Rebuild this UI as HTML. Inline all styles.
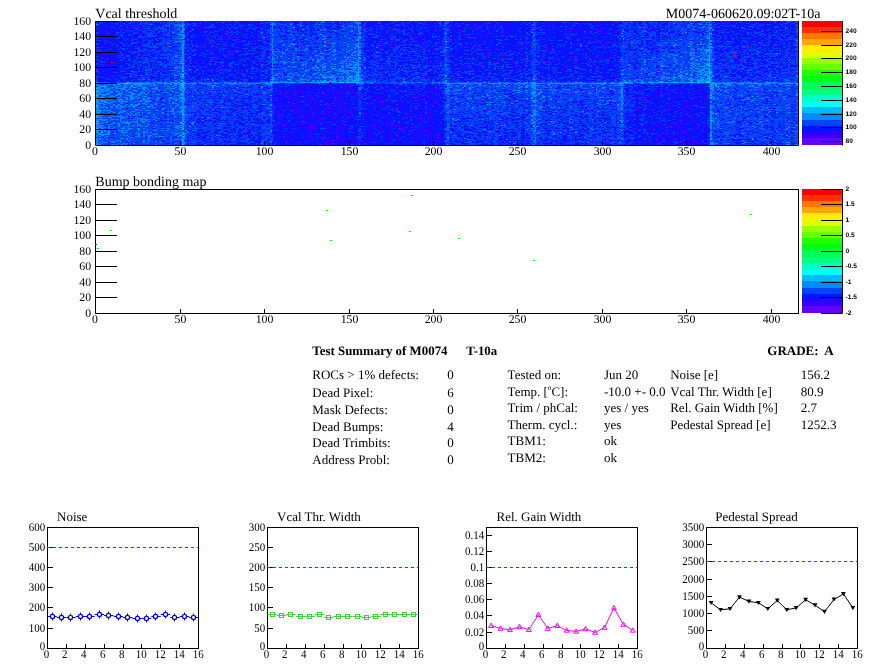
<!DOCTYPE html>
<html lang="en"><head><meta charset="utf-8"><title>Test Summary of M0074 T-10a</title>
<style>html,body{margin:0;padding:0;background:#fff;overflow:hidden}body{width:896px;height:672px}svg text{text-rendering:geometricPrecision}</style>
</head><body>
<svg width="896" height="672" viewBox="0 0 896 672" style="display:block;will-change:transform">
<rect width="896" height="672" fill="#fff"/>
<g transform="translate(96,21.0) scale(1.68750,1)" shape-rendering="crispEdges" fill="none" stroke-width="1">
<rect x="0" y="0" width="416" height="124" fill="#0014ff" stroke="none"/>
<path stroke="#6300ff" d="M290 12.5h1M224 25.5h1M300 32.5h1M266 41.5h1M126 71.5h1m4 0h1M108 73.5h1m27 0h1M128 77.5h1M169 81.5h1M137 82.5h1M349 85.5h1M333 86.5h1M138 87.5h1M198 88.5h1M136 89.5h1m10 0h1M129 91.5h1m20 0h1M349 93.5h1M126 95.5h1M196 99.5h1M114 100.5h1m27 0h1M203 104.5h1M123 106.5h1M142 114.5h1m50 0h1m139 0h1M142 115.5h1M359 120.5h1"/>
<path stroke="#3300ff" d="M4 0.5h2m4 0h2m30 0h1m17 0h1m2 0h1m5 0h1m12 0h1m80 0h1m6 0h1m13 0h2m4 0h1m6 0h2m2 0h1m11 0h1m2 0h1m2 0h1m4 0h1m1 0h2m2 0h1m14 0h1m3 0h1m1 0h1m1 0h2m2 0h1m9 0h1m1 0h1m7 0h4m2 0h2m2 0h1m1 0h1m1 0h1m1 0h2m4 0h1m4 0h1m26 0h1m33 0h1m1 0h1m24 0h1m3 0h1m3 0h1m6 0h1M10 1.5h1m8 0h1m41 0h1m24 0h1m5 0h1m5 0h1m62 0h1m1 0h1m5 0h1m5 0h1m17 0h2m20 0h2m3 0h1m4 0h1m2 0h1m15 0h1m22 0h1m5 0h1m1 0h1m8 0h1m10 0h1m9 0h1m2 0h1m39 0h1m40 0h1m1 0h1m5 0h1m2 0h1M3 2.5h1m3 0h1m1 0h1m15 0h1m13 0h1m19 0h1m11 0h1m21 0h1m1 0h1m41 0h1m26 0h1m31 0h1m12 0h1m6 0h1m2 0h1m5 0h1m23 0h1m1 0h1m1 0h1m11 0h1m1 0h1m4 0h1m4 0h2m4 0h1m4 0h1m5 0h1m1 0h1m6 0h1m2 0h2m1 0h1m41 0h1m45 0h1m14 0h1m2 0h1M6 3.5h1m8 0h1m51 0h1m7 0h1m2 0h1m17 0h1m63 0h1m38 0h1m3 0h1m6 0h1m8 0h1m4 0h3m4 0h1m1 0h1m3 0h1m4 0h1m3 0h1m17 0h1m3 0h1m4 0h1m3 0h1m9 0h1m2 0h2m6 0h2m8 0h1m22 0h1m8 0h1m33 0h1M10 4.5h1m2 0h1m3 0h1m43 0h1m8 0h1m11 0h1m13 0h1m67 0h1m32 0h1m4 0h1m15 0h1m2 0h1m13 0h1m1 0h1m11 0h1m5 0h1m1 0h1m8 0h1m5 0h1m4 0h1m9 0h1m3 0h2m3 0h1m4 0h2m3 0h1M8 5.5h1m14 0h1m1 0h1m37 0h1m1 0h1m6 0h1m10 0h1m75 0h1m1 0h1m2 0h1m5 0h1m9 0h1m4 0h1m25 0h1m4 0h1m4 0h1m3 0h1m2 0h1m10 0h1m4 0h2m7 0h1m13 0h1m17 0h1m3 0h1m11 0h1m5 0h2m71 0h1m31 0h1M7 6.5h1m3 0h1m78 0h1m71 0h1m1 0h1m20 0h1m2 0h1m2 0h1m1 0h1m16 0h1m32 0h1m1 0h1m1 0h1m3 0h1m1 0h1m10 0h1m8 0h1m2 0h3m5 0h1m1 0h2m3 0h1m2 0h2m3 0h1m1 0h2m17 0h1m65 0h1m7 0h1M3 7.5h1m6 0h1m7 0h1m41 0h1m17 0h1m99 0h1m14 0h1m17 0h1m5 0h1m7 0h1m2 0h1m15 0h1m29 0h1m1 0h1m1 0h3m1 0h1m2 0h1m14 0h2m3 0h1m2 0h1m17 0h1m40 0h1m1 0h1m17 0h1m2 0h1m6 0h1m14 0h1M4 8.5h1m3 0h2m55 0h1m7 0h1m6 0h1m1 0h1m8 0h1m5 0h1m11 0h1m33 0h1m49 0h1m5 0h1m9 0h1m2 0h2m5 0h2m4 0h1m3 0h1m10 0h1m5 0h1m6 0h1m13 0h1m6 0h1m6 0h1m3 0h3m3 0h1m9 0h1m76 0h1m1 0h1m16 0h1m5 0h1M4 9.5h1m2 0h3m1 0h1m50 0h1m109 0h1m8 0h1m6 0h1m10 0h1m4 0h2m7 0h2m1 0h1m7 0h1m5 0h1m13 0h1m3 0h1m12 0h1m9 0h1m9 0h1m1 0h2m2 0h1m2 0h1m1 0h1m1 0h2m1 0h2m5 0h1m91 0h1M3 10.5h1m1 0h2m51 0h1m29 0h1m38 0h1m30 0h1m11 0h1m5 0h1m8 0h2m8 0h1m7 0h1m9 0h1m7 0h1m4 0h3m7 0h1m15 0h1m3 0h1m8 0h1m1 0h1m4 0h2m5 0h1m6 0h1m7 0h1m7 0h2m77 0h1m20 0h1M7 11.5h1m2 0h1m15 0h1m11 0h1m16 0h1m17 0h1m38 0h1m49 0h1m7 0h2m9 0h1m30 0h1m15 0h1m8 0h1m29 0h1m5 0h1m5 0h1m3 0h1m7 0h1m8 0h2m5 0h1m1 0h1m75 0h1m15 0h1m9 0h1M34 12.5h1m134 0h2m7 0h1m9 0h2m11 0h1m12 0h1m10 0h1m4 0h1m1 0h1m1 0h2m3 0h1m1 0h1m7 0h1m4 0h1m11 0h2m1 0h1m23 0h1m4 0h1m2 0h1m4 0h1m63 0h1m10 0h1m11 0h1m14 0h1m3 0h1M3 13.5h1m22 0h1m40 0h1m4 0h1m1 0h1m2 0h2m91 0h1m18 0h1m20 0h1m6 0h1m13 0h1m3 0h1m4 0h1m1 0h1m21 0h1m4 0h1m2 0h1m4 0h1m1 0h1m1 0h1m6 0h1m9 0h1M39 14.5h1m24 0h1m2 0h1m16 0h1m78 0h1m11 0h1m25 0h2m6 0h1m6 0h2m3 0h1m13 0h1m1 0h1m1 0h1m12 0h1m10 0h2m1 0h2m7 0h1m2 0h1m1 0h1m4 0h1m4 0h1m4 0h1m3 0h1m1 0h1m2 0h1m27 0h1M3 15.5h1m3 0h1m5 0h1m56 0h1m4 0h1m1 0h1m7 0h1m8 0h1m5 0h1m70 0h1m6 0h1m6 0h2m3 0h1m1 0h1m20 0h1m7 0h1m2 0h1m1 0h1m1 0h1m1 0h1m10 0h1m1 0h1m12 0h1m10 0h1m2 0h1m9 0h1m4 0h1m1 0h1m1 0h2m19 0h1m89 0h1M5 16.5h3m60 0h1m4 0h1m2 0h1m7 0h2m4 0h1m68 0h1m2 0h1m35 0h1m13 0h1m2 0h1m14 0h1m2 0h1m5 0h1m4 0h1m8 0h1m3 0h1m14 0h1m10 0h1m4 0h1m6 0h1m7 0h1m1 0h1m1 0h1m63 0h1m8 0h1m16 0h1m2 0h1M1 17.5h1m4 0h1m49 0h1m4 0h1m6 0h1m3 0h1m3 0h1m8 0h1m9 0h1m92 0h1m21 0h1m16 0h1m7 0h1m2 0h1m2 0h1m6 0h1m4 0h1m12 0h1m11 0h1m2 0h1m16 0h1m6 0h1M1 18.5h1m4 0h1m1 0h1m2 0h1m5 0h1m68 0h1m4 0h1m3 0h1m80 0h1m3 0h1m15 0h1m32 0h1m59 0h1m3 0h1M61 19.5h1m8 0h1m12 0h1m18 0h1m64 0h1m7 0h1m5 0h1m3 0h1m6 0h1m3 0h1m13 0h1m9 0h1m7 0h1m23 0h1m30 0h1m7 0h1m3 0h1m2 0h1m3 0h1m89 0h1m9 0h1m2 0h1M5 20.5h1m2 0h2m19 0h1m6 0h1m20 0h1m1 0h1m10 0h1m5 0h1m1 0h1m18 0h1m65 0h2m5 0h1m10 0h1m29 0h1m2 0h1m4 0h1m15 0h1m7 0h1m12 0h1m8 0h2m4 0h1m3 0h1m15 0h2m13 0h1m97 0h1m8 0h1M0 21.5h2m9 0h1m5 0h1m5 0h1m39 0h1m1 0h1m7 0h1m8 0h1m1 0h1m7 0h1m3 0h1m84 0h1m5 0h1m25 0h1m3 0h1m30 0h1m17 0h1m9 0h1m2 0h1m11 0h1m7 0h2m9 0h1m101 0h1M8 22.5h1m1 0h1m13 0h1m1 0h1m51 0h1m1 0h1m6 0h1m3 0h1m76 0h1m58 0h1m7 0h1m11 0h3m2 0h2m11 0h1m9 0h2M3 23.5h1m1 0h1m6 0h1m4 0h1m7 0h1m6 0h1m23 0h1m9 0h2m9 0h1m15 0h1m6 0h1m61 0h1m10 0h1m4 0h1m1 0h1m11 0h1m10 0h3m6 0h2m2 0h1m6 0h1m6 0h1m4 0h1m20 0h1m14 0h1m11 0h1m5 0h1m3 0h1m6 0h1m4 0h1M2 24.5h1m5 0h2m15 0h1m40 0h1m6 0h1m5 0h1m4 0h1m6 0h1m68 0h1m17 0h1m33 0h1m1 0h1m6 0h1m3 0h1m2 0h1m1 0h1m11 0h1m19 0h1m1 0h1m5 0h1m2 0h1m8 0h1m13 0h1m2 0h1m1 0h1m98 0h1M3 25.5h1m2 0h1m1 0h1m17 0h1m38 0h1m4 0h2m4 0h1m9 0h1m87 0h2m42 0h1m8 0h1m11 0h1m1 0h1m5 0h1m21 0h1m15 0h1m2 0h1m113 0h1m10 0h1M2 26.5h1m6 0h2m18 0h1m43 0h1m7 0h1m2 0h1m6 0h1m4 0h1m5 0h1m78 0h1m48 0h1m5 0h1m1 0h1m7 0h1m9 0h1m7 0h1m12 0h2m1 0h1m12 0h2M4 27.5h2m16 0h1m3 0h1m39 0h1m2 0h1m14 0h1m84 0h2m3 0h1m21 0h1m2 0h1m19 0h1m1 0h1m6 0h1m1 0h1m9 0h1m3 0h1m2 0h1m17 0h2m1 0h1m3 0h1m17 0h1m103 0h1M4 28.5h1m1 0h2m1 0h1m8 0h1m17 0h1m24 0h2m4 0h1m6 0h1m1 0h1m5 0h1m3 0h1m6 0h1m70 0h1m31 0h1m17 0h2m2 0h1m10 0h1m8 0h1m1 0h2m5 0h1m8 0h1m11 0h1m10 0h1m2 0h1m12 0h1m5 0h1m2 0h2m86 0h2M4 29.5h1m17 0h1m38 0h1m20 0h1m2 0h1m1 0h1m107 0h1m3 0h1m25 0h1m6 0h1m3 0h1m5 0h1m9 0h1m14 0h1m2 0h1m4 0h1m13 0h1m88 0h1M10 30.5h1m28 0h1m2 0h1m27 0h1m128 0h1m9 0h2m4 0h3m1 0h1m16 0h1m6 0h1m2 0h1m29 0h1m6 0h1m14 0h1m1 0h1m3 0h2M2 31.5h1m77 0h1m9 0h1m1 0h1m8 0h1m63 0h1m54 0h1m13 0h1m5 0h1m11 0h1m16 0h1m8 0h1m8 0h1m2 0h1m12 0h1m11 0h1m9 0h1m87 0h1M13 32.5h1m50 0h1m3 0h1m17 0h1m4 0h1m100 0h1m3 0h1m14 0h1m18 0h1m16 0h2m2 0h1m1 0h1m12 0h1m12 0h1m7 0h1m107 0h1M5 33.5h1m5 0h1m6 0h1m4 0h1m2 0h1m32 0h1m22 0h1m117 0h1m12 0h1m7 0h1m9 0h1m10 0h1m6 0h1m17 0h1m11 0h1m1 0h1m16 0h1m3 0h1m3 0h1m72 0h2M9 34.5h1m54 0h4m14 0h1m1 0h1m38 0h1m38 0h1m18 0h1m8 0h1m21 0h1m2 0h1m9 0h1m10 0h1m9 0h1m1 0h1m4 0h2m19 0h1m20 0h1m4 0h1m7 0h1m60 0h1m18 0h1M6 35.5h2m48 0h1m14 0h1m13 0h1m2 0h1m109 0h1m23 0h1m1 0h1m17 0h1m3 0h2m5 0h1m28 0h1m98 0h1M5 36.5h2m3 0h3m4 0h1m18 0h1m24 0h1m14 0h1m7 0h2m8 0h1m129 0h1m5 0h1m2 0h1m1 0h1m38 0h1m2 0h1m2 0h1m4 0h1m5 0h1m13 0h1m3 0h1M2 37.5h1m3 0h1m4 0h1m62 0h1m4 0h1m86 0h1m25 0h1m5 0h1m32 0h1m9 0h1m14 0h1m10 0h1m5 0h1m5 0h1m2 0h1m3 0h1m4 0h1m1 0h3m4 0h1m4 0h1m62 0h1M1 38.5h1m5 0h1m3 0h1m14 0h1m31 0h1m7 0h1m16 0h1m11 0h1m82 0h1m31 0h1m5 0h1m7 0h1m32 0h1m4 0h1m2 0h1m29 0h1m9 0h1m74 0h1M9 39.5h1m1 0h1m1 0h1m43 0h1m3 0h1m8 0h1m20 0h1m3 0h1m133 0h1m9 0h1m8 0h1m17 0h1m13 0h1m2 0h1m1 0h2m6 0h1m14 0h2m70 0h1M2 40.5h1m11 0h1m46 0h1m28 0h1m7 0h1m85 0h2m26 0h1m14 0h1m2 0h1m7 0h1m1 0h1m35 0h1m41 0h1m48 0h1m34 0h1M4 41.5h1m5 0h1m6 0h1m52 0h1m19 0h1m107 0h1m23 0h1m5 0h1m7 0h1m2 0h2m5 0h1m43 0h1m4 0h1m84 0h1m23 0h1M4 42.5h2m13 0h1m21 0h1m18 0h1m8 0h1m16 0h1m4 0h2m98 0h1m2 0h1m25 0h1m1 0h1m29 0h1m3 0h2m15 0h1m6 0h1m10 0h1m103 0h1m18 0h1M5 43.5h4m27 0h1m55 0h1m1 0h1m1 0h1m118 0h1m11 0h1m2 0h1m11 0h1m4 0h1m27 0h1m2 0h2m10 0h1m6 0h1m9 0h1m92 0h1M4 44.5h1m53 0h1m11 0h1m6 0h1m162 0h1m4 0h1m7 0h1m13 0h1m7 0h1m1 0h1m9 0h1m14 0h1m1 0h1m3 0h1M6 45.5h1m1 0h1m57 0h1m5 0h2m3 0h1m19 0h1m69 0h1m46 0h1m3 0h1m16 0h1m10 0h1m5 0h1m17 0h1m11 0h1m5 0h1m3 0h1m1 0h1m94 0h1m22 0h1M6 46.5h1m2 0h1m9 0h1m70 0h1m101 0h1m4 0h1m18 0h2m6 0h1m27 0h1m11 0h1m11 0h3m22 0h1M0 47.5h1m21 0h1m39 0h1m3 0h1m2 0h1m17 0h1m12 0h1m96 0h1m52 0h1m1 0h1m24 0h1m1 0h1M10 48.5h3m45 0h1m4 0h1m2 0h1m23 0h1m6 0h1m122 0h1m1 0h1m3 0h1m5 0h1m6 0h1m5 0h1m1 0h1m14 0h1m31 0h1m3 0h1M7 49.5h1m3 0h1m1 0h1m2 0h1m1 0h1m5 0h1m31 0h1m13 0h1m121 0h1m22 0h1m61 0h1m121 0h1M5 50.5h1m1 0h1m3 0h2m1 0h1m11 0h1m2 0h1m66 0h1m77 0h1m38 0h1m23 0h1m9 0h1m5 0h1m12 0h1m24 0h1m76 0h1m20 0h1m5 0h1m9 0h1M18 51.5h1m66 0h2m100 0h1m21 0h1m44 0h1m31 0h1m21 0h1M10 52.5h1m2 0h1m77 0h1m134 0h1m20 0h1m28 0h1M4 53.5h1m1 0h1m2 0h1m49 0h1m3 0h1m3 0h1m6 0h1m3 0h1m3 0h1m8 0h1m108 0h1m56 0h1m20 0h1m17 0h1m4 0h1m74 0h1m24 0h1m11 0h1M0 54.5h1m2 0h1m3 0h1m1 0h1m8 0h1m47 0h1m7 0h2m10 0h1m85 0h1m79 0h1m17 0h1m5 0h1m7 0h1m5 0h1m111 0h1m8 0h1M2 55.5h1m4 0h1m5 0h1m8 0h1m174 0h1m28 0h1m81 0h1m92 0h1M12 56.5h1m22 0h1m29 0h1m2 0h1m20 0h1m1 0h1m10 0h1m122 0h1m12 0h1m1 0h1m2 0h1m46 0h1m13 0h1M1 57.5h1m9 0h1m65 0h1m12 0h1m69 0h1m102 0h1m3 0h1m14 0h1m18 0h1m2 0h1m2 0h1M6 58.5h1m259 0h1m2 0h1m8 0h1M1 59.5h1m84 0h1m4 0h1m96 0h1m7 0h1m5 0h1m70 0h1m11 0h1m5 0h1M24 60.5h1m200 0h1m40 0h1m5 0h1M105 63.5h1m3 0h1m3 0h1m1 0h1m2 0h1m3 0h1m1 0h4m3 0h1m4 0h4m2 0h1m4 0h1m14 0h1m2 0h1m3 0h1m4 0h1m26 0h1m119 0h1m22 0h1m1 0h1m1 0h1m9 0h1M106 64.5h1m5 0h1m5 0h1m5 0h1m6 0h1m10 0h1m1 0h1m7 0h1m1 0h1m5 0h1m7 0h1m2 0h1m29 0h1m135 0h2m5 0h1m2 0h1M77 65.5h1m43 0h2m1 0h1m1 0h4m1 0h1m3 0h2m2 0h1m2 0h1m2 0h1m1 0h2m2 0h2m16 0h1m6 0h1m1 0h1m1 0h1m15 0h1m131 0h1M105 66.5h1m2 0h1m2 0h1m9 0h6m1 0h1m6 0h1m2 0h1m3 0h1m1 0h1m1 0h2m2 0h1m2 0h1m12 0h1m8 0h1m6 0h2m7 0h1m127 0h1m12 0h1m4 0h1m8 0h1m3 0h1m3 0h1m2 0h1M109 67.5h1m6 0h3m2 0h1m9 0h1m1 0h1m9 0h3m1 0h1m2 0h3m11 0h1m6 0h1m2 0h1m24 0h1m2 0h1m115 0h1m14 0h2m7 0h1m11 0h1m2 0h1m4 0h1M110 68.5h1m1 0h1m1 0h2m1 0h1m8 0h3m4 0h1m1 0h3m2 0h2m3 0h2m4 0h1m19 0h1m2 0h1m4 0h1m6 0h1m12 0h2m117 0h1m20 0h1m4 0h1m1 0h3m3 0h1m8 0h1M108 69.5h2m3 0h1m1 0h1m3 0h1m1 0h3m2 0h1m2 0h1m6 0h5m1 0h2m2 0h3m2 0h1m1 0h1m15 0h1m22 0h1m4 0h1m5 0h1m111 0h1m10 0h1m7 0h1m11 0h1m1 0h1m9 0h1M116 70.5h3m5 0h6m4 0h1m1 0h2m1 0h1m2 0h1m8 0h1m17 0h2m9 0h1m4 0h1m2 0h1m1 0h1m2 0h1m3 0h2m1 0h1m119 0h1m2 0h1m19 0h1m3 0h1m2 0h3M111 71.5h2m1 0h2m1 0h2m3 0h1m1 0h1m2 0h1m10 0h1m3 0h4m4 0h3m8 0h1m9 0h1m24 0h1m1 0h2m3 0h1m118 0h1m10 0h1m6 0h2m4 0h1m8 0h3m1 0h1M109 72.5h2m6 0h3m3 0h1m1 0h1m5 0h1m4 0h1m1 0h1m1 0h1m3 0h1m8 0h1m6 0h1m12 0h1m1 0h2m7 0h1m7 0h1m2 0h1m3 0h2m1 0h2m119 0h1m2 0h3m10 0h1m2 0h1m5 0h1m1 0h1m4 0h2m1 0h1M98 73.5h1m8 0h1m1 0h1m1 0h2m5 0h2m7 0h1m5 0h1m1 0h1m4 0h1m5 0h2m1 0h1m3 0h2m6 0h1m1 0h1m14 0h1m10 0h1m5 0h1m4 0h2m114 0h1m15 0h1m12 0h1m1 0h1m3 0h1m5 0h1M107 74.5h1m2 0h2m1 0h1m1 0h1m6 0h6m1 0h1m2 0h1m4 0h1m4 0h1m1 0h1m2 0h1m5 0h1m7 0h1m2 0h2m4 0h1m17 0h1m7 0h1m1 0h1m1 0h1m2 0h1m124 0h1m3 0h1m9 0h1m4 0h2m1 0h2m1 0h1m4 0h1m2 0h1M107 75.5h2m4 0h3m2 0h3m4 0h2m2 0h1m3 0h1m2 0h2m2 0h1m1 0h1m2 0h2m5 0h1m1 0h1m10 0h1m1 0h1m1 0h1m15 0h1m3 0h4m3 0h2m122 0h1m1 0h1m7 0h1m1 0h1m5 0h1m3 0h2m3 0h1m7 0h1m3 0h3M109 76.5h2m6 0h1m2 0h1m1 0h3m4 0h1m1 0h2m2 0h2m1 0h1m1 0h1m1 0h6m2 0h1m12 0h1m3 0h1m1 0h2m1 0h1m1 0h1m6 0h1m16 0h2m121 0h1m10 0h1m2 0h1m1 0h1m2 0h1m1 0h3m1 0h1m2 0h1m1 0h3m24 0h1M106 77.5h1m2 0h1m3 0h2m2 0h1m4 0h2m3 0h1m1 0h3m5 0h1m1 0h1m2 0h2m1 0h2m3 0h1m11 0h2m2 0h1m3 0h2m12 0h1m3 0h1m3 0h1m2 0h1m2 0h2m1 0h1m124 0h2m5 0h1m15 0h2m3 0h1m7 0h1M108 78.5h1m5 0h4m7 0h7m3 0h2m4 0h1m2 0h3m5 0h1m16 0h1m3 0h1m5 0h1m1 0h2m9 0h1m5 0h1m128 0h1m3 0h1m2 0h1m5 0h1m3 0h1m1 0h1m2 0h1m6 0h2m3 0h1M38 79.5h1m74 0h3m1 0h1m1 0h1m2 0h3m2 0h1m1 0h1m2 0h1m2 0h1m3 0h1m1 0h3m1 0h1m1 0h1m10 0h1m4 0h1m2 0h1m20 0h1m5 0h1m2 0h2m1 0h1m2 0h1m1 0h1m114 0h1m6 0h1m8 0h1m4 0h1m2 0h2m1 0h1m4 0h1m2 0h2m5 0h1M106 80.5h2m1 0h1m3 0h2m2 0h1m6 0h1m1 0h2m2 0h3m2 0h1m2 0h3m1 0h1m1 0h2m4 0h1m2 0h2m7 0h3m23 0h1m11 0h1m1 0h3m47 0h1m78 0h1m9 0h1m2 0h1m3 0h1m2 0h1m1 0h1m1 0h1m5 0h1M105 81.5h1m13 0h1m2 0h1m2 0h3m5 0h2m4 0h3m2 0h1m2 0h1m6 0h1m5 0h1m5 0h3m1 0h1m7 0h2m2 0h1m6 0h1m2 0h1m3 0h1m2 0h1m139 0h2m8 0h1m1 0h1m1 0h1m2 0h1m3 0h2M91 82.5h1m14 0h1m1 0h2m1 0h1m14 0h1m2 0h2m4 0h2m2 0h1m1 0h4m1 0h1m2 0h1m1 0h3m17 0h1m24 0h1m5 0h1m54 0h1m62 0h1m4 0h1m1 0h2m2 0h2m4 0h1m1 0h1m1 0h1m5 0h1m4 0h1m8 0h2M105 83.5h1m2 0h1m1 0h1m1 0h1m2 0h3m2 0h1m5 0h2m2 0h3m1 0h1m1 0h3m5 0h1m2 0h1m12 0h1m1 0h1m6 0h1m5 0h1m3 0h2m2 0h1m8 0h1m5 0h2m127 0h1m2 0h1m1 0h1m11 0h1m4 0h1m1 0h1m2 0h1M64 84.5h1m45 0h1m1 0h2m1 0h2m5 0h3m3 0h1m1 0h1m7 0h1m1 0h1m1 0h2m13 0h1m6 0h2m1 0h1m21 0h2m6 0h1m1 0h2m128 0h1m9 0h1m4 0h1m2 0h1m3 0h3m4 0h1m2 0h1M90 85.5h1m17 0h2m4 0h2m1 0h3m1 0h1m2 0h2m2 0h2m2 0h1m5 0h2m3 0h3m3 0h1m3 0h1m7 0h1m7 0h1m1 0h2m8 0h1m11 0h1m2 0h1m1 0h1m1 0h2m121 0h2m14 0h1m1 0h1m3 0h1m2 0h1m1 0h1m6 0h2M108 86.5h2m2 0h1m10 0h1m2 0h2m2 0h1m2 0h1m9 0h1m2 0h1m11 0h1m10 0h1m10 0h1m1 0h1m2 0h1m5 0h1m5 0h1m126 0h1m11 0h1m2 0h1m1 0h1m7 0h4M108 87.5h1m3 0h1m1 0h1m3 0h1m1 0h1m5 0h1m2 0h4m4 0h1m1 0h2m1 0h3m1 0h2m1 0h1m2 0h2m12 0h1m6 0h1m10 0h1m2 0h1m1 0h1m6 0h1m5 0h1m126 0h1m4 0h2m1 0h1m1 0h1m2 0h1m3 0h2m3 0h2m8 0h1M109 88.5h2m1 0h1m1 0h1m1 0h2m4 0h1m3 0h2m1 0h1m1 0h1m2 0h1m2 0h1m1 0h1m3 0h1m2 0h1m2 0h1m3 0h1m14 0h1m10 0h1m4 0h1m2 0h1m5 0h1m6 0h2m54 0h1m44 0h1m16 0h1m4 0h1m7 0h1m2 0h1m10 0h1m5 0h1m2 0h2M107 89.5h2m3 0h1m4 0h3m2 0h2m2 0h1m1 0h1m3 0h1m2 0h1m2 0h1m1 0h1m7 0h1m4 0h1m10 0h1m5 0h1m7 0h2m1 0h1m2 0h2m2 0h1m1 0h1m9 0h1m118 0h2m5 0h1m11 0h2m4 0h2m1 0h1m2 0h1M90 90.5h1m20 0h1m3 0h2m3 0h1m2 0h1m1 0h3m1 0h3m5 0h3m2 0h2m3 0h1m1 0h2m2 0h1m4 0h1m5 0h2m2 0h1m4 0h2m5 0h1m6 0h2m6 0h1m1 0h3m2 0h1m118 0h1m5 0h1m4 0h1m16 0h1m8 0h1m2 0h2M108 91.5h1m1 0h1m5 0h2m3 0h2m2 0h1m2 0h1m2 0h1m1 0h2m1 0h4m2 0h2m2 0h1m4 0h1m8 0h1m2 0h1m3 0h1m1 0h1m5 0h1m9 0h1m5 0h1m4 0h3m3 0h1m22 0h1m89 0h1m7 0h1m3 0h1m6 0h1m12 0h1m2 0h1m2 0h1m1 0h1M108 92.5h2m1 0h1m2 0h1m2 0h2m1 0h1m1 0h1m1 0h1m1 0h1m2 0h5m1 0h2m2 0h1m3 0h1m3 0h1m5 0h1m9 0h1m2 0h3m1 0h1m1 0h1m2 0h2m15 0h1m3 0h1m2 0h1m126 0h2m4 0h2m1 0h1m11 0h5m2 0h1M106 93.5h1m1 0h4m4 0h1m1 0h2m1 0h3m1 0h3m1 0h2m4 0h1m3 0h1m5 0h1m1 0h1m1 0h1m10 0h1m7 0h1m2 0h1m1 0h1m8 0h1m8 0h2m4 0h1m78 0h1m44 0h1m9 0h1m8 0h1m9 0h2m7 0h1m1 0h1M110 94.5h1m1 0h1m5 0h1m1 0h1m6 0h1m1 0h1m6 0h1m3 0h1m1 0h1m2 0h1m6 0h2m16 0h4m7 0h1m5 0h1m8 0h1m6 0h1m123 0h1m10 0h1m5 0h1m5 0h1m61 0h1M107 95.5h1m9 0h1m3 0h1m1 0h2m3 0h1m2 0h2m2 0h1m2 0h1m1 0h2m1 0h1m6 0h1m1 0h1m12 0h1m3 0h1m1 0h1m3 0h1m5 0h1m3 0h1m4 0h1m2 0h1m1 0h5m4 0h1m139 0h2m2 0h1m3 0h1m27 0h1M108 96.5h1m1 0h1m1 0h1m1 0h2m1 0h1m7 0h1m1 0h3m5 0h1m1 0h2m2 0h1m1 0h1m3 0h1m2 0h1m1 0h3m4 0h1m12 0h2m1 0h1m11 0h1m1 0h1m7 0h2m2 0h2m101 0h1m25 0h1m15 0h1m2 0h1m2 0h1m1 0h1m5 0h1M105 97.5h1m2 0h1m4 0h2m4 0h2m3 0h3m2 0h1m3 0h4m1 0h1m2 0h1m1 0h1m1 0h1m1 0h2m2 0h1m1 0h1m9 0h1m1 0h1m4 0h1m1 0h1m7 0h1m4 0h2m2 0h3m121 0h1m5 0h1m25 0h1m2 0h1m2 0h1M108 98.5h3m2 0h3m3 0h1m6 0h1m4 0h1m4 0h1m1 0h1m1 0h1m1 0h1m1 0h2m1 0h2m3 0h1m15 0h2m3 0h1m2 0h1m2 0h2m11 0h1m1 0h1m1 0h1m129 0h1m3 0h1m13 0h1m1 0h1m1 0h2m6 0h1m1 0h3M107 99.5h2m12 0h1m2 0h1m2 0h1m1 0h3m1 0h1m2 0h1m1 0h2m4 0h1m8 0h1m3 0h1m3 0h1m2 0h2m6 0h1m14 0h1m3 0h3m5 0h1m2 0h1m125 0h1m5 0h1m8 0h3m1 0h2m1 0h2m2 0h1m4 0h1M63 100.5h1m48 0h1m8 0h1m1 0h1m5 0h1m5 0h1m2 0h3m2 0h2m21 0h1m1 0h1m3 0h1m1 0h1m3 0h1m4 0h3m7 0h1m5 0h1m17 0h1m11 0h1m49 0h1m6 0h1m45 0h2m10 0h1m4 0h2m4 0h1m2 0h1M105 101.5h1m5 0h1m9 0h3m1 0h4m2 0h1m6 0h1m1 0h2m2 0h1m1 0h4m1 0h1m12 0h1m5 0h1m1 0h1m5 0h1m3 0h1m6 0h1m7 0h1m1 0h1m3 0h1m91 0h1m22 0h1m1 0h1m9 0h1m1 0h1m12 0h1m3 0h2m3 0h1m1 0h2m3 0h1m38 0h1M109 102.5h2m1 0h1m2 0h1m4 0h1m1 0h1m1 0h1m2 0h1m8 0h1m1 0h1m1 0h2m3 0h2m1 0h1m3 0h1m5 0h1m1 0h1m2 0h1m7 0h1m5 0h1m2 0h2m1 0h1m1 0h1m4 0h1m1 0h2m1 0h1m1 0h1m1 0h4m1 0h1m1 0h1m112 0h1m6 0h1m11 0h1m1 0h1m5 0h1m1 0h1m1 0h2m5 0h2M87 103.5h1m20 0h1m1 0h3m2 0h1m2 0h1m1 0h1m1 0h2m1 0h1m1 0h3m2 0h2m1 0h1m1 0h2m4 0h1m1 0h2m6 0h1m7 0h1m1 0h1m5 0h1m2 0h1m2 0h2m1 0h1m2 0h2m15 0h1m1 0h1m65 0h1m55 0h1m3 0h1m4 0h1m3 0h1m1 0h1m3 0h2m1 0h1m1 0h1m8 0h1m2 0h1m1 0h2M77 104.5h1m38 0h2m1 0h2m2 0h1m5 0h1m1 0h1m3 0h2m1 0h1m1 0h1m2 0h2m2 0h1m1 0h1m1 0h1m1 0h1m6 0h1m5 0h1m5 0h1m1 0h2m6 0h3m4 0h1m5 0h1m1 0h2m5 0h1m80 0h1m38 0h1m8 0h3m2 0h1m1 0h1m3 0h2m1 0h2m1 0h1m1 0h1m2 0h1m1 0h1m2 0h2m17 0h1M71 105.5h1m33 0h1m3 0h2m2 0h2m5 0h1m4 0h6m7 0h2m3 0h1m1 0h1m1 0h2m14 0h3m1 0h2m4 0h1m2 0h1m1 0h2m2 0h1m3 0h1m5 0h1m2 0h2m1 0h1m4 0h1m1 0h1m92 0h1m27 0h1m1 0h1m3 0h2m2 0h1m2 0h3m1 0h1m2 0h1m1 0h1m4 0h1m2 0h2m4 0h1M106 106.5h1m1 0h1m1 0h3m1 0h1m1 0h1m2 0h2m1 0h1m2 0h1m3 0h3m2 0h1m1 0h2m1 0h1m1 0h3m2 0h1m5 0h1m5 0h1m3 0h1m4 0h1m3 0h1m3 0h1m9 0h1m8 0h1m9 0h1m43 0h2m70 0h1m10 0h1m9 0h2m6 0h1m4 0h2m1 0h1m1 0h1m29 0h1M118 107.5h1m1 0h1m4 0h2m1 0h4m5 0h2m3 0h2m1 0h1m3 0h1m4 0h1m12 0h1m1 0h1m10 0h3m3 0h1m3 0h1m4 0h3m74 0h1m43 0h1m2 0h1m1 0h1m5 0h1m2 0h2m6 0h1m5 0h4m1 0h1m3 0h1m1 0h1m2 0h1m2 0h2M106 108.5h3m6 0h1m1 0h1m1 0h2m3 0h1m1 0h1m1 0h1m4 0h1m3 0h1m2 0h1m2 0h1m6 0h3m9 0h1m2 0h2m25 0h1m1 0h1m4 0h1m4 0h1m123 0h2m5 0h1m6 0h2m1 0h1m1 0h1m1 0h1m3 0h3m3 0h4M89 109.5h1m21 0h1m2 0h1m9 0h1m2 0h1m9 0h1m3 0h6m2 0h1m4 0h1m5 0h3m2 0h2m1 0h2m2 0h1m7 0h2m2 0h1m1 0h1m3 0h1m2 0h4m9 0h1m59 0h1m15 0h1m31 0h1m12 0h1m8 0h1m6 0h1m4 0h4m2 0h1M85 110.5h1m23 0h1m5 0h1m2 0h1m1 0h1m2 0h1m1 0h1m1 0h2m7 0h1m1 0h1m2 0h3m2 0h1m5 0h1m10 0h1m4 0h1m5 0h1m1 0h1m1 0h1m5 0h2m13 0h2m2 0h1m1 0h1m122 0h1m2 0h1m1 0h1m11 0h1m8 0h1m1 0h2m1 0h2m1 0h1M66 111.5h1m39 0h3m4 0h1m1 0h1m2 0h1m4 0h1m1 0h3m8 0h2m5 0h1m17 0h3m6 0h1m7 0h4m6 0h1m2 0h2m3 0h2m3 0h1m113 0h1m8 0h1m2 0h1m10 0h1m6 0h1m1 0h3m1 0h1m1 0h1m1 0h1m4 0h2M106 112.5h1m11 0h1m1 0h1m1 0h1m5 0h1m2 0h1m1 0h1m3 0h3m3 0h2m3 0h1m4 0h1m9 0h1m14 0h3m4 0h1m6 0h1m2 0h2m1 0h1m1 0h1m2 0h1m1 0h1m7 0h1m71 0h1m32 0h1m1 0h1m5 0h2m3 0h1m4 0h1m4 0h1m9 0h1m5 0h1m2 0h1M89 113.5h1m22 0h1m4 0h1m6 0h1m2 0h2m4 0h1m1 0h2m2 0h1m3 0h1m2 0h1m20 0h1m5 0h2m2 0h1m4 0h1m3 0h1m1 0h1m2 0h2m3 0h2m1 0h5m75 0h1m50 0h1m5 0h1m3 0h1m3 0h1m1 0h2m1 0h2m8 0h2M116 114.5h1m3 0h1m6 0h1m1 0h1m4 0h3m2 0h1m3 0h2m1 0h1m3 0h2m1 0h1m4 0h1m1 0h1m2 0h1m7 0h4m5 0h1m1 0h1m2 0h1m1 0h1m6 0h1m2 0h1m117 0h1m10 0h1m2 0h1m13 0h1m2 0h3m1 0h1m5 0h2M61 115.5h1m44 0h1m3 0h1m1 0h1m1 0h1m3 0h1m1 0h1m1 0h1m3 0h3m1 0h1m2 0h1m1 0h1m3 0h2m2 0h1m1 0h2m4 0h1m10 0h2m9 0h1m5 0h1m6 0h1m3 0h1m1 0h2m2 0h2m7 0h1m95 0h1m30 0h2m2 0h1m2 0h1m1 0h1m6 0h1m1 0h3m6 0h1M84 116.5h1m11 0h1m10 0h2m3 0h2m2 0h1m1 0h3m3 0h3m4 0h1m4 0h3m6 0h1m1 0h1m10 0h1m3 0h1m3 0h1m3 0h1m3 0h1m3 0h1m5 0h2m3 0h1m2 0h4m1 0h1m134 0h1m1 0h1m4 0h1m7 0h2m2 0h1m1 0h1m2 0h1m3 0h1M107 117.5h1m3 0h1m3 0h1m4 0h1m2 0h1m4 0h1m7 0h2m2 0h1m1 0h3m1 0h1m6 0h1m3 0h1m4 0h3m3 0h1m1 0h1m1 0h1m1 0h1m4 0h1m1 0h1m3 0h1m2 0h1m4 0h1m3 0h2m2 0h2m1 0h1m25 0h1m18 0h1m69 0h1m4 0h1m1 0h1m3 0h1m2 0h1m1 0h3m1 0h1m1 0h3m1 0h1m4 0h2m2 0h2m4 0h1m51 0h1M106 118.5h1m1 0h1m1 0h2m5 0h1m7 0h7m7 0h1m3 0h2m1 0h1m4 0h2m1 0h1m4 0h1m2 0h2m5 0h1m3 0h1m1 0h1m2 0h1m2 0h1m4 0h1m1 0h1m3 0h2m1 0h3m1 0h1m1 0h1m3 0h1m77 0h1m40 0h1m10 0h2m10 0h1m3 0h2M110 119.5h4m2 0h1m2 0h1m5 0h1m4 0h1m5 0h1m1 0h2m1 0h1m2 0h4m1 0h1m2 0h2m7 0h1m4 0h1m10 0h1m3 0h1m7 0h1m6 0h1m3 0h2m1 0h1m36 0h1m47 0h1m17 0h1m14 0h1m5 0h1m4 0h1m7 0h1m5 0h1m1 0h4m2 0h1m1 0h1m1 0h1M108 120.5h2m3 0h1m1 0h2m3 0h1m1 0h2m2 0h1m2 0h1m1 0h2m3 0h2m1 0h1m1 0h1m2 0h1m12 0h1m2 0h1m1 0h3m2 0h1m1 0h2m4 0h1m4 0h1m1 0h2m2 0h1m1 0h1m3 0h1m5 0h1m121 0h1m12 0h1m14 0h1m2 0h1m1 0h3m1 0h1m28 0h1M105 121.5h1m3 0h2m2 0h2m3 0h3m2 0h1m5 0h1m1 0h1m1 0h1m1 0h1m1 0h4m1 0h2m2 0h1m3 0h1m2 0h1m4 0h1m1 0h1m1 0h2m2 0h1m1 0h1m1 0h1m2 0h2m4 0h1m2 0h1m1 0h2m3 0h1m2 0h2m4 0h1m2 0h1m1 0h1m125 0h1m2 0h1m2 0h1m3 0h1m6 0h1m1 0h2m1 0h1m1 0h4M105 122.5h4m1 0h1m2 0h2m5 0h1m1 0h3m3 0h1m2 0h2m6 0h1m1 0h1m2 0h2m2 0h1m3 0h1m9 0h1m1 0h1m2 0h1m1 0h4m4 0h1m1 0h1m1 0h3m3 0h3m7 0h1m2 0h1m2 0h1m113 0h1m1 0h1m12 0h1m5 0h1m1 0h1m14 0h3m4 0h1M96 123.5h1m11 0h1m9 0h1m1 0h1m1 0h1m5 0h1m1 0h1m3 0h5m1 0h1m1 0h2m1 0h1m1 0h1m10 0h1m1 0h1m3 0h1m4 0h2m1 0h1m10 0h1m3 0h1m3 0h2m4 0h1m2 0h1m2 0h1m116 0h2m5 0h1m4 0h1m2 0h1m5 0h1m2 0h4m1 0h2m3 0h2m2 0h1"/>
<path stroke="#0044ff" d="M0 0.5h1m24 0h2m1 0h1m1 0h1m2 0h1m1 0h1m1 0h1m5 0h3m1 0h1m1 0h2m1 0h2m5 0h1m4 0h2m10 0h1m2 0h1m3 0h1m8 0h1m4 0h2m4 0h5m3 0h1m1 0h2m2 0h1m2 0h2m3 0h1m2 0h1m1 0h4m1 0h1m3 0h2m3 0h1m1 0h7m1 0h1m2 0h1m2 0h1m6 0h1m8 0h3m7 0h1m2 0h1m5 0h1m6 0h1m1 0h1m1 0h2m2 0h1m25 0h1m22 0h1m10 0h1m5 0h1m18 0h1m11 0h2m2 0h2m3 0h2m6 0h2m8 0h1m5 0h1m1 0h2m2 0h1m1 0h9m1 0h4m2 0h1m5 0h1m2 0h2m7 0h1m2 0h1m1 0h1m14 0h1m3 0h1m2 0h4m2 0h1M3 1.5h1m5 0h1m4 0h1m5 0h3m1 0h1m1 0h1m2 0h1m1 0h1m2 0h1m1 0h1m2 0h7m1 0h6m9 0h1m8 0h2m1 0h2m2 0h1m3 0h2m15 0h1m1 0h5m2 0h1m1 0h1m1 0h1m2 0h1m4 0h4m1 0h1m3 0h1m1 0h1m1 0h1m1 0h1m1 0h2m1 0h2m2 0h1m1 0h1m1 0h1m2 0h3m1 0h1m3 0h1m7 0h1m8 0h1m5 0h1m8 0h1m11 0h2m2 0h2m23 0h1m4 0h1m15 0h1m3 0h1m1 0h3m15 0h2m4 0h1m25 0h1m2 0h3m1 0h2m1 0h1m3 0h2m2 0h6m1 0h1m1 0h2m2 0h8m1 0h1m1 0h2m1 0h1m3 0h4m2 0h3m5 0h1m6 0h1m1 0h2m19 0h1m6 0h2m3 0h2M0 2.5h1m1 0h1m8 0h2m3 0h1m2 0h2m5 0h1m1 0h3m1 0h2m4 0h1m3 0h5m1 0h3m1 0h1m1 0h1m2 0h2m2 0h1m6 0h1m6 0h1m8 0h1m12 0h2m2 0h1m1 0h1m2 0h4m2 0h1m1 0h2m4 0h2m4 0h1m3 0h2m1 0h1m2 0h1m2 0h2m3 0h1m1 0h1m1 0h4m1 0h1m5 0h1m7 0h2m6 0h1m5 0h1m3 0h1m5 0h2m1 0h1m5 0h1m2 0h2m1 0h1m1 0h1m5 0h1m2 0h1m13 0h1m1 0h1m4 0h1m5 0h1m9 0h1m1 0h1m2 0h2m3 0h1m15 0h1m3 0h2m4 0h1m1 0h1m19 0h3m2 0h1m2 0h1m3 0h2m2 0h2m1 0h2m2 0h1m3 0h2m3 0h4m1 0h1m3 0h2m1 0h1m1 0h2m1 0h1m1 0h2m3 0h2m1 0h1m2 0h1m4 0h1m5 0h2m4 0h1m15 0h3m1 0h1m1 0h1M1 3.5h1m10 0h1m4 0h1m7 0h2m2 0h1m1 0h1m1 0h1m7 0h3m1 0h2m1 0h1m1 0h1m3 0h2m2 0h1m9 0h2m7 0h1m1 0h1m2 0h1m2 0h1m4 0h1m1 0h1m7 0h1m5 0h1m1 0h5m3 0h1m2 0h3m1 0h1m2 0h1m1 0h4m1 0h4m1 0h1m2 0h1m4 0h2m1 0h1m1 0h2m1 0h1m1 0h1m1 0h2m12 0h1m5 0h1m2 0h1m5 0h1m6 0h1m1 0h1m7 0h1m1 0h2m12 0h1m30 0h1m3 0h1m2 0h3m22 0h1m5 0h1m2 0h2m8 0h1m3 0h1m3 0h1m1 0h3m1 0h1m1 0h1m1 0h2m1 0h4m2 0h1m2 0h1m1 0h1m4 0h1m1 0h1m2 0h2m1 0h1m1 0h5m1 0h1m1 0h1m1 0h2m1 0h1m3 0h2m5 0h1m14 0h3m2 0h1m1 0h1m1 0h3m4 0h1m1 0h1m1 0h1m2 0h1m3 0h1M0 4.5h1m5 0h1m7 0h2m2 0h1m1 0h2m1 0h1m4 0h1m10 0h4m1 0h4m1 0h1m2 0h1m1 0h1m2 0h2m10 0h1m16 0h2m2 0h2m8 0h1m2 0h1m1 0h2m1 0h2m1 0h5m1 0h1m1 0h2m1 0h1m2 0h1m3 0h2m1 0h1m1 0h1m2 0h1m2 0h3m1 0h3m2 0h1m1 0h4m1 0h1m1 0h2m5 0h1m2 0h1m8 0h3m2 0h1m1 0h1m5 0h1m12 0h1m1 0h3m1 0h2m4 0h1m3 0h1m4 0h1m3 0h1m7 0h1m1 0h1m19 0h1m6 0h1m4 0h1m11 0h1m3 0h1m10 0h1m12 0h3m3 0h1m4 0h1m3 0h1m4 0h1m2 0h2m4 0h1m1 0h2m1 0h5m1 0h1m1 0h2m1 0h1m1 0h2m1 0h1m1 0h1m1 0h1m1 0h1m3 0h2m3 0h1m1 0h2m3 0h1m1 0h1m7 0h4m10 0h1m7 0h2M9 5.5h1m4 0h1m12 0h2m2 0h1m3 0h1m1 0h1m1 0h1m1 0h3m3 0h2m3 0h2m13 0h1m1 0h1m5 0h1m4 0h1m3 0h2m8 0h1m4 0h1m6 0h2m5 0h5m2 0h2m2 0h2m2 0h1m2 0h2m1 0h1m1 0h1m3 0h1m4 0h1m1 0h4m1 0h3m1 0h2m8 0h1m1 0h2m20 0h1m10 0h1m2 0h1m1 0h2m1 0h1m4 0h1m4 0h1m7 0h1m3 0h1m8 0h1m19 0h1m7 0h1m6 0h2m1 0h1m4 0h1m9 0h2m14 0h1m1 0h3m2 0h2m2 0h3m1 0h3m1 0h1m2 0h1m2 0h1m1 0h4m2 0h2m1 0h1m1 0h1m3 0h3m1 0h2m4 0h2m1 0h3m2 0h1m3 0h2m2 0h1m10 0h2m12 0h2m3 0h2m2 0h1m2 0h2M1 6.5h1m6 0h1m1 0h1m7 0h1m3 0h1m1 0h2m4 0h1m3 0h1m2 0h3m3 0h7m2 0h1m11 0h1m1 0h3m1 0h1m6 0h1m4 0h1m3 0h1m5 0h1m2 0h1m1 0h1m2 0h1m2 0h1m5 0h3m1 0h1m1 0h1m2 0h1m6 0h1m4 0h3m1 0h2m3 0h4m3 0h6m2 0h1m2 0h1m1 0h1m3 0h1m7 0h1m1 0h1m16 0h1m1 0h1m1 0h2m7 0h1m2 0h1m1 0h1m17 0h2m4 0h1m3 0h1m2 0h1m17 0h4m1 0h2m7 0h1m21 0h1m16 0h1m2 0h1m2 0h1m2 0h1m1 0h1m1 0h4m1 0h1m1 0h3m1 0h1m2 0h2m1 0h1m2 0h1m1 0h4m1 0h1m2 0h2m3 0h1m1 0h3m2 0h1m2 0h2m8 0h1m1 0h1m2 0h1m5 0h1m1 0h1m1 0h1m8 0h3m3 0h2M0 7.5h1m12 0h1m9 0h2m3 0h4m3 0h7m1 0h2m1 0h3m1 0h1m1 0h1m3 0h1m8 0h1m8 0h1m4 0h1m2 0h2m6 0h1m2 0h2m2 0h2m4 0h1m2 0h3m1 0h1m3 0h4m3 0h1m1 0h4m3 0h7m1 0h1m3 0h1m1 0h1m1 0h6m1 0h2m3 0h1m1 0h1m1 0h1m5 0h2m4 0h1m1 0h1m8 0h1m6 0h1m12 0h3m10 0h1m2 0h1m2 0h1m6 0h1m8 0h1m9 0h2m3 0h1m3 0h1m1 0h1m19 0h1m12 0h1m4 0h1m4 0h1m6 0h2m1 0h3m1 0h1m1 0h1m3 0h2m2 0h1m6 0h1m1 0h1m1 0h1m1 0h10m1 0h3m2 0h3m1 0h2m9 0h1m10 0h2m7 0h1m6 0h1m8 0h2m3 0h3M15 8.5h1m8 0h1m1 0h1m4 0h1m1 0h3m2 0h4m1 0h1m1 0h1m1 0h1m1 0h2m28 0h1m8 0h2m3 0h1m4 0h1m1 0h1m1 0h2m1 0h4m1 0h3m3 0h2m2 0h1m2 0h1m1 0h2m1 0h1m1 0h1m2 0h2m1 0h2m2 0h1m3 0h2m1 0h3m1 0h1m1 0h7m3 0h1m2 0h1m1 0h1m2 0h1m4 0h4m2 0h1m3 0h1m3 0h1m4 0h1m10 0h2m18 0h1m11 0h1m19 0h1m4 0h1m1 0h1m2 0h1m9 0h1m17 0h1m7 0h1m5 0h1m1 0h1m5 0h1m2 0h2m1 0h2m1 0h1m3 0h1m2 0h4m1 0h2m1 0h3m1 0h1m1 0h2m2 0h2m4 0h5m1 0h1m6 0h1m1 0h1m2 0h1m5 0h1m1 0h1m1 0h2m4 0h1m1 0h1m3 0h1m3 0h1m2 0h1m2 0h1m2 0h1m3 0h1M1 9.5h1m12 0h1m3 0h2m3 0h1m1 0h1m2 0h2m2 0h1m2 0h1m3 0h5m1 0h4m1 0h1m1 0h1m20 0h2m19 0h1m5 0h4m1 0h7m1 0h1m1 0h2m1 0h1m1 0h1m1 0h2m1 0h1m4 0h1m1 0h1m1 0h3m1 0h3m1 0h3m2 0h4m1 0h3m3 0h2m1 0h2m5 0h1m4 0h1m1 0h1m1 0h2m1 0h1m1 0h1m4 0h1m3 0h1m9 0h1m1 0h1m3 0h2m6 0h1m2 0h1m4 0h1m4 0h1m3 0h1m2 0h1m1 0h1m3 0h1m8 0h1m7 0h1m4 0h1m9 0h1m35 0h1m1 0h1m4 0h2m2 0h2m1 0h3m6 0h1m4 0h1m1 0h1m1 0h1m1 0h1m1 0h15m1 0h2m1 0h3m2 0h2m10 0h1m13 0h1m1 0h2m4 0h1m1 0h2m1 0h1m1 0h1M14 10.5h1m2 0h1m2 0h2m5 0h2m1 0h1m2 0h2m2 0h3m1 0h1m1 0h5m7 0h2m7 0h2m2 0h1m1 0h2m5 0h1m2 0h1m2 0h1m5 0h1m6 0h1m1 0h1m3 0h2m1 0h2m1 0h1m2 0h1m1 0h6m1 0h1m2 0h1m1 0h2m1 0h5m2 0h2m2 0h1m1 0h5m3 0h2m1 0h2m2 0h1m2 0h2m3 0h1m1 0h1m5 0h1m6 0h1m1 0h2m4 0h1m5 0h1m2 0h1m3 0h1m5 0h2m1 0h1m7 0h1m11 0h1m7 0h1m2 0h1m10 0h1m2 0h1m2 0h2m1 0h1m14 0h1m4 0h1m12 0h1m4 0h1m12 0h1m1 0h1m2 0h2m3 0h1m1 0h2m1 0h1m2 0h2m8 0h2m2 0h1m2 0h4m2 0h2m3 0h2m2 0h1m1 0h2m3 0h1m2 0h1m4 0h2m5 0h1m1 0h1m4 0h1m3 0h2m5 0h1m1 0h1m5 0h1m1 0h1m1 0h1m1 0h1M0 11.5h2m4 0h1m5 0h2m1 0h2m5 0h1m1 0h1m3 0h3m1 0h1m1 0h1m2 0h1m2 0h1m1 0h2m2 0h4m2 0h1m1 0h1m7 0h1m1 0h1m3 0h2m8 0h2m1 0h2m2 0h1m6 0h1m8 0h11m3 0h7m1 0h3m1 0h1m1 0h9m2 0h1m2 0h11m1 0h1m1 0h1m1 0h1m6 0h1m1 0h1m3 0h1m4 0h1m1 0h1m2 0h1m2 0h1m1 0h1m4 0h1m13 0h2m2 0h1m3 0h1m25 0h1m10 0h1m3 0h1m3 0h2m1 0h2m1 0h1m5 0h1m17 0h1m3 0h1m1 0h2m11 0h1m2 0h1m1 0h2m1 0h1m1 0h1m2 0h4m1 0h2m1 0h3m2 0h3m1 0h1m4 0h1m1 0h1m2 0h1m2 0h4m4 0h2m1 0h1m1 0h1m4 0h3m1 0h2m2 0h1m8 0h3m1 0h4m5 0h1m2 0h2m3 0h1m2 0h1m2 0h1m1 0h1M0 12.5h1m6 0h1m4 0h1m7 0h1m1 0h2m1 0h1m4 0h4m1 0h1m3 0h2m1 0h2m1 0h4m1 0h3m14 0h1m8 0h2m2 0h1m2 0h1m4 0h1m7 0h3m1 0h1m3 0h4m1 0h4m2 0h1m2 0h1m3 0h1m2 0h2m2 0h1m1 0h3m3 0h2m1 0h2m2 0h6m1 0h3m4 0h1m3 0h2m4 0h1m6 0h1m4 0h1m1 0h1m1 0h1m6 0h2m15 0h1m6 0h1m7 0h1m2 0h1m6 0h1m21 0h1m3 0h2m4 0h1m12 0h1m2 0h1m2 0h1m7 0h1m4 0h1m5 0h2m7 0h1m1 0h1m1 0h4m2 0h1m1 0h2m1 0h5m2 0h5m1 0h4m2 0h1m1 0h2m1 0h2m1 0h3m1 0h1m2 0h2m3 0h1m2 0h1m1 0h1m8 0h1m4 0h2m3 0h2m2 0h2m9 0h1m9 0h1M12 13.5h1m1 0h2m3 0h1m9 0h5m5 0h1m1 0h3m3 0h1m1 0h1m4 0h1m2 0h1m13 0h1m11 0h1m2 0h1m2 0h1m4 0h1m3 0h1m2 0h1m3 0h2m1 0h7m1 0h1m1 0h6m1 0h2m4 0h2m1 0h4m1 0h3m2 0h1m1 0h7m2 0h1m2 0h2m1 0h5m5 0h1m10 0h3m6 0h1m1 0h1m5 0h1m6 0h2m10 0h1m2 0h1m26 0h1m7 0h1m2 0h3m1 0h1m3 0h1m10 0h1m3 0h1m11 0h1m16 0h6m1 0h2m2 0h3m3 0h4m2 0h1m1 0h3m1 0h3m1 0h1m2 0h1m1 0h1m1 0h8m1 0h4m1 0h1m10 0h1m1 0h2m2 0h1m3 0h1m1 0h1m4 0h2m1 0h1m1 0h1m1 0h1m1 0h1m1 0h1m1 0h1m1 0h3m4 0h1M1 14.5h1m9 0h1m3 0h1m3 0h1m1 0h1m4 0h1m3 0h6m2 0h1m2 0h2m1 0h3m1 0h2m8 0h1m4 0h1m1 0h2m3 0h1m6 0h1m1 0h1m8 0h1m3 0h1m6 0h1m2 0h2m1 0h3m2 0h1m2 0h2m2 0h4m3 0h1m1 0h1m1 0h4m2 0h10m3 0h5m2 0h3m1 0h1m7 0h2m6 0h1m2 0h1m8 0h1m20 0h1m2 0h1m4 0h1m4 0h1m6 0h1m12 0h2m3 0h1m35 0h1m1 0h1m23 0h2m1 0h3m1 0h1m1 0h2m2 0h2m2 0h1m2 0h1m1 0h1m1 0h1m2 0h2m2 0h2m1 0h2m1 0h1m3 0h1m1 0h5m2 0h1m2 0h2m2 0h1m2 0h2m3 0h2m2 0h1m12 0h1m3 0h1m5 0h1m1 0h3m2 0h1m1 0h1m4 0h1m1 0h1M0 15.5h1m14 0h1m9 0h3m1 0h6m1 0h1m2 0h2m1 0h2m1 0h4m1 0h1m5 0h1m8 0h1m3 0h1m2 0h1m1 0h1m6 0h1m5 0h1m8 0h1m1 0h1m2 0h1m1 0h6m1 0h1m2 0h5m2 0h2m1 0h4m1 0h3m1 0h1m3 0h2m1 0h3m2 0h1m1 0h1m3 0h5m2 0h3m5 0h2m2 0h1m5 0h2m22 0h1m1 0h1m1 0h1m2 0h2m2 0h1m4 0h1m9 0h1m9 0h1m1 0h1m2 0h1m7 0h1m3 0h1m5 0h2m19 0h1m25 0h1m3 0h1m2 0h1m1 0h3m2 0h1m4 0h2m2 0h2m1 0h2m1 0h2m3 0h1m1 0h1m1 0h2m1 0h1m1 0h1m1 0h11m1 0h1m1 0h1m5 0h1m1 0h1m6 0h1m2 0h1m7 0h1m3 0h1m1 0h1m1 0h2m7 0h2m2 0h2M0 16.5h1m1 0h1m10 0h1m3 0h1m7 0h4m2 0h1m6 0h1m4 0h1m1 0h1m1 0h4m5 0h2m12 0h1m3 0h1m3 0h1m4 0h1m5 0h1m3 0h1m4 0h1m2 0h1m1 0h3m1 0h2m1 0h9m1 0h3m2 0h6m1 0h2m1 0h1m4 0h3m1 0h2m2 0h5m1 0h1m2 0h2m1 0h1m2 0h4m7 0h1m1 0h2m8 0h1m2 0h1m9 0h1m1 0h1m4 0h3m11 0h4m19 0h1m4 0h1m5 0h2m3 0h1m3 0h1m7 0h1m6 0h1m10 0h1m1 0h1m9 0h1m7 0h1m2 0h3m2 0h1m2 0h1m6 0h2m2 0h1m2 0h1m2 0h1m3 0h1m1 0h4m2 0h9m1 0h3m2 0h2m7 0h1m2 0h1m2 0h1m18 0h2m3 0h3m2 0h1m1 0h3m1 0h1M0 17.5h1m11 0h1m3 0h1m4 0h1m2 0h1m2 0h1m7 0h1m1 0h5m1 0h1m1 0h1m1 0h1m1 0h1m2 0h1m13 0h1m6 0h1m5 0h1m17 0h1m1 0h1m3 0h1m1 0h7m2 0h2m1 0h1m1 0h3m2 0h2m1 0h3m2 0h3m1 0h9m1 0h4m1 0h1m1 0h2m2 0h2m12 0h1m3 0h1m1 0h1m3 0h1m5 0h1m17 0h3m1 0h1m4 0h2m8 0h1m26 0h1m2 0h1m3 0h3m7 0h1m10 0h2m29 0h2m1 0h1m2 0h3m1 0h3m2 0h3m1 0h1m1 0h2m1 0h1m1 0h2m1 0h1m1 0h2m2 0h2m1 0h5m1 0h1m2 0h5m2 0h1m1 0h1m1 0h1m1 0h1m2 0h1m3 0h1m1 0h1m2 0h3m1 0h2m5 0h1m2 0h1m2 0h1m2 0h1m1 0h1m5 0h2m1 0h3M18 18.5h1m3 0h2m3 0h1m1 0h1m3 0h1m1 0h1m3 0h2m1 0h2m1 0h1m1 0h5m2 0h1m11 0h1m1 0h1m3 0h1m1 0h1m6 0h1m1 0h2m14 0h1m2 0h2m1 0h5m3 0h2m1 0h1m1 0h1m1 0h1m2 0h1m1 0h2m1 0h2m3 0h1m1 0h2m1 0h5m2 0h3m1 0h3m1 0h1m2 0h1m1 0h2m8 0h2m1 0h1m2 0h2m1 0h3m4 0h1m1 0h2m6 0h1m7 0h1m4 0h4m1 0h1m2 0h1m21 0h3m2 0h2m5 0h1m1 0h1m3 0h1m3 0h2m1 0h1m2 0h1m14 0h1m4 0h1m10 0h1m8 0h1m4 0h1m3 0h1m3 0h2m3 0h5m2 0h1m3 0h1m3 0h2m1 0h5m1 0h2m1 0h2m1 0h3m3 0h4m2 0h1m3 0h1m2 0h1m4 0h1m19 0h2m5 0h3m1 0h8M0 19.5h1m1 0h1m2 0h1m11 0h1m3 0h1m6 0h1m2 0h3m5 0h2m1 0h6m2 0h1m3 0h1m1 0h1m2 0h1m7 0h1m1 0h1m11 0h2m4 0h2m5 0h1m1 0h1m1 0h1m4 0h1m1 0h5m1 0h7m1 0h2m1 0h1m1 0h4m1 0h3m1 0h1m1 0h10m1 0h6m1 0h1m2 0h4m17 0h3m2 0h2m3 0h1m9 0h1m7 0h1m1 0h1m1 0h1m29 0h2m19 0h3m6 0h2m3 0h2m9 0h1m6 0h1m4 0h1m1 0h1m10 0h1m1 0h1m1 0h1m2 0h6m2 0h1m4 0h2m2 0h3m1 0h5m1 0h1m2 0h5m1 0h1m1 0h1m1 0h2m1 0h3m2 0h2m1 0h1m3 0h1m10 0h2m9 0h1m3 0h1m7 0h1m1 0h2m4 0h1M6 20.5h1m17 0h2m2 0h1m2 0h1m7 0h6m1 0h1m2 0h1m2 0h2m2 0h1m12 0h1m4 0h1m9 0h1m1 0h2m2 0h1m8 0h2m2 0h1m1 0h4m1 0h1m1 0h5m2 0h1m1 0h1m1 0h1m1 0h1m1 0h3m2 0h3m1 0h3m1 0h7m1 0h6m1 0h3m7 0h1m2 0h2m2 0h1m2 0h1m6 0h1m4 0h3m5 0h1m1 0h1m7 0h1m2 0h3m2 0h1m10 0h1m5 0h1m3 0h1m15 0h1m3 0h2m3 0h1m18 0h1m10 0h1m6 0h1m6 0h1m3 0h1m4 0h3m1 0h3m1 0h3m1 0h2m2 0h1m1 0h1m3 0h1m1 0h2m1 0h3m3 0h7m1 0h10m2 0h2m1 0h3m5 0h2m6 0h2m3 0h2m7 0h2m3 0h1m1 0h1m8 0h2M8 21.5h1m5 0h2m5 0h2m1 0h1m2 0h1m3 0h3m2 0h1m1 0h3m1 0h2m1 0h6m5 0h1m10 0h2m1 0h1m6 0h1m21 0h2m2 0h1m1 0h7m2 0h3m1 0h1m4 0h2m1 0h2m1 0h2m1 0h2m4 0h2m1 0h6m1 0h7m1 0h1m1 0h1m5 0h1m6 0h2m1 0h1m2 0h1m2 0h1m1 0h1m15 0h1m2 0h1m1 0h1m2 0h3m5 0h1m4 0h1m19 0h1m4 0h1m6 0h2m1 0h1m1 0h1m1 0h4m2 0h1m13 0h1m2 0h1m10 0h2m1 0h1m2 0h1m5 0h1m4 0h1m1 0h2m1 0h1m1 0h1m1 0h5m1 0h2m2 0h2m2 0h6m1 0h3m1 0h9m2 0h3m3 0h3m2 0h1m1 0h1m5 0h1m1 0h1m1 0h1m4 0h1m3 0h1m5 0h3m2 0h1m1 0h1m7 0h1m2 0h1m3 0h2M0 22.5h1m4 0h1m9 0h1m2 0h1m2 0h3m3 0h1m2 0h2m1 0h1m2 0h4m1 0h1m1 0h2m1 0h2m2 0h1m1 0h1m11 0h1m10 0h2m5 0h1m5 0h1m1 0h1m1 0h1m1 0h1m5 0h6m1 0h2m2 0h5m1 0h2m1 0h5m2 0h2m2 0h1m1 0h1m1 0h6m1 0h1m1 0h11m2 0h4m6 0h1m2 0h3m4 0h1m8 0h1m7 0h1m1 0h1m4 0h2m2 0h3m3 0h1m3 0h2m2 0h1m2 0h1m2 0h1m4 0h1m7 0h2m10 0h2m3 0h1m2 0h4m7 0h2m10 0h1m3 0h1m1 0h1m3 0h2m13 0h1m3 0h1m1 0h4m1 0h1m1 0h4m2 0h1m1 0h2m2 0h6m1 0h1m1 0h8m1 0h2m1 0h1m1 0h1m1 0h4m1 0h2m6 0h1m2 0h1m2 0h1m6 0h1m2 0h1m2 0h1m1 0h1m1 0h3m3 0h1m6 0h1m1 0h1m3 0h1m1 0h1m1 0h1M0 23.5h1m8 0h2m5 0h1m4 0h1m6 0h4m1 0h1m1 0h5m1 0h1m1 0h1m1 0h6m3 0h2m3 0h1m8 0h1m2 0h3m1 0h1m4 0h2m6 0h3m3 0h1m10 0h3m1 0h2m1 0h1m1 0h1m1 0h1m1 0h4m3 0h1m1 0h2m1 0h6m2 0h2m1 0h8m1 0h3m4 0h2m4 0h2m6 0h1m2 0h1m7 0h2m2 0h1m2 0h1m1 0h1m1 0h1m12 0h3m5 0h2m3 0h1m2 0h1m4 0h1m9 0h2m4 0h1m8 0h1m7 0h3m11 0h1m2 0h1m3 0h1m5 0h1m19 0h1m3 0h3m2 0h2m1 0h1m2 0h1m1 0h2m3 0h1m1 0h6m1 0h1m1 0h3m1 0h4m1 0h3m1 0h1m1 0h1m1 0h1m2 0h3m2 0h1m7 0h2m10 0h1m3 0h2m4 0h2m1 0h1m2 0h3m3 0h1m5 0h3M12 24.5h1m3 0h1m2 0h1m8 0h4m1 0h1m1 0h1m2 0h1m1 0h1m1 0h2m1 0h1m1 0h4m1 0h2m3 0h1m1 0h1m2 0h1m1 0h1m4 0h1m6 0h2m9 0h1m8 0h1m3 0h1m2 0h1m1 0h2m1 0h1m2 0h7m2 0h5m2 0h4m1 0h3m1 0h2m1 0h4m1 0h10m1 0h1m1 0h2m4 0h2m1 0h2m1 0h1m4 0h1m2 0h1m1 0h1m1 0h2m2 0h1m3 0h2m4 0h1m1 0h1m2 0h2m4 0h2m16 0h1m2 0h1m4 0h1m4 0h1m10 0h1m9 0h3m4 0h2m10 0h1m5 0h1m6 0h1m9 0h1m5 0h3m1 0h5m2 0h2m1 0h1m4 0h1m1 0h1m2 0h1m1 0h1m2 0h5m1 0h1m2 0h11m2 0h1m3 0h1m1 0h2m1 0h2m1 0h3m4 0h1m3 0h1m1 0h2m2 0h1m4 0h1m2 0h1m1 0h1m1 0h1m3 0h1m5 0h1m1 0h2m1 0h2M1 25.5h1m10 0h1m4 0h1m2 0h1m2 0h1m4 0h2m1 0h2m2 0h1m1 0h1m1 0h2m1 0h2m4 0h1m1 0h1m1 0h1m1 0h1m2 0h1m2 0h1m8 0h1m2 0h1m1 0h1m5 0h2m7 0h1m2 0h1m4 0h2m3 0h2m1 0h3m2 0h4m1 0h3m2 0h1m1 0h1m1 0h5m1 0h1m2 0h2m1 0h4m1 0h6m1 0h1m1 0h4m2 0h4m3 0h2m3 0h1m2 0h1m6 0h2m9 0h1m1 0h1m1 0h1m5 0h1m3 0h3m1 0h1m2 0h1m2 0h1m12 0h1m13 0h1m17 0h5m1 0h1m5 0h1m2 0h1m1 0h2m10 0h1m2 0h1m4 0h1m7 0h1m2 0h1m2 0h1m1 0h1m1 0h3m1 0h4m2 0h4m1 0h1m1 0h1m3 0h4m1 0h2m4 0h3m1 0h2m2 0h10m2 0h1m2 0h4m1 0h4m3 0h1m2 0h2m1 0h1m3 0h1m4 0h1m1 0h1m3 0h1m2 0h1m2 0h1m2 0h1M0 26.5h2m1 0h1m10 0h1m10 0h1m5 0h6m2 0h5m3 0h3m2 0h2m1 0h1m3 0h1m2 0h1m1 0h1m3 0h1m2 0h1m11 0h1m9 0h1m1 0h1m3 0h1m1 0h1m1 0h1m1 0h1m1 0h4m1 0h2m1 0h4m2 0h2m1 0h2m2 0h2m2 0h3m1 0h7m1 0h1m1 0h7m1 0h1m2 0h2m2 0h1m13 0h1m1 0h3m2 0h2m1 0h1m6 0h1m2 0h1m8 0h1m1 0h1m5 0h1m3 0h1m1 0h2m3 0h1m4 0h1m2 0h1m9 0h1m12 0h1m3 0h3m1 0h1m3 0h1m6 0h1m7 0h1m15 0h3m1 0h1m2 0h1m3 0h1m1 0h5m3 0h4m1 0h2m2 0h3m1 0h2m1 0h2m1 0h1m1 0h2m1 0h2m1 0h1m2 0h2m2 0h6m2 0h2m5 0h1m2 0h1m2 0h1m1 0h1m2 0h2m3 0h2m1 0h1m1 0h1m3 0h2m7 0h1m5 0h2m2 0h1m3 0h1M8 27.5h1m6 0h2m1 0h1m4 0h3m2 0h1m1 0h1m4 0h1m3 0h4m2 0h4m1 0h1m1 0h2m1 0h1m18 0h1m1 0h1m10 0h3m2 0h3m2 0h3m1 0h1m1 0h1m2 0h2m2 0h2m2 0h2m1 0h1m1 0h2m1 0h1m2 0h1m2 0h4m1 0h1m1 0h1m2 0h4m1 0h9m2 0h1m1 0h1m1 0h1m5 0h1m3 0h1m7 0h1m1 0h1m2 0h1m4 0h1m2 0h2m3 0h1m6 0h4m1 0h2m2 0h2m10 0h2m2 0h1m25 0h1m2 0h1m3 0h2m1 0h1m7 0h1m9 0h1m4 0h1m5 0h2m2 0h1m5 0h1m9 0h3m1 0h1m1 0h3m1 0h2m2 0h1m2 0h1m4 0h2m2 0h3m3 0h1m2 0h4m1 0h2m1 0h1m3 0h1m1 0h2m2 0h2m2 0h1m3 0h2m3 0h1m2 0h1m4 0h1m2 0h2m1 0h3m2 0h1m1 0h1m3 0h2m1 0h1m4 0h1m3 0h2M0 28.5h2m6 0h1m4 0h1m2 0h1m8 0h1m2 0h2m3 0h2m4 0h6m2 0h2m3 0h1m3 0h1m1 0h2m13 0h1m1 0h1m2 0h1m5 0h1m9 0h1m5 0h3m2 0h2m1 0h2m3 0h2m1 0h1m1 0h2m1 0h3m1 0h2m2 0h2m1 0h4m1 0h1m1 0h2m1 0h1m2 0h1m1 0h1m1 0h2m1 0h3m1 0h2m7 0h1m2 0h2m3 0h1m2 0h3m1 0h1m1 0h1m4 0h2m3 0h1m2 0h1m5 0h2m2 0h1m1 0h1m2 0h1m2 0h1m13 0h1m3 0h1m1 0h1m3 0h1m1 0h1m11 0h1m2 0h1m3 0h3m6 0h1m2 0h2m13 0h1m2 0h1m3 0h1m14 0h1m3 0h1m9 0h6m4 0h4m1 0h3m1 0h3m2 0h6m2 0h1m3 0h1m1 0h1m5 0h1m3 0h1m1 0h2m3 0h1m6 0h1m2 0h2m2 0h1m3 0h1m6 0h1m7 0h2m1 0h1m1 0h1M1 29.5h2m2 0h1m14 0h1m4 0h3m1 0h1m1 0h3m1 0h1m1 0h1m1 0h8m2 0h2m3 0h1m1 0h3m6 0h2m1 0h1m6 0h1m7 0h1m4 0h1m1 0h4m5 0h2m2 0h1m1 0h1m1 0h2m1 0h1m1 0h1m1 0h4m1 0h4m1 0h3m1 0h6m2 0h5m1 0h3m1 0h4m1 0h1m1 0h2m3 0h1m1 0h2m1 0h1m10 0h1m1 0h1m3 0h1m1 0h3m5 0h1m3 0h1m2 0h1m3 0h1m3 0h2m1 0h1m1 0h1m7 0h3m1 0h1m1 0h1m1 0h1m1 0h1m16 0h1m11 0h7m1 0h2m17 0h1m1 0h1m6 0h1m2 0h1m8 0h1m4 0h6m2 0h1m1 0h1m3 0h5m1 0h1m3 0h2m2 0h5m2 0h8m1 0h1m1 0h2m1 0h1m5 0h1m3 0h1m6 0h2m2 0h1m3 0h2m1 0h5m4 0h1m1 0h3m2 0h1m1 0h2m1 0h2m3 0h1M0 30.5h1m1 0h1m11 0h1m4 0h1m2 0h2m1 0h2m1 0h1m1 0h1m1 0h1m1 0h1m1 0h3m1 0h2m2 0h7m1 0h1m1 0h1m2 0h1m10 0h1m4 0h1m5 0h1m1 0h1m1 0h1m1 0h1m2 0h1m10 0h2m2 0h1m2 0h2m1 0h1m1 0h2m1 0h3m1 0h8m1 0h3m4 0h1m1 0h2m1 0h1m2 0h7m1 0h3m4 0h2m6 0h2m1 0h1m3 0h1m3 0h2m1 0h1m5 0h3m3 0h1m2 0h1m2 0h1m6 0h4m17 0h1m15 0h1m3 0h1m2 0h1m5 0h1m3 0h1m6 0h1m3 0h3m2 0h1m6 0h1m19 0h1m6 0h1m2 0h3m1 0h4m1 0h3m1 0h5m2 0h1m1 0h2m1 0h3m1 0h1m1 0h3m1 0h15m4 0h2m5 0h2m1 0h1m1 0h3m3 0h2m3 0h1m2 0h3m6 0h1m7 0h2m1 0h1m3 0h1M7 31.5h1m6 0h1m5 0h1m1 0h2m11 0h2m3 0h1m1 0h2m2 0h5m11 0h2m4 0h1m14 0h1m5 0h1m3 0h1m1 0h1m1 0h1m1 0h1m5 0h5m1 0h2m1 0h5m1 0h1m3 0h3m1 0h3m1 0h5m3 0h5m1 0h2m1 0h3m2 0h1m2 0h1m9 0h2m2 0h2m4 0h1m4 0h1m3 0h1m2 0h1m4 0h1m9 0h2m1 0h2m13 0h2m19 0h1m3 0h1m2 0h1m3 0h2m1 0h6m4 0h1m3 0h1m8 0h1m2 0h1m8 0h1m5 0h1m7 0h1m4 0h2m1 0h1m1 0h4m1 0h4m1 0h3m1 0h2m2 0h4m5 0h2m1 0h1m1 0h1m1 0h2m3 0h1m1 0h2m1 0h1m1 0h1m2 0h1m1 0h2m4 0h1m1 0h5m1 0h2m3 0h1m1 0h1m2 0h1m1 0h1m1 0h1m3 0h1m5 0h1m1 0h1m1 0h1m2 0h1m1 0h2M15 32.5h1m5 0h2m2 0h1m3 0h1m1 0h1m1 0h2m1 0h2m1 0h1m1 0h1m1 0h1m1 0h1m1 0h4m1 0h1m2 0h2m1 0h1m8 0h1m1 0h1m5 0h1m2 0h1m2 0h1m7 0h2m1 0h1m5 0h2m2 0h2m1 0h5m2 0h21m2 0h4m1 0h8m1 0h3m1 0h2m2 0h3m4 0h2m3 0h1m2 0h1m2 0h1m1 0h1m1 0h3m1 0h1m1 0h1m3 0h1m1 0h1m7 0h1m1 0h2m3 0h1m1 0h1m9 0h1m7 0h1m1 0h2m2 0h2m6 0h1m1 0h1m3 0h1m3 0h1m3 0h2m2 0h3m4 0h1m3 0h1m3 0h1m7 0h2m2 0h1m4 0h1m3 0h1m17 0h1m1 0h4m2 0h1m1 0h1m1 0h2m1 0h1m2 0h1m1 0h5m2 0h13m1 0h3m1 0h1m1 0h2m1 0h1m2 0h2m2 0h1m1 0h2m1 0h2m1 0h3m4 0h1m1 0h1m2 0h4m4 0h1m1 0h2m1 0h1m2 0h1m3 0h2m1 0h1m1 0h2M15 33.5h1m9 0h1m5 0h1m4 0h1m1 0h2m1 0h2m1 0h4m1 0h2m1 0h3m3 0h1m4 0h3m3 0h1m8 0h1m1 0h1m5 0h4m2 0h1m6 0h1m3 0h2m2 0h8m5 0h1m1 0h4m2 0h5m1 0h3m1 0h3m1 0h6m2 0h1m1 0h2m2 0h1m7 0h1m2 0h1m6 0h2m4 0h2m8 0h1m3 0h2m10 0h2m2 0h1m9 0h1m1 0h1m2 0h1m1 0h1m11 0h1m5 0h3m4 0h1m3 0h1m1 0h3m3 0h1m7 0h1m15 0h1m10 0h1m11 0h2m1 0h1m1 0h2m2 0h5m2 0h5m1 0h6m3 0h2m1 0h1m1 0h5m1 0h1m2 0h2m2 0h1m1 0h1m1 0h2m4 0h1m2 0h2m7 0h2m2 0h1m1 0h2m1 0h2m3 0h4m1 0h3m1 0h1m1 0h1m1 0h1m1 0h1m1 0h3M13 34.5h1m1 0h1m2 0h2m4 0h2m2 0h2m1 0h1m3 0h2m1 0h5m1 0h1m1 0h1m2 0h2m1 0h1m4 0h2m2 0h1m13 0h2m1 0h1m6 0h1m2 0h1m8 0h3m3 0h3m2 0h5m1 0h5m5 0h4m1 0h1m2 0h5m1 0h2m1 0h3m1 0h3m2 0h1m1 0h1m1 0h1m2 0h3m3 0h1m1 0h2m1 0h1m5 0h1m3 0h1m1 0h1m4 0h1m2 0h2m1 0h1m12 0h5m20 0h1m3 0h1m4 0h1m2 0h1m1 0h1m1 0h1m3 0h1m5 0h1m3 0h2m1 0h1m2 0h1m24 0h1m6 0h1m9 0h1m4 0h6m1 0h1m2 0h3m1 0h1m1 0h1m1 0h4m1 0h1m1 0h5m4 0h1m1 0h4m1 0h1m1 0h3m1 0h1m1 0h1m3 0h2m1 0h1m1 0h1m1 0h1m1 0h1m2 0h2m1 0h1m1 0h1m4 0h1m4 0h1m2 0h1m2 0h1m1 0h1m1 0h2m4 0h2m1 0h3m1 0h1M0 35.5h1m13 0h1m3 0h2m3 0h1m3 0h1m4 0h1m2 0h1m4 0h1m1 0h1m1 0h3m1 0h3m1 0h1m2 0h1m8 0h1m11 0h1m1 0h1m12 0h1m2 0h2m2 0h2m2 0h2m1 0h1m2 0h1m1 0h4m1 0h4m1 0h13m1 0h2m2 0h9m1 0h2m3 0h2m1 0h1m1 0h1m1 0h2m2 0h4m4 0h3m1 0h4m10 0h3m1 0h1m6 0h1m5 0h3m1 0h1m4 0h1m2 0h1m6 0h1m3 0h1m1 0h1m5 0h1m16 0h1m2 0h2m1 0h2m1 0h1m5 0h1m5 0h2m5 0h1m7 0h1m4 0h1m12 0h1m1 0h2m1 0h2m1 0h1m1 0h2m2 0h9m1 0h6m1 0h6m1 0h6m1 0h2m2 0h2m1 0h1m2 0h1m1 0h2m3 0h1m2 0h6m2 0h1m1 0h4m4 0h2m1 0h2m2 0h4m4 0h1m1 0h1m1 0h1m3 0h1M3 36.5h1m9 0h2m1 0h1m7 0h2m1 0h1m1 0h2m3 0h2m1 0h2m1 0h4m1 0h1m2 0h2m2 0h1m1 0h2m11 0h4m1 0h1m22 0h1m9 0h2m2 0h5m2 0h3m1 0h3m1 0h1m1 0h1m2 0h5m4 0h4m1 0h4m1 0h1m1 0h1m1 0h3m4 0h1m1 0h1m4 0h1m1 0h1m8 0h1m2 0h2m1 0h4m3 0h1m4 0h2m1 0h1m3 0h1m3 0h2m4 0h1m2 0h2m6 0h1m8 0h1m13 0h1m4 0h1m8 0h1m1 0h1m1 0h2m2 0h1m2 0h1m1 0h1m2 0h1m4 0h1m2 0h1m5 0h1m6 0h1m6 0h1m1 0h1m3 0h5m1 0h3m1 0h1m2 0h2m4 0h1m2 0h4m1 0h5m1 0h4m1 0h3m1 0h1m1 0h1m1 0h3m1 0h3m2 0h2m1 0h2m3 0h4m1 0h1m4 0h4m1 0h2m5 0h1m1 0h1m6 0h1m5 0h1m1 0h2m1 0h1M16 37.5h1m2 0h2m2 0h1m2 0h3m1 0h2m1 0h4m1 0h5m1 0h1m3 0h3m1 0h1m1 0h1m1 0h1m11 0h1m2 0h1m6 0h1m1 0h1m7 0h3m5 0h1m1 0h2m2 0h2m2 0h7m3 0h1m1 0h1m2 0h13m1 0h1m1 0h4m2 0h6m1 0h3m1 0h1m3 0h2m5 0h1m2 0h2m8 0h1m8 0h1m2 0h1m3 0h3m3 0h1m2 0h1m2 0h3m9 0h4m1 0h1m1 0h1m3 0h2m4 0h2m1 0h1m1 0h1m2 0h1m1 0h1m12 0h3m7 0h3m12 0h1m6 0h1m1 0h1m14 0h1m3 0h2m1 0h1m1 0h1m1 0h2m1 0h5m1 0h1m1 0h6m1 0h1m1 0h4m1 0h1m1 0h7m4 0h2m1 0h1m1 0h1m2 0h4m1 0h1m2 0h1m1 0h1m1 0h1m2 0h1m3 0h1m5 0h1m1 0h1m6 0h2m2 0h1m1 0h1m1 0h2m2 0h1m4 0h1M0 38.5h1m5 0h1m8 0h1m3 0h1m12 0h1m2 0h1m6 0h1m1 0h6m2 0h1m2 0h1m12 0h2m5 0h1m10 0h1m9 0h1m1 0h1m4 0h1m1 0h4m2 0h7m2 0h1m1 0h4m1 0h1m1 0h2m1 0h1m1 0h5m1 0h1m1 0h6m1 0h1m1 0h4m1 0h3m5 0h1m1 0h1m1 0h2m3 0h1m2 0h1m4 0h1m2 0h1m1 0h1m1 0h2m2 0h1m1 0h1m14 0h1m3 0h1m9 0h1m14 0h1m1 0h1m3 0h3m5 0h2m5 0h2m2 0h2m8 0h2m5 0h2m2 0h1m7 0h2m8 0h2m6 0h1m1 0h3m1 0h2m2 0h7m3 0h3m1 0h1m2 0h3m1 0h2m1 0h7m3 0h1m1 0h2m8 0h1m3 0h2m1 0h1m1 0h3m3 0h1m1 0h3m2 0h2m1 0h1m1 0h1m2 0h2m1 0h1m3 0h1m2 0h1m2 0h3m1 0h1m1 0h1M2 39.5h1m11 0h2m3 0h2m1 0h3m3 0h1m1 0h2m1 0h2m1 0h1m5 0h1m1 0h3m1 0h3m1 0h2m2 0h1m11 0h1m16 0h1m1 0h2m3 0h1m5 0h1m2 0h1m1 0h1m2 0h2m1 0h1m1 0h3m1 0h2m2 0h2m1 0h1m1 0h3m2 0h1m3 0h12m1 0h2m1 0h5m2 0h4m3 0h1m3 0h1m1 0h1m2 0h2m4 0h3m2 0h2m1 0h2m5 0h1m2 0h1m5 0h1m1 0h1m1 0h3m6 0h2m5 0h1m1 0h2m6 0h1m21 0h4m1 0h3m2 0h1m6 0h1m7 0h1m4 0h1m7 0h1m2 0h1m2 0h2m1 0h1m1 0h1m3 0h1m2 0h2m1 0h3m1 0h3m1 0h1m1 0h2m1 0h1m1 0h15m1 0h5m1 0h5m2 0h1m1 0h2m3 0h1m4 0h3m1 0h1m1 0h1m1 0h1m3 0h2m1 0h1m5 0h1m1 0h2m1 0h1m1 0h1m4 0h1m2 0h1m1 0h2m1 0h4m1 0h1M3 40.5h1m1 0h1m11 0h1m2 0h1m1 0h1m2 0h2m1 0h7m1 0h3m1 0h1m2 0h7m2 0h2m1 0h1m2 0h1m4 0h1m3 0h1m2 0h1m3 0h1m6 0h1m6 0h1m4 0h2m1 0h2m1 0h1m1 0h8m1 0h1m1 0h2m2 0h6m1 0h1m1 0h2m1 0h1m1 0h1m1 0h4m1 0h1m2 0h6m3 0h1m3 0h2m4 0h1m2 0h5m5 0h6m4 0h1m6 0h1m3 0h2m3 0h1m2 0h1m4 0h5m38 0h1m5 0h1m1 0h6m2 0h1m2 0h1m14 0h1m9 0h1m1 0h1m4 0h1m2 0h1m5 0h3m1 0h2m1 0h2m1 0h1m1 0h2m1 0h1m2 0h8m1 0h6m1 0h5m1 0h4m1 0h2m1 0h6m1 0h1m1 0h1m5 0h1m2 0h3m4 0h3m5 0h2m5 0h4m2 0h1m2 0h1m3 0h2m1 0h1m1 0h1M1 41.5h1m1 0h1m18 0h2m1 0h1m2 0h3m5 0h3m1 0h1m2 0h6m2 0h2m18 0h1m1 0h3m4 0h2m2 0h2m7 0h1m8 0h2m3 0h4m2 0h1m4 0h4m1 0h6m1 0h1m1 0h13m1 0h6m4 0h4m2 0h1m2 0h1m5 0h1m1 0h1m2 0h1m1 0h1m8 0h1m1 0h1m1 0h1m1 0h1m2 0h1m7 0h2m1 0h1m1 0h1m1 0h1m4 0h1m3 0h1m2 0h1m3 0h1m1 0h1m5 0h1m2 0h1m3 0h2m3 0h1m1 0h1m2 0h1m1 0h1m3 0h3m1 0h2m1 0h1m12 0h1m12 0h2m1 0h1m1 0h1m1 0h1m3 0h1m3 0h1m4 0h5m1 0h1m1 0h1m2 0h2m2 0h2m1 0h1m1 0h1m2 0h8m2 0h5m1 0h1m1 0h2m1 0h4m1 0h2m2 0h2m1 0h1m1 0h2m3 0h1m1 0h2m1 0h1m2 0h1m1 0h1m2 0h1m2 0h1m2 0h1m4 0h1m1 0h4m1 0h1m1 0h1m1 0h1m1 0h3m1 0h1M0 42.5h1m16 0h2m1 0h1m2 0h1m3 0h2m1 0h2m2 0h1m1 0h1m1 0h3m1 0h4m1 0h2m3 0h1m2 0h2m2 0h1m3 0h1m3 0h1m2 0h1m3 0h1m4 0h2m3 0h1m8 0h1m3 0h1m4 0h1m2 0h5m2 0h6m1 0h5m1 0h1m1 0h2m1 0h5m1 0h3m1 0h4m1 0h1m1 0h1m1 0h1m1 0h1m1 0h1m2 0h2m5 0h2m1 0h2m2 0h1m1 0h2m3 0h2m4 0h1m12 0h1m5 0h1m1 0h1m1 0h2m7 0h1m2 0h2m1 0h1m1 0h1m3 0h1m4 0h2m2 0h3m9 0h2m5 0h1m2 0h2m2 0h1m2 0h1m3 0h1m4 0h1m8 0h1m4 0h1m1 0h1m12 0h1m6 0h3m1 0h1m3 0h1m4 0h3m1 0h8m1 0h8m1 0h2m1 0h4m2 0h1m1 0h1m1 0h2m5 0h1m2 0h3m2 0h2m7 0h1m2 0h1m3 0h3m2 0h1m4 0h6m2 0h2m1 0h1m1 0h2m1 0h1M0 43.5h1m2 0h1m15 0h1m2 0h1m1 0h1m1 0h1m4 0h1m1 0h1m1 0h1m1 0h3m1 0h7m1 0h2m1 0h1m1 0h1m12 0h2m1 0h1m8 0h1m2 0h3m2 0h1m7 0h1m5 0h1m6 0h1m1 0h4m1 0h5m1 0h1m1 0h1m2 0h2m1 0h5m1 0h4m1 0h1m1 0h6m1 0h1m2 0h1m4 0h2m3 0h4m5 0h1m1 0h2m2 0h2m4 0h2m1 0h2m3 0h2m11 0h1m1 0h1m1 0h2m3 0h1m3 0h1m6 0h1m1 0h1m5 0h3m1 0h1m4 0h1m1 0h1m1 0h1m8 0h1m2 0h6m3 0h1m1 0h1m3 0h2m2 0h1m14 0h1m3 0h1m4 0h1m7 0h1m2 0h5m4 0h2m1 0h2m1 0h8m1 0h4m2 0h1m1 0h3m1 0h6m2 0h1m2 0h3m3 0h2m3 0h1m1 0h3m2 0h1m1 0h2m1 0h2m4 0h1m2 0h1m1 0h1m2 0h1m1 0h3m4 0h1m3 0h1m1 0h2m1 0h1m1 0h1M2 44.5h1m11 0h1m4 0h1m1 0h1m3 0h2m4 0h1m1 0h2m3 0h1m2 0h1m1 0h8m1 0h2m3 0h1m2 0h1m4 0h1m8 0h2m2 0h3m6 0h1m1 0h1m2 0h1m5 0h3m2 0h1m1 0h2m1 0h2m1 0h1m1 0h4m1 0h4m1 0h6m3 0h1m1 0h1m1 0h5m1 0h4m1 0h1m3 0h1m4 0h3m5 0h4m1 0h1m2 0h1m2 0h1m1 0h1m1 0h4m3 0h4m1 0h1m3 0h3m1 0h2m1 0h7m4 0h1m5 0h1m1 0h1m5 0h1m1 0h1m6 0h1m4 0h1m1 0h1m4 0h2m4 0h2m2 0h3m7 0h1m14 0h1m2 0h1m4 0h1m1 0h1m13 0h1m1 0h1m2 0h3m1 0h3m1 0h2m1 0h3m1 0h4m2 0h2m2 0h3m1 0h10m3 0h1m1 0h4m5 0h1m1 0h2m1 0h2m1 0h2m1 0h2m2 0h4m6 0h1m2 0h5m1 0h1m2 0h1m1 0h1m2 0h1m2 0h1M4 45.5h1m10 0h1m4 0h1m1 0h1m1 0h1m3 0h2m1 0h1m3 0h1m1 0h1m1 0h3m4 0h2m1 0h2m3 0h2m2 0h1m16 0h1m3 0h1m18 0h1m6 0h9m1 0h2m4 0h9m1 0h3m2 0h3m1 0h1m1 0h3m2 0h1m1 0h2m3 0h1m1 0h1m1 0h2m3 0h1m2 0h1m2 0h1m1 0h1m1 0h1m6 0h1m1 0h1m4 0h2m2 0h2m1 0h2m4 0h1m1 0h1m1 0h1m1 0h1m2 0h1m6 0h1m4 0h1m7 0h1m2 0h2m2 0h3m1 0h1m3 0h1m9 0h2m2 0h2m2 0h1m1 0h1m14 0h1m4 0h1m8 0h1m2 0h1m13 0h4m2 0h2m3 0h3m1 0h6m3 0h1m1 0h2m1 0h1m1 0h1m3 0h2m1 0h6m1 0h2m4 0h1m3 0h5m3 0h1m1 0h4m1 0h1m2 0h2m5 0h2m1 0h1m2 0h2m3 0h1m3 0h2m1 0h1m1 0h1M0 46.5h1m2 0h1m10 0h1m5 0h3m2 0h1m3 0h1m1 0h1m1 0h2m5 0h2m1 0h4m1 0h1m1 0h1m1 0h2m4 0h1m2 0h2m1 0h2m6 0h2m6 0h1m3 0h1m3 0h1m3 0h2m4 0h1m2 0h2m1 0h2m1 0h1m1 0h8m1 0h5m1 0h4m1 0h1m2 0h2m2 0h3m1 0h4m3 0h1m10 0h1m2 0h3m2 0h2m1 0h1m1 0h1m2 0h1m2 0h1m2 0h1m2 0h1m1 0h1m1 0h5m2 0h2m3 0h3m4 0h3m11 0h1m8 0h1m2 0h1m3 0h1m3 0h1m2 0h4m4 0h1m7 0h2m2 0h1m2 0h3m1 0h2m11 0h3m10 0h2m12 0h2m1 0h2m1 0h3m1 0h2m1 0h4m1 0h4m1 0h5m1 0h9m2 0h1m2 0h1m1 0h1m1 0h3m2 0h1m1 0h4m1 0h3m1 0h2m1 0h3m1 0h1m2 0h2m1 0h3m1 0h3m4 0h1m7 0h2m3 0h1m1 0h1m1 0h2M9 47.5h1m4 0h1m1 0h1m1 0h2m4 0h2m1 0h3m1 0h3m1 0h3m1 0h1m1 0h1m1 0h1m4 0h2m2 0h1m1 0h1m4 0h1m31 0h3m1 0h1m2 0h1m3 0h2m1 0h6m1 0h5m1 0h4m2 0h4m1 0h2m1 0h2m1 0h5m2 0h2m1 0h4m1 0h1m3 0h1m4 0h1m1 0h1m1 0h3m1 0h1m1 0h3m1 0h1m1 0h1m3 0h1m1 0h3m3 0h3m4 0h2m6 0h2m1 0h6m3 0h2m6 0h1m9 0h1m3 0h1m1 0h1m1 0h1m13 0h1m3 0h3m3 0h1m1 0h1m4 0h2m11 0h3m2 0h1m6 0h1m3 0h1m7 0h1m3 0h1m1 0h2m2 0h1m2 0h1m2 0h2m2 0h5m1 0h2m2 0h14m1 0h2m3 0h1m6 0h6m1 0h1m1 0h2m1 0h3m1 0h3m4 0h5m5 0h2m1 0h2m1 0h1m4 0h2m1 0h4M0 48.5h1m16 0h1m12 0h3m5 0h1m5 0h1m1 0h3m1 0h1m1 0h1m1 0h1m1 0h1m2 0h2m1 0h1m5 0h1m2 0h1m1 0h2m1 0h2m1 0h1m9 0h1m2 0h1m2 0h1m4 0h2m1 0h1m2 0h20m1 0h2m1 0h2m1 0h2m1 0h4m1 0h3m1 0h1m1 0h1m1 0h1m1 0h1m5 0h3m5 0h2m1 0h1m7 0h2m1 0h1m1 0h1m3 0h1m4 0h1m1 0h1m4 0h2m2 0h1m1 0h1m1 0h1m2 0h2m2 0h1m10 0h1m7 0h1m3 0h2m1 0h1m2 0h1m8 0h1m2 0h2m1 0h4m5 0h1m2 0h1m1 0h1m5 0h1m2 0h1m1 0h1m5 0h2m4 0h1m3 0h1m6 0h3m4 0h2m1 0h1m1 0h3m1 0h1m1 0h1m1 0h10m2 0h4m1 0h1m1 0h1m1 0h1m1 0h6m1 0h2m1 0h1m3 0h1m2 0h2m1 0h1m1 0h2m4 0h1m4 0h4m2 0h3m5 0h3m1 0h2m2 0h1m3 0h1m2 0h1m1 0h1m1 0h1m1 0h1M0 49.5h1m13 0h2m9 0h1m1 0h1m2 0h3m1 0h1m2 0h1m2 0h1m1 0h3m1 0h5m1 0h2m1 0h1m3 0h2m2 0h1m2 0h1m1 0h2m3 0h1m2 0h1m2 0h1m2 0h1m1 0h1m1 0h1m2 0h1m6 0h1m1 0h2m1 0h1m1 0h3m1 0h3m1 0h1m1 0h5m1 0h5m2 0h1m1 0h2m1 0h1m1 0h1m1 0h4m6 0h1m2 0h1m4 0h2m1 0h2m2 0h2m1 0h1m1 0h1m2 0h1m3 0h1m6 0h1m1 0h3m3 0h2m4 0h1m3 0h2m1 0h1m4 0h4m12 0h1m8 0h1m2 0h1m4 0h1m1 0h1m1 0h1m2 0h2m1 0h1m2 0h1m4 0h1m2 0h2m1 0h1m7 0h1m1 0h1m7 0h1m2 0h1m2 0h1m3 0h1m2 0h1m2 0h1m7 0h1m5 0h1m3 0h11m1 0h7m2 0h8m1 0h3m1 0h1m1 0h2m1 0h1m1 0h2m4 0h2m2 0h2m3 0h3m2 0h1m4 0h1m3 0h6m1 0h1m6 0h1m1 0h1m2 0h1m2 0h5m3 0h2M0 50.5h2m2 0h1m10 0h3m4 0h2m1 0h1m1 0h1m2 0h1m1 0h1m2 0h3m1 0h1m1 0h1m1 0h2m1 0h2m1 0h2m1 0h1m1 0h1m1 0h1m1 0h1m4 0h1m4 0h1m2 0h1m3 0h1m1 0h3m9 0h1m2 0h1m1 0h2m2 0h4m1 0h1m2 0h12m1 0h5m1 0h2m1 0h1m2 0h4m4 0h5m6 0h1m6 0h1m1 0h3m3 0h2m3 0h1m1 0h2m1 0h2m1 0h2m2 0h5m2 0h1m5 0h1m1 0h1m2 0h2m2 0h1m1 0h5m3 0h2m2 0h1m1 0h4m3 0h2m12 0h1m4 0h1m3 0h2m2 0h2m2 0h4m9 0h1m6 0h1m1 0h2m2 0h1m7 0h1m3 0h2m11 0h1m1 0h7m1 0h11m1 0h2m1 0h6m1 0h5m1 0h1m1 0h4m1 0h1m4 0h1m5 0h1m1 0h1m1 0h3m3 0h1m3 0h1m6 0h1m4 0h4m4 0h2m2 0h1m6 0h1m1 0h2M1 51.5h1m8 0h1m1 0h1m9 0h2m5 0h3m3 0h1m2 0h1m3 0h1m2 0h9m2 0h1m1 0h1m9 0h1m4 0h1m1 0h1m8 0h1m6 0h1m5 0h1m2 0h1m2 0h1m1 0h6m1 0h6m1 0h12m1 0h3m1 0h1m1 0h9m1 0h1m1 0h3m5 0h2m3 0h2m2 0h1m1 0h1m2 0h1m4 0h2m4 0h2m4 0h3m3 0h1m4 0h1m1 0h1m1 0h1m2 0h2m1 0h1m6 0h3m1 0h1m11 0h1m5 0h1m5 0h1m3 0h1m3 0h1m4 0h2m2 0h1m1 0h1m6 0h1m1 0h3m8 0h2m3 0h1m3 0h1m4 0h2m3 0h1m7 0h7m1 0h1m2 0h5m1 0h2m4 0h2m1 0h4m1 0h4m2 0h2m1 0h2m2 0h2m3 0h1m4 0h1m3 0h1m3 0h1m1 0h1m2 0h1m6 0h4m1 0h3m1 0h1m2 0h1m1 0h1m1 0h1m1 0h2m1 0h6m1 0h1m1 0h1M1 52.5h1m9 0h1m2 0h1m2 0h5m2 0h1m4 0h2m1 0h1m1 0h2m2 0h1m4 0h6m1 0h1m2 0h2m6 0h1m1 0h1m9 0h2m5 0h1m2 0h1m2 0h1m2 0h1m2 0h2m6 0h2m1 0h1m1 0h3m1 0h1m2 0h3m1 0h7m1 0h2m1 0h2m2 0h10m1 0h1m1 0h2m1 0h1m2 0h1m1 0h2m2 0h4m1 0h1m2 0h2m1 0h1m3 0h1m1 0h1m1 0h1m1 0h3m2 0h1m4 0h1m1 0h2m1 0h4m4 0h1m5 0h3m3 0h3m4 0h3m1 0h1m5 0h1m2 0h2m2 0h1m5 0h4m5 0h2m1 0h3m1 0h5m9 0h1m5 0h1m4 0h1m3 0h1m7 0h2m9 0h1m1 0h1m1 0h1m1 0h9m1 0h1m1 0h1m2 0h1m2 0h5m5 0h5m1 0h3m2 0h2m1 0h2m1 0h1m2 0h1m4 0h1m1 0h4m1 0h1m1 0h2m1 0h2m4 0h1m1 0h2m1 0h1m1 0h1m1 0h1m1 0h1m1 0h1m2 0h2m4 0h5m1 0h4M17 53.5h1m2 0h1m1 0h2m5 0h4m3 0h1m1 0h8m1 0h3m3 0h1m6 0h1m4 0h1m5 0h1m3 0h1m3 0h1m6 0h2m10 0h1m4 0h3m2 0h4m1 0h1m1 0h2m1 0h1m1 0h1m1 0h1m1 0h3m3 0h3m1 0h1m1 0h2m1 0h4m1 0h1m1 0h2m1 0h1m2 0h2m2 0h2m1 0h4m1 0h6m3 0h1m1 0h4m4 0h2m2 0h4m3 0h2m7 0h6m5 0h1m6 0h1m1 0h1m5 0h1m3 0h1m2 0h3m2 0h2m8 0h2m1 0h2m3 0h3m6 0h1m1 0h1m10 0h2m27 0h1m2 0h3m2 0h1m1 0h6m3 0h3m1 0h9m1 0h3m1 0h1m3 0h1m7 0h1m2 0h1m2 0h1m1 0h2m1 0h4m5 0h1m7 0h2m6 0h5m2 0h2m2 0h1m1 0h1m1 0h1m1 0h1m1 0h2M13 54.5h1m1 0h1m4 0h2m1 0h1m3 0h1m1 0h2m2 0h3m3 0h2m1 0h1m7 0h1m1 0h1m1 0h1m12 0h1m1 0h1m2 0h1m6 0h2m1 0h1m4 0h2m5 0h1m2 0h3m2 0h1m2 0h1m1 0h3m4 0h6m1 0h1m1 0h9m1 0h1m1 0h1m1 0h3m2 0h7m1 0h1m1 0h1m5 0h2m1 0h4m1 0h1m2 0h1m3 0h2m1 0h1m2 0h2m3 0h1m1 0h2m5 0h2m9 0h3m4 0h1m2 0h2m10 0h2m4 0h1m7 0h2m1 0h2m5 0h1m3 0h1m4 0h1m2 0h1m1 0h1m3 0h1m4 0h1m12 0h1m10 0h2m6 0h1m1 0h1m1 0h1m1 0h2m1 0h7m1 0h4m1 0h3m3 0h2m1 0h8m4 0h4m2 0h1m2 0h2m5 0h1m1 0h1m3 0h1m1 0h1m1 0h2m3 0h3m3 0h1m1 0h3m1 0h1m2 0h2m1 0h2m2 0h1m1 0h3m1 0h2m3 0h1M0 55.5h1m8 0h1m1 0h1m2 0h2m5 0h1m1 0h2m3 0h1m2 0h1m3 0h1m2 0h2m3 0h5m4 0h1m1 0h1m3 0h1m4 0h1m2 0h1m3 0h1m1 0h2m1 0h1m1 0h1m9 0h1m2 0h1m1 0h1m5 0h1m2 0h1m1 0h1m1 0h1m1 0h2m1 0h2m1 0h1m1 0h1m1 0h5m2 0h1m1 0h8m2 0h1m4 0h1m1 0h1m1 0h1m1 0h1m1 0h1m2 0h1m3 0h5m2 0h1m1 0h2m1 0h1m1 0h1m3 0h1m2 0h2m6 0h1m5 0h1m10 0h1m3 0h1m3 0h2m4 0h1m7 0h2m1 0h1m1 0h1m2 0h1m1 0h1m6 0h1m3 0h1m1 0h2m2 0h2m1 0h1m5 0h1m2 0h2m7 0h1m4 0h1m1 0h4m3 0h4m3 0h3m1 0h1m7 0h1m5 0h9m1 0h3m1 0h5m1 0h1m1 0h3m1 0h5m1 0h2m2 0h1m1 0h7m3 0h1m1 0h1m4 0h1m3 0h2m2 0h1m5 0h2m3 0h1m5 0h2m2 0h1m2 0h3m2 0h2m2 0h5m1 0h2M0 56.5h2m1 0h2m11 0h3m1 0h1m2 0h1m2 0h6m6 0h1m1 0h1m1 0h2m3 0h3m5 0h1m1 0h1m4 0h1m14 0h1m4 0h1m1 0h1m7 0h1m2 0h1m4 0h2m1 0h1m2 0h2m1 0h1m1 0h4m1 0h2m1 0h4m1 0h3m1 0h2m2 0h2m2 0h1m5 0h2m1 0h1m1 0h2m3 0h1m4 0h5m2 0h1m2 0h3m1 0h2m4 0h6m2 0h1m1 0h2m1 0h5m2 0h1m2 0h2m1 0h2m1 0h3m3 0h1m1 0h4m1 0h1m3 0h1m4 0h1m2 0h2m1 0h1m1 0h1m5 0h1m1 0h1m6 0h2m1 0h1m1 0h1m1 0h4m2 0h2m2 0h3m5 0h1m1 0h1m1 0h1m4 0h1m8 0h1m1 0h1m1 0h3m10 0h2m1 0h6m1 0h1m6 0h2m1 0h4m2 0h1m2 0h2m2 0h2m2 0h1m2 0h1m1 0h2m2 0h1m3 0h1m7 0h2m1 0h10m2 0h3m1 0h1m1 0h4m1 0h7m2 0h3m3 0h6M6 57.5h1m3 0h1m3 0h3m3 0h1m4 0h1m1 0h2m1 0h1m4 0h2m3 0h4m1 0h3m1 0h2m1 0h1m1 0h1m1 0h2m4 0h1m1 0h3m1 0h3m3 0h2m7 0h1m4 0h1m3 0h1m1 0h1m3 0h3m2 0h1m2 0h2m1 0h7m1 0h4m1 0h1m1 0h8m1 0h2m2 0h2m1 0h1m1 0h4m1 0h2m1 0h1m1 0h1m4 0h2m3 0h4m2 0h1m5 0h1m1 0h9m2 0h3m1 0h1m2 0h1m5 0h1m1 0h2m1 0h1m1 0h2m3 0h1m6 0h1m2 0h2m4 0h1m1 0h1m4 0h1m1 0h1m1 0h1m2 0h3m1 0h1m7 0h4m2 0h2m4 0h1m1 0h1m4 0h4m6 0h1m1 0h1m1 0h1m3 0h2m15 0h9m2 0h2m4 0h1m1 0h1m1 0h4m2 0h1m1 0h2m4 0h1m1 0h1m1 0h1m1 0h2m3 0h2m1 0h1m2 0h1m4 0h1m2 0h1m2 0h2m2 0h2m1 0h1m2 0h2m1 0h2m1 0h1m1 0h2m3 0h2m1 0h1m1 0h1m2 0h1m2 0h6m1 0h4M0 58.5h1m6 0h1m4 0h1m4 0h1m4 0h1m1 0h4m5 0h2m3 0h6m2 0h1m1 0h1m1 0h4m1 0h2m1 0h1m3 0h3m3 0h2m1 0h1m14 0h4m7 0h1m8 0h1m1 0h4m5 0h4m2 0h1m1 0h1m1 0h4m1 0h8m3 0h1m1 0h1m1 0h1m4 0h1m5 0h2m1 0h1m1 0h1m1 0h1m1 0h3m2 0h1m1 0h4m1 0h1m6 0h3m1 0h1m1 0h6m1 0h1m2 0h1m1 0h5m2 0h1m2 0h1m3 0h1m1 0h3m2 0h1m1 0h2m2 0h1m2 0h1m1 0h2m4 0h1m4 0h3m1 0h1m4 0h1m1 0h1m1 0h3m1 0h1m3 0h1m1 0h2m10 0h1m2 0h1m5 0h4m2 0h2m4 0h1m1 0h1m1 0h1m2 0h2m1 0h7m1 0h1m1 0h5m2 0h5m1 0h2m2 0h2m1 0h4m1 0h1m1 0h1m5 0h1m3 0h1m4 0h4m2 0h4m2 0h3m3 0h3m3 0h3m1 0h1m1 0h6m1 0h2m1 0h1m1 0h1m1 0h2m4 0h1M0 59.5h1m12 0h1m2 0h1m4 0h1m3 0h3m2 0h1m1 0h3m3 0h1m1 0h4m1 0h2m1 0h1m3 0h1m5 0h1m1 0h1m1 0h1m1 0h1m7 0h1m1 0h2m4 0h1m1 0h1m4 0h1m1 0h1m8 0h2m3 0h1m1 0h7m1 0h2m1 0h3m1 0h1m1 0h3m1 0h2m2 0h1m1 0h1m1 0h1m1 0h1m2 0h1m3 0h1m2 0h1m3 0h1m6 0h1m1 0h9m2 0h3m1 0h3m3 0h1m1 0h1m2 0h3m1 0h2m1 0h1m1 0h2m1 0h1m1 0h2m4 0h2m1 0h1m1 0h2m1 0h1m5 0h1m4 0h1m2 0h2m4 0h1m1 0h1m2 0h1m3 0h1m1 0h1m3 0h5m2 0h1m1 0h4m2 0h1m1 0h1m3 0h1m1 0h2m7 0h1m3 0h1m12 0h3m1 0h2m2 0h1m1 0h2m2 0h2m1 0h2m1 0h2m1 0h3m1 0h3m2 0h3m1 0h1m1 0h4m2 0h6m2 0h3m2 0h2m9 0h4m1 0h6m3 0h1m1 0h2m1 0h1m1 0h1m1 0h1m1 0h1m2 0h2m4 0h1m2 0h1m3 0h3m1 0h3m1 0h2M0 60.5h1m4 0h1m6 0h2m4 0h2m3 0h1m3 0h1m1 0h3m1 0h2m2 0h2m1 0h3m1 0h1m1 0h1m1 0h2m2 0h3m2 0h1m2 0h3m2 0h3m1 0h1m3 0h4m1 0h1m1 0h1m1 0h2m1 0h1m1 0h3m6 0h1m1 0h1m1 0h2m3 0h1m2 0h1m2 0h1m1 0h7m1 0h1m2 0h4m2 0h1m1 0h1m9 0h1m2 0h1m1 0h1m8 0h1m1 0h3m1 0h3m2 0h1m1 0h2m1 0h1m3 0h2m3 0h1m1 0h2m1 0h2m1 0h3m1 0h1m1 0h2m2 0h2m2 0h4m1 0h2m2 0h3m2 0h1m2 0h1m1 0h2m2 0h1m2 0h2m1 0h2m1 0h3m7 0h1m5 0h1m1 0h1m1 0h1m3 0h5m1 0h1m1 0h3m1 0h1m2 0h1m1 0h1m2 0h2m1 0h1m1 0h1m1 0h2m1 0h1m2 0h1m2 0h1m1 0h1m2 0h2m1 0h1m3 0h2m1 0h2m2 0h1m2 0h2m1 0h1m1 0h1m1 0h3m2 0h5m2 0h6m1 0h1m1 0h1m1 0h5m2 0h2m4 0h1m5 0h9m1 0h4m1 0h8m1 0h2m1 0h1m1 0h2m2 0h1m1 0h2m1 0h2m1 0h2m1 0h4m1 0h1M3 61.5h6m1 0h8m2 0h1m1 0h3m2 0h2m3 0h2m1 0h1m3 0h1m2 0h2m3 0h1m5 0h1m1 0h1m1 0h1m1 0h3m1 0h7m1 0h5m2 0h1m1 0h2m1 0h2m1 0h2m1 0h9m4 0h1m16 0h1m18 0h1m20 0h1m4 0h11m1 0h1m1 0h4m2 0h1m1 0h1m1 0h3m2 0h6m2 0h1m2 0h1m3 0h7m1 0h4m1 0h3m3 0h3m1 0h1m1 0h2m1 0h3m1 0h1m1 0h1m1 0h6m1 0h3m2 0h1m4 0h2m1 0h5m1 0h2m1 0h7m1 0h2m3 0h1m1 0h6m2 0h5m1 0h3m2 0h3m8 0h2m1 0h1m4 0h1m40 0h2m1 0h1m2 0h1m3 0h1m1 0h3m1 0h1m4 0h2m1 0h6m7 0h4m3 0h3m1 0h1M10 62.5h1m24 0h1m9 0h1m10 0h1m2 0h2m4 0h1m3 0h1m3 0h3m1 0h1m6 0h1m4 0h1m1 0h1m2 0h1m3 0h2m5 0h4m5 0h4m1 0h5m4 0h4m1 0h2m2 0h1m2 0h2m2 0h1m1 0h1m2 0h2m1 0h1m7 0h3m1 0h1m1 0h3m1 0h4m1 0h5m1 0h6m1 0h2m1 0h1m2 0h3m1 0h5m1 0h2m15 0h1m2 0h1m4 0h3m8 0h2m4 0h1m9 0h1m9 0h1m9 0h1m9 0h1m4 0h1m10 0h2m9 0h1m1 0h1m2 0h1m1 0h3m2 0h4m1 0h11m1 0h9m1 0h8m1 0h3m14 0h1m5 0h1m10 0h1m4 0h1m2 0h1m10 0h1M1 63.5h6m2 0h1m4 0h2m2 0h1m1 0h2m2 0h1m7 0h2m1 0h4m3 0h2m1 0h2m1 0h1m4 0h4m1 0h2m2 0h4m1 0h5m1 0h2m1 0h4m1 0h9m1 0h3m4 0h4m2 0h1m5 0h1m1 0h1m19 0h2m1 0h1m18 0h1m1 0h3m9 0h1m7 0h2m1 0h3m1 0h1m4 0h1m1 0h1m1 0h1m1 0h2m3 0h1m3 0h1m2 0h2m2 0h3m1 0h2m1 0h2m1 0h1m1 0h5m2 0h6m1 0h5m1 0h1m3 0h1m2 0h4m1 0h4m3 0h4m1 0h2m1 0h7m1 0h22m2 0h1m2 0h6m2 0h2m1 0h1m1 0h1m1 0h1m6 0h1m1 0h4m3 0h1m3 0h3m1 0h1m8 0h2m12 0h1m3 0h2m4 0h3m1 0h1m1 0h1m1 0h4m1 0h4m1 0h2m3 0h4m5 0h5m1 0h1M7 64.5h3m2 0h1m2 0h2m2 0h2m1 0h1m5 0h4m1 0h1m2 0h10m2 0h2m3 0h3m1 0h2m1 0h2m2 0h1m1 0h1m1 0h1m3 0h3m1 0h2m1 0h4m2 0h3m1 0h3m1 0h4m2 0h1m1 0h2m1 0h1m9 0h1m24 0h1m11 0h1m3 0h3m23 0h1m1 0h1m5 0h1m4 0h1m8 0h1m1 0h3m1 0h1m1 0h2m1 0h4m1 0h8m1 0h2m1 0h1m1 0h6m1 0h2m2 0h1m1 0h4m1 0h3m3 0h1m5 0h1m1 0h3m1 0h1m1 0h1m2 0h2m2 0h1m1 0h7m1 0h5m2 0h1m1 0h4m2 0h1m1 0h2m1 0h1m4 0h1m2 0h1m2 0h2m1 0h1m11 0h1m4 0h1m8 0h1m3 0h1m10 0h1m2 0h1m1 0h6m2 0h1m1 0h9m1 0h1m1 0h2m2 0h5m1 0h1m2 0h5m4 0h3M0 65.5h1m5 0h1m1 0h3m2 0h1m1 0h1m2 0h2m2 0h2m1 0h1m1 0h1m1 0h1m1 0h9m1 0h1m1 0h2m1 0h3m3 0h12m1 0h4m1 0h1m2 0h4m1 0h5m1 0h1m1 0h2m1 0h2m2 0h3m3 0h2m1 0h3m4 0h1m2 0h1m37 0h1m6 0h1m3 0h1m4 0h1m1 0h1m3 0h1m4 0h1m6 0h1m5 0h2m15 0h7m1 0h3m1 0h3m1 0h9m4 0h1m2 0h3m1 0h1m1 0h1m1 0h1m1 0h3m4 0h2m3 0h4m2 0h7m3 0h7m5 0h1m2 0h3m1 0h1m1 0h4m1 0h6m1 0h3m3 0h2m1 0h1m3 0h1m3 0h1m2 0h1m1 0h1m2 0h1m11 0h1m12 0h1m1 0h1m7 0h1m3 0h5m1 0h7m1 0h1m1 0h5m1 0h2m1 0h4m1 0h1m1 0h7m2 0h1M3 66.5h2m2 0h2m2 0h1m1 0h3m3 0h1m1 0h1m2 0h3m3 0h5m2 0h6m1 0h3m1 0h2m3 0h3m1 0h2m1 0h2m1 0h6m2 0h1m1 0h3m1 0h1m2 0h2m3 0h1m7 0h3m1 0h1m4 0h2m12 0h1m16 0h1m6 0h1m4 0h1m9 0h1m1 0h2m2 0h1m3 0h1m3 0h1m8 0h1m6 0h1m3 0h1m4 0h1m6 0h1m2 0h3m2 0h1m1 0h5m3 0h2m3 0h1m2 0h15m1 0h7m2 0h2m2 0h1m4 0h5m1 0h2m1 0h4m1 0h2m1 0h1m2 0h11m1 0h1m1 0h3m1 0h1m2 0h9m1 0h3m2 0h1m6 0h1m4 0h1m8 0h1m5 0h1m2 0h1m15 0h1m2 0h2m2 0h3m1 0h1m2 0h3m1 0h4m1 0h4m3 0h8m2 0h4m2 0h3m1 0h3M3 67.5h2m3 0h1m1 0h2m5 0h3m1 0h4m1 0h1m2 0h1m1 0h2m5 0h4m1 0h1m3 0h2m4 0h1m1 0h1m1 0h4m2 0h7m1 0h4m1 0h1m1 0h2m1 0h1m1 0h16m1 0h1m2 0h1m51 0h1m1 0h1m2 0h1m8 0h1m20 0h1m1 0h1m10 0h2m1 0h1m4 0h7m1 0h2m1 0h8m2 0h4m1 0h4m1 0h8m1 0h2m1 0h5m2 0h5m2 0h4m3 0h5m1 0h4m2 0h3m1 0h4m3 0h2m1 0h2m2 0h3m1 0h2m1 0h1m4 0h1m9 0h1m3 0h1m3 0h1m14 0h1m2 0h1m12 0h3m1 0h1m1 0h2m1 0h3m1 0h8m1 0h8m1 0h13m1 0h2m1 0h2M5 68.5h1m2 0h2m1 0h2m1 0h1m3 0h1m1 0h8m1 0h1m1 0h2m1 0h1m2 0h4m3 0h5m4 0h7m1 0h8m1 0h2m1 0h2m1 0h1m1 0h1m1 0h1m1 0h3m1 0h5m2 0h1m1 0h1m2 0h1m2 0h2m3 0h1m25 0h1m9 0h1m12 0h1m3 0h1m6 0h2m17 0h1m3 0h1m3 0h1m7 0h1m5 0h2m2 0h2m1 0h2m1 0h4m1 0h2m1 0h1m1 0h7m1 0h5m1 0h1m3 0h3m2 0h3m3 0h3m3 0h1m1 0h5m1 0h1m1 0h1m1 0h1m3 0h1m3 0h1m1 0h3m1 0h2m1 0h5m1 0h6m1 0h1m2 0h4m1 0h1m3 0h1m8 0h2m2 0h1m8 0h1m4 0h1m7 0h1m11 0h1m2 0h2m1 0h5m1 0h2m2 0h9m1 0h1m1 0h3m1 0h1m2 0h11m1 0h2m1 0h1m1 0h1M4 69.5h1m2 0h1m1 0h3m1 0h2m4 0h3m2 0h1m1 0h4m2 0h4m2 0h2m1 0h2m2 0h5m3 0h2m2 0h1m1 0h1m1 0h3m2 0h3m5 0h7m1 0h1m1 0h1m1 0h3m1 0h1m1 0h8m1 0h4m51 0h1m3 0h1m11 0h1m1 0h3m3 0h1m2 0h1m22 0h1m3 0h2m1 0h1m3 0h3m1 0h8m1 0h6m1 0h5m1 0h2m1 0h1m1 0h1m2 0h3m2 0h2m1 0h1m1 0h6m1 0h4m1 0h7m1 0h3m1 0h2m2 0h6m4 0h1m1 0h4m3 0h1m3 0h2m2 0h1m1 0h1m5 0h1m3 0h1m12 0h1m15 0h1m6 0h1m1 0h4m1 0h2m1 0h5m2 0h1m1 0h1m1 0h3m1 0h6m1 0h3m1 0h2m1 0h1m2 0h9M5 70.5h1m2 0h1m1 0h1m2 0h5m1 0h1m1 0h3m1 0h2m1 0h1m1 0h4m1 0h1m1 0h1m1 0h1m1 0h1m1 0h2m1 0h5m1 0h4m1 0h3m2 0h4m1 0h1m1 0h1m1 0h4m1 0h2m1 0h1m3 0h3m1 0h1m2 0h1m1 0h4m2 0h7m1 0h1m42 0h1m5 0h1m6 0h1m14 0h1m3 0h3m2 0h1m4 0h1m13 0h3m1 0h2m1 0h3m1 0h3m1 0h8m1 0h4m1 0h1m1 0h1m3 0h1m2 0h1m1 0h4m1 0h1m1 0h7m2 0h2m1 0h2m1 0h3m1 0h2m1 0h1m1 0h8m2 0h2m1 0h6m1 0h1m1 0h2m1 0h3m2 0h5m2 0h1m3 0h1m1 0h1m2 0h1m1 0h1m9 0h1m4 0h1m2 0h1m19 0h1m3 0h2m2 0h2m2 0h5m1 0h6m1 0h5m1 0h7m1 0h1m1 0h1m1 0h1m1 0h6m1 0h2M3 71.5h1m1 0h3m2 0h3m1 0h1m1 0h3m1 0h1m1 0h4m4 0h1m3 0h6m3 0h1m1 0h2m2 0h2m2 0h3m1 0h1m1 0h1m1 0h2m2 0h2m1 0h3m1 0h3m1 0h3m1 0h2m1 0h6m1 0h1m1 0h3m1 0h2m2 0h5m4 0h1m24 0h1m19 0h3m2 0h1m5 0h1m12 0h1m8 0h1m2 0h1m4 0h1m10 0h1m1 0h3m1 0h11m2 0h4m1 0h7m1 0h3m1 0h4m2 0h1m2 0h4m1 0h2m3 0h2m1 0h7m1 0h1m1 0h10m1 0h5m1 0h1m1 0h3m1 0h2m1 0h4m1 0h1m1 0h3m2 0h2m1 0h2m2 0h2m2 0h2m19 0h1m6 0h1m13 0h4m2 0h3m1 0h1m1 0h1m1 0h5m1 0h1m1 0h6m1 0h1m2 0h1m1 0h2m1 0h1m1 0h12M3 72.5h3m3 0h4m2 0h6m2 0h3m3 0h1m1 0h2m1 0h7m1 0h4m1 0h3m2 0h1m1 0h1m1 0h5m2 0h1m2 0h1m1 0h4m2 0h1m2 0h4m3 0h3m1 0h5m1 0h2m2 0h1m1 0h3m10 0h1m20 0h1m13 0h3m4 0h1m11 0h1m1 0h1m8 0h1m7 0h1m6 0h1m7 0h1m3 0h3m1 0h3m2 0h2m1 0h4m1 0h1m2 0h1m2 0h7m1 0h6m1 0h1m5 0h4m1 0h2m1 0h1m3 0h1m1 0h1m2 0h4m1 0h5m2 0h2m1 0h7m1 0h3m2 0h2m1 0h1m1 0h6m2 0h4m6 0h1m2 0h1m1 0h1m1 0h1m10 0h1m1 0h1m5 0h1m2 0h1m6 0h1m13 0h1m1 0h4m1 0h5m1 0h11m1 0h3m1 0h1m1 0h4m1 0h4m1 0h3m1 0h1M1 73.5h1m6 0h4m4 0h1m1 0h3m2 0h1m3 0h2m2 0h2m1 0h2m2 0h2m1 0h3m3 0h3m2 0h3m2 0h1m1 0h3m1 0h2m3 0h2m1 0h2m1 0h4m2 0h1m1 0h2m3 0h2m1 0h1m1 0h1m1 0h1m2 0h1m1 0h1m1 0h1m1 0h1m1 0h1m11 0h1m8 0h1m28 0h1m1 0h1m1 0h1m17 0h1m7 0h1m2 0h1m2 0h1m11 0h1m2 0h3m1 0h7m1 0h12m2 0h4m1 0h5m2 0h1m1 0h3m1 0h1m1 0h5m3 0h2m1 0h4m1 0h10m2 0h1m3 0h2m1 0h3m1 0h9m1 0h1m3 0h1m1 0h4m2 0h1m9 0h1m15 0h1m13 0h1m9 0h1m1 0h1m1 0h3m1 0h3m1 0h7m1 0h4m1 0h4m1 0h6m1 0h3m1 0h1m1 0h3m1 0h3M2 74.5h1m3 0h3m1 0h1m2 0h1m1 0h3m4 0h3m1 0h17m1 0h2m1 0h1m4 0h2m1 0h3m1 0h1m2 0h1m1 0h7m2 0h1m2 0h2m1 0h5m1 0h3m2 0h1m1 0h2m2 0h1m1 0h3m1 0h1m27 0h1m25 0h1m2 0h1m13 0h1m9 0h1m10 0h1m7 0h1m4 0h2m3 0h1m1 0h5m1 0h3m1 0h1m3 0h2m3 0h9m1 0h3m2 0h4m1 0h1m1 0h4m3 0h1m2 0h1m1 0h5m1 0h14m2 0h5m1 0h1m1 0h1m1 0h6m1 0h5m1 0h2m2 0h3m5 0h1m1 0h1m7 0h2m27 0h1m1 0h3m2 0h2m1 0h1m3 0h1m3 0h1m1 0h3m2 0h2m1 0h5m3 0h1m4 0h3m1 0h2m1 0h4M2 75.5h1m1 0h3m4 0h3m1 0h5m2 0h1m1 0h4m2 0h2m1 0h10m1 0h2m1 0h2m1 0h1m1 0h5m3 0h2m1 0h4m1 0h2m1 0h1m3 0h2m1 0h3m1 0h1m1 0h2m1 0h3m3 0h1m1 0h7m1 0h1m8 0h1m8 0h2m8 0h1m16 0h1m2 0h1m5 0h1m4 0h1m10 0h2m6 0h1m2 0h1m21 0h1m4 0h3m1 0h2m1 0h4m2 0h5m1 0h4m3 0h2m1 0h3m4 0h2m1 0h2m1 0h4m1 0h1m2 0h3m2 0h2m1 0h1m1 0h1m3 0h5m1 0h8m3 0h3m1 0h5m1 0h2m2 0h5m1 0h1m1 0h1m1 0h1m17 0h2m22 0h1m4 0h1m2 0h3m1 0h6m2 0h4m1 0h1m1 0h1m1 0h2m3 0h3m1 0h3m2 0h2m1 0h3m1 0h2m3 0h1m1 0h1M1 76.5h1m4 0h7m1 0h2m3 0h1m3 0h1m2 0h5m1 0h4m1 0h2m1 0h3m2 0h4m5 0h2m2 0h1m1 0h7m3 0h3m1 0h5m5 0h3m1 0h2m2 0h2m1 0h2m1 0h6m37 0h1m11 0h1m1 0h2m3 0h2m26 0h2m14 0h1m1 0h3m2 0h2m1 0h1m3 0h5m1 0h2m1 0h1m1 0h4m2 0h11m3 0h1m1 0h1m1 0h3m1 0h1m1 0h1m1 0h1m1 0h2m1 0h1m1 0h4m5 0h12m1 0h1m1 0h4m1 0h1m3 0h2m1 0h6m2 0h2m3 0h1m4 0h2m1 0h1m13 0h1m8 0h1m5 0h1m1 0h1m5 0h2m1 0h1m1 0h6m1 0h1m1 0h2m1 0h2m1 0h3m2 0h3m2 0h5m2 0h2m1 0h14M1 77.5h3m1 0h7m1 0h1m1 0h1m1 0h1m1 0h1m3 0h1m1 0h2m2 0h1m2 0h5m3 0h3m3 0h1m1 0h1m4 0h2m1 0h5m2 0h2m2 0h3m2 0h1m1 0h2m3 0h3m1 0h2m8 0h1m1 0h1m1 0h3m3 0h2m52 0h1m1 0h1m1 0h1m18 0h1m25 0h12m1 0h1m5 0h4m1 0h1m2 0h1m2 0h1m1 0h3m1 0h1m1 0h3m2 0h6m1 0h2m1 0h4m1 0h2m2 0h1m1 0h3m1 0h9m1 0h15m2 0h2m3 0h6m2 0h1m1 0h1m1 0h2m1 0h1m2 0h1m14 0h1m12 0h1m14 0h1m2 0h4m1 0h3m4 0h1m1 0h1m2 0h1m1 0h1m1 0h3m2 0h1m1 0h1m2 0h5m2 0h8M1 78.5h1m1 0h1m1 0h1m1 0h6m3 0h2m1 0h1m2 0h6m1 0h1m1 0h4m2 0h1m1 0h4m1 0h3m2 0h2m2 0h6m1 0h1m1 0h2m1 0h4m1 0h3m1 0h1m1 0h2m2 0h7m1 0h2m2 0h2m1 0h1m3 0h1m6 0h1m44 0h1m3 0h1m3 0h1m12 0h1m2 0h1m4 0h1m13 0h1m14 0h2m1 0h1m1 0h2m1 0h6m2 0h3m5 0h8m3 0h1m1 0h1m3 0h1m1 0h3m2 0h3m1 0h8m1 0h1m1 0h5m2 0h2m1 0h2m2 0h4m2 0h5m1 0h3m1 0h8m2 0h2m1 0h1m1 0h1m4 0h1m2 0h1m13 0h1m13 0h1m9 0h3m1 0h10m2 0h5m1 0h1m1 0h10m1 0h1m1 0h8m1 0h6M1 79.5h1m4 0h1m1 0h1m1 0h3m1 0h1m1 0h1m1 0h2m1 0h5m1 0h1m2 0h1m1 0h1m2 0h1m1 0h1m3 0h2m1 0h3m1 0h2m3 0h1m1 0h2m1 0h1m1 0h1m1 0h6m1 0h1m1 0h1m1 0h3m5 0h1m1 0h1m1 0h1m1 0h3m2 0h4m2 0h4m1 0h1m3 0h1m25 0h1m21 0h2m8 0h1m6 0h1m3 0h3m10 0h1m18 0h6m1 0h4m1 0h5m1 0h2m2 0h2m1 0h1m1 0h8m1 0h1m1 0h2m3 0h1m4 0h1m6 0h4m1 0h2m1 0h1m1 0h10m1 0h1m1 0h1m2 0h3m1 0h2m1 0h2m3 0h3m1 0h1m1 0h4m1 0h5m6 0h1m4 0h1m20 0h1m14 0h5m1 0h4m1 0h8m1 0h2m1 0h2m1 0h7m1 0h3m1 0h3m1 0h5m1 0h2M2 80.5h1m4 0h3m2 0h1m4 0h1m1 0h4m1 0h1m2 0h2m4 0h10m1 0h6m3 0h2m2 0h1m1 0h4m2 0h5m3 0h3m1 0h1m3 0h2m1 0h1m4 0h2m1 0h2m5 0h3m1 0h1m18 0h1m10 0h1m14 0h1m7 0h1m12 0h1m5 0h2m7 0h1m16 0h1m3 0h1m1 0h2m2 0h1m1 0h1m1 0h4m2 0h3m1 0h1m1 0h2m1 0h1m1 0h6m2 0h5m1 0h6m1 0h3m1 0h2m2 0h4m2 0h5m2 0h8m3 0h1m2 0h2m1 0h2m1 0h1m1 0h1m1 0h3m1 0h1m2 0h2m1 0h3m1 0h2m2 0h1m1 0h2m6 0h2m8 0h1m5 0h1m20 0h1m1 0h1m1 0h9m1 0h3m5 0h3m1 0h2m1 0h3m3 0h1m1 0h13m1 0h2M3 81.5h2m2 0h1m2 0h5m1 0h1m1 0h3m1 0h7m1 0h2m1 0h5m2 0h4m3 0h4m1 0h2m1 0h1m1 0h2m2 0h4m1 0h1m1 0h3m1 0h2m3 0h1m1 0h3m2 0h1m1 0h1m1 0h2m1 0h2m3 0h1m1 0h2m1 0h3m10 0h1m41 0h2m1 0h1m25 0h1m9 0h1m10 0h3m1 0h1m1 0h5m1 0h3m2 0h7m2 0h1m1 0h6m1 0h1m3 0h2m3 0h4m2 0h3m2 0h3m4 0h2m1 0h1m1 0h1m1 0h4m2 0h1m1 0h1m1 0h1m3 0h4m1 0h1m1 0h6m1 0h1m2 0h1m1 0h1m1 0h2m2 0h1m1 0h1m2 0h1m2 0h1m2 0h1m18 0h2m17 0h1m2 0h4m1 0h2m1 0h10m2 0h8m1 0h2m1 0h7m1 0h10M5 82.5h2m2 0h5m2 0h2m1 0h6m1 0h1m2 0h1m1 0h4m1 0h5m1 0h1m1 0h1m1 0h1m1 0h3m1 0h8m1 0h3m1 0h1m5 0h3m2 0h4m2 0h2m1 0h1m4 0h1m2 0h1m2 0h1m1 0h1m1 0h2m1 0h1m12 0h2m22 0h1m6 0h1m8 0h1m3 0h1m2 0h1m24 0h1m1 0h1m4 0h1m5 0h1m5 0h5m4 0h1m2 0h1m6 0h1m1 0h2m2 0h2m3 0h3m1 0h4m2 0h1m1 0h8m1 0h7m2 0h1m1 0h4m2 0h4m1 0h3m1 0h3m1 0h1m1 0h3m2 0h2m1 0h2m5 0h2m1 0h3m3 0h2m2 0h1m2 0h2m6 0h1m8 0h1m25 0h2m1 0h3m1 0h3m2 0h3m1 0h4m2 0h3m1 0h5m3 0h1m3 0h7m1 0h6M2 83.5h2m2 0h2m1 0h1m1 0h2m1 0h4m1 0h1m2 0h1m3 0h3m1 0h2m1 0h2m1 0h1m1 0h1m1 0h3m1 0h2m1 0h1m1 0h2m1 0h1m3 0h6m1 0h2m2 0h3m3 0h1m3 0h3m1 0h1m2 0h3m5 0h3m1 0h1m1 0h1m1 0h3m1 0h1m20 0h1m7 0h1m1 0h1m16 0h1m2 0h2m21 0h1m24 0h1m3 0h1m1 0h1m1 0h3m1 0h7m1 0h4m5 0h1m1 0h1m2 0h1m1 0h4m1 0h2m1 0h5m1 0h3m2 0h2m1 0h4m1 0h1m1 0h4m1 0h5m1 0h2m1 0h3m1 0h1m4 0h1m1 0h2m2 0h1m1 0h2m1 0h1m3 0h2m2 0h1m1 0h3m1 0h3m4 0h1m21 0h1m17 0h4m2 0h1m1 0h3m2 0h4m2 0h1m2 0h5m2 0h2m2 0h6m2 0h4m1 0h1m1 0h1m2 0h2M1 84.5h1m1 0h7m1 0h1m3 0h2m1 0h2m5 0h1m2 0h5m1 0h2m1 0h11m1 0h2m1 0h12m2 0h3m2 0h5m1 0h1m1 0h1m1 0h1m1 0h1m4 0h1m1 0h1m2 0h3m6 0h1m1 0h1m36 0h1m3 0h1m12 0h1m28 0h1m3 0h1m14 0h2m1 0h2m1 0h1m2 0h3m1 0h1m1 0h1m1 0h2m2 0h1m1 0h5m1 0h7m2 0h4m1 0h1m3 0h3m1 0h1m4 0h3m1 0h1m2 0h4m3 0h2m2 0h5m4 0h1m1 0h4m1 0h3m1 0h1m1 0h1m1 0h2m1 0h2m1 0h1m2 0h2m3 0h2m5 0h1m5 0h1m5 0h1m4 0h2m10 0h3m9 0h1m1 0h5m1 0h4m3 0h2m1 0h7m1 0h1m1 0h5m1 0h2m2 0h5m2 0h3m1 0h1M2 85.5h2m2 0h2m3 0h1m1 0h1m3 0h2m1 0h2m2 0h1m1 0h1m1 0h2m5 0h1m1 0h2m1 0h4m2 0h1m1 0h2m5 0h2m6 0h1m1 0h4m1 0h3m1 0h3m1 0h2m1 0h1m5 0h2m3 0h4m3 0h1m1 0h3m1 0h1m7 0h1m41 0h2m16 0h1m12 0h1m2 0h1m5 0h1m3 0h1m5 0h1m2 0h1m1 0h2m2 0h1m1 0h6m1 0h3m2 0h7m1 0h1m1 0h2m2 0h4m1 0h2m2 0h2m1 0h3m1 0h5m1 0h3m1 0h7m1 0h4m1 0h10m1 0h12m1 0h1m2 0h6m2 0h3m6 0h1m2 0h1m6 0h1m20 0h1m6 0h1m1 0h4m1 0h4m1 0h2m2 0h3m1 0h3m1 0h3m1 0h21m2 0h2M1 86.5h1m3 0h1m1 0h2m1 0h1m2 0h2m1 0h1m1 0h4m1 0h2m1 0h5m1 0h1m2 0h11m1 0h2m4 0h3m1 0h8m1 0h6m1 0h1m1 0h2m1 0h3m1 0h1m2 0h6m2 0h3m1 0h1m1 0h3m1 0h1m2 0h1m25 0h1m20 0h1m2 0h1m15 0h1m15 0h2m5 0h1m10 0h2m1 0h1m2 0h11m1 0h8m1 0h1m2 0h3m1 0h3m2 0h1m1 0h2m2 0h2m1 0h1m2 0h3m1 0h1m2 0h3m5 0h1m3 0h2m6 0h1m1 0h1m2 0h1m1 0h1m1 0h3m3 0h1m1 0h9m12 0h1m22 0h1m10 0h1m1 0h2m1 0h1m4 0h7m3 0h1m1 0h12m1 0h4m1 0h1m1 0h3m1 0h2m1 0h5m1 0h2m1 0h1M2 87.5h4m1 0h6m2 0h3m1 0h4m1 0h1m1 0h2m1 0h7m1 0h1m3 0h4m1 0h4m3 0h8m3 0h1m2 0h1m2 0h1m3 0h1m1 0h1m1 0h1m3 0h2m1 0h1m2 0h1m3 0h3m5 0h2m1 0h2m49 0h1m2 0h1m1 0h1m5 0h1m5 0h1m6 0h1m11 0h1m15 0h4m1 0h2m1 0h5m1 0h3m1 0h2m1 0h3m2 0h2m2 0h7m1 0h3m1 0h5m1 0h1m1 0h1m1 0h5m3 0h2m1 0h19m1 0h1m1 0h4m1 0h1m2 0h1m1 0h2m1 0h1m1 0h5m1 0h1m1 0h1m1 0h1m8 0h1m37 0h1m1 0h5m1 0h1m1 0h3m1 0h4m2 0h8m1 0h1m1 0h5m4 0h6m1 0h2m1 0h3M2 88.5h6m1 0h5m1 0h5m1 0h2m1 0h1m1 0h11m1 0h1m2 0h4m1 0h5m1 0h11m1 0h1m1 0h1m1 0h1m2 0h3m3 0h2m5 0h2m2 0h1m1 0h2m2 0h2m2 0h2m1 0h3m1 0h1m50 0h1m12 0h1m4 0h2m2 0h1m7 0h1m2 0h1m5 0h1m9 0h1m1 0h2m1 0h2m2 0h4m1 0h2m2 0h9m1 0h5m2 0h1m3 0h2m2 0h1m1 0h6m3 0h1m1 0h5m1 0h1m1 0h1m2 0h3m3 0h8m2 0h2m1 0h7m2 0h1m1 0h1m1 0h2m3 0h1m2 0h2m2 0h1m2 0h1m4 0h2m3 0h1m7 0h1m1 0h1m8 0h1m15 0h4m1 0h3m1 0h3m4 0h3m2 0h2m2 0h3m1 0h1m2 0h2m1 0h1m2 0h1m1 0h5m1 0h4m1 0h1M3 89.5h1m6 0h6m1 0h7m1 0h1m1 0h2m3 0h2m3 0h4m1 0h3m2 0h3m3 0h7m3 0h2m1 0h1m1 0h2m2 0h3m1 0h3m1 0h2m1 0h1m1 0h1m1 0h1m1 0h1m1 0h3m1 0h2m3 0h2m1 0h1m7 0h1m3 0h2m3 0h1m34 0h2m19 0h1m29 0h3m1 0h11m2 0h5m4 0h12m1 0h1m1 0h6m1 0h1m1 0h3m2 0h3m1 0h6m1 0h1m2 0h2m3 0h2m1 0h4m1 0h1m1 0h1m1 0h1m2 0h13m1 0h10m5 0h1m5 0h1m5 0h1m28 0h3m1 0h8m1 0h6m3 0h2m1 0h1m2 0h2m1 0h4m2 0h3m1 0h2m1 0h3m1 0h1m1 0h1M1 90.5h1m1 0h5m2 0h4m4 0h3m2 0h12m1 0h6m1 0h1m2 0h2m1 0h1m3 0h7m1 0h1m1 0h2m2 0h2m5 0h6m3 0h2m1 0h4m2 0h2m5 0h1m2 0h1m1 0h1m29 0h1m43 0h2m6 0h1m14 0h1m3 0h1m1 0h2m1 0h6m1 0h2m2 0h6m1 0h2m1 0h2m4 0h1m1 0h2m2 0h1m1 0h1m1 0h1m1 0h4m1 0h2m2 0h1m6 0h1m4 0h2m1 0h5m1 0h2m2 0h5m4 0h2m1 0h1m2 0h2m1 0h3m2 0h8m3 0h1m15 0h1m3 0h1m5 0h1m19 0h1m1 0h1m1 0h1m2 0h4m2 0h4m1 0h4m1 0h2m1 0h3m1 0h2m3 0h1m1 0h2m1 0h2m1 0h1m2 0h3m2 0h2M3 91.5h1m1 0h2m1 0h2m6 0h4m1 0h3m2 0h1m1 0h3m1 0h7m3 0h4m1 0h2m3 0h2m1 0h1m4 0h1m1 0h3m1 0h1m1 0h4m3 0h2m1 0h2m1 0h2m2 0h3m1 0h2m2 0h2m3 0h3m2 0h1m1 0h1m67 0h1m5 0h2m14 0h1m8 0h1m2 0h1m1 0h2m2 0h2m1 0h1m1 0h4m1 0h2m2 0h9m2 0h1m2 0h3m1 0h1m3 0h7m2 0h1m2 0h4m1 0h1m1 0h2m3 0h2m3 0h6m1 0h4m1 0h2m1 0h2m1 0h2m1 0h1m2 0h12m2 0h1m7 0h1m5 0h1m4 0h1m10 0h1m11 0h1m4 0h1m3 0h2m1 0h1m1 0h4m1 0h5m1 0h9m1 0h2m1 0h1m2 0h1m4 0h2m1 0h3m1 0h4M2 92.5h11m1 0h4m1 0h2m3 0h2m2 0h3m1 0h4m1 0h2m2 0h2m1 0h1m2 0h4m2 0h2m2 0h5m1 0h4m2 0h4m1 0h4m3 0h4m2 0h1m1 0h1m6 0h2m1 0h2m1 0h3m23 0h1m5 0h1m6 0h1m14 0h1m1 0h1m14 0h1m9 0h1m11 0h1m8 0h1m1 0h12m1 0h1m1 0h1m1 0h3m1 0h1m1 0h2m2 0h9m1 0h1m1 0h3m4 0h4m5 0h5m2 0h1m1 0h1m1 0h1m1 0h4m1 0h7m2 0h3m1 0h8m1 0h2m1 0h1m2 0h4m1 0h1m2 0h1m1 0h1m7 0h1m11 0h1m5 0h1m12 0h1m2 0h1m6 0h1m3 0h3m1 0h3m1 0h7m1 0h5m1 0h4m1 0h2m1 0h2m1 0h1m3 0h6m1 0h2M2 93.5h1m3 0h13m2 0h2m1 0h1m1 0h2m1 0h5m1 0h1m1 0h2m1 0h2m1 0h3m1 0h2m1 0h1m2 0h2m1 0h2m1 0h2m2 0h7m2 0h2m1 0h2m1 0h1m1 0h1m1 0h1m2 0h1m1 0h1m1 0h2m2 0h1m2 0h1m1 0h2m1 0h2m1 0h1m9 0h1m40 0h3m5 0h1m37 0h1m6 0h2m5 0h8m1 0h3m1 0h2m1 0h3m1 0h6m2 0h1m3 0h5m2 0h1m1 0h1m1 0h1m3 0h1m1 0h4m3 0h3m1 0h1m1 0h4m1 0h1m6 0h2m1 0h2m7 0h1m1 0h5m1 0h2m8 0h1m3 0h2m7 0h1m6 0h1m13 0h1m1 0h1m4 0h1m4 0h2m2 0h6m2 0h2m1 0h2m2 0h1m1 0h3m1 0h1m1 0h5m2 0h1m2 0h5m1 0h5m1 0h1M4 94.5h5m1 0h4m1 0h5m1 0h1m1 0h17m1 0h7m1 0h2m3 0h4m2 0h2m2 0h1m1 0h5m1 0h1m1 0h1m1 0h1m4 0h2m2 0h1m2 0h2m1 0h1m1 0h2m1 0h1m1 0h5m1 0h1m46 0h1m14 0h1m12 0h1m9 0h1m16 0h10m1 0h7m1 0h1m1 0h1m1 0h2m2 0h4m3 0h5m3 0h1m2 0h2m1 0h1m1 0h1m4 0h1m1 0h1m1 0h5m1 0h1m1 0h3m1 0h5m1 0h1m1 0h2m1 0h2m3 0h2m2 0h2m3 0h1m1 0h5m1 0h4m1 0h4m3 0h1m1 0h2m5 0h1m3 0h1m6 0h1m3 0h1m10 0h1m5 0h1m1 0h1m4 0h4m1 0h1m2 0h4m1 0h4m2 0h1m3 0h3m1 0h3m1 0h1m1 0h2m1 0h6m1 0h2M3 95.5h5m1 0h1m1 0h1m4 0h2m2 0h2m1 0h1m1 0h1m1 0h2m1 0h4m1 0h1m1 0h4m1 0h2m5 0h2m1 0h6m1 0h2m1 0h1m3 0h1m1 0h1m1 0h1m1 0h1m1 0h5m1 0h1m1 0h2m2 0h3m2 0h1m3 0h4m1 0h1m2 0h1m4 0h1m1 0h1m11 0h1m31 0h3m31 0h1m17 0h5m1 0h1m2 0h1m2 0h4m1 0h1m1 0h2m2 0h2m1 0h7m1 0h1m2 0h4m2 0h3m2 0h3m2 0h7m1 0h7m2 0h3m2 0h3m4 0h1m3 0h2m1 0h7m1 0h2m1 0h2m1 0h2m8 0h1m3 0h1m3 0h1m1 0h1m13 0h1m7 0h1m4 0h1m8 0h15m1 0h5m1 0h3m2 0h4m2 0h1m3 0h2m1 0h6m1 0h1m1 0h2M1 96.5h1m2 0h1m1 0h1m2 0h6m2 0h3m1 0h2m1 0h6m1 0h4m1 0h1m1 0h3m1 0h4m1 0h4m2 0h3m1 0h6m4 0h3m1 0h2m1 0h8m1 0h1m3 0h3m1 0h1m1 0h3m1 0h2m2 0h4m8 0h1m6 0h1m25 0h1m2 0h1m19 0h1m6 0h1m7 0h1m1 0h1m19 0h6m1 0h7m1 0h1m2 0h2m5 0h1m1 0h7m1 0h2m1 0h2m1 0h4m4 0h4m1 0h2m1 0h1m2 0h3m1 0h3m3 0h2m2 0h7m5 0h2m1 0h3m1 0h1m1 0h1m3 0h1m2 0h6m7 0h1m11 0h1m2 0h1m16 0h1m9 0h1m1 0h7m1 0h1m1 0h8m3 0h5m1 0h2m1 0h1m3 0h2m4 0h2m1 0h2m1 0h1m1 0h3M0 97.5h2m1 0h1m1 0h3m1 0h5m2 0h1m1 0h1m1 0h1m1 0h2m2 0h1m2 0h2m1 0h5m2 0h4m1 0h2m1 0h1m1 0h2m1 0h3m3 0h2m2 0h1m2 0h4m4 0h4m2 0h1m1 0h2m4 0h3m2 0h1m3 0h1m1 0h1m2 0h1m1 0h2m11 0h1m41 0h1m23 0h1m9 0h1m14 0h1m1 0h1m2 0h3m8 0h9m2 0h2m1 0h1m1 0h1m2 0h1m1 0h1m2 0h3m1 0h1m2 0h1m1 0h1m1 0h1m1 0h7m1 0h4m2 0h3m1 0h4m1 0h1m1 0h1m1 0h1m1 0h5m1 0h1m2 0h1m4 0h5m1 0h2m1 0h1m3 0h1m6 0h3m3 0h1m2 0h1m1 0h1m27 0h1m3 0h1m1 0h3m1 0h6m1 0h5m1 0h1m1 0h3m1 0h22m1 0h2M4 98.5h1m2 0h2m2 0h1m1 0h1m1 0h5m1 0h1m1 0h1m1 0h1m2 0h1m1 0h1m1 0h2m1 0h7m1 0h8m2 0h3m1 0h2m3 0h1m1 0h3m1 0h3m3 0h1m1 0h1m1 0h6m1 0h1m3 0h1m2 0h1m5 0h4m1 0h2m49 0h3m1 0h1m27 0h1m18 0h1m1 0h3m2 0h2m1 0h2m2 0h4m1 0h4m3 0h1m1 0h6m1 0h1m4 0h1m5 0h1m1 0h2m2 0h1m1 0h1m1 0h1m1 0h2m1 0h2m1 0h6m2 0h1m2 0h1m1 0h3m1 0h1m1 0h2m2 0h2m2 0h2m1 0h2m4 0h9m4 0h2m2 0h2m10 0h1m1 0h1m5 0h1m22 0h6m1 0h7m1 0h2m2 0h8m2 0h14m1 0h1m1 0h5M2 99.5h1m3 0h2m1 0h5m1 0h9m1 0h1m2 0h1m1 0h4m2 0h2m2 0h1m1 0h2m3 0h4m1 0h3m1 0h1m1 0h1m1 0h1m1 0h1m6 0h1m1 0h1m7 0h1m1 0h2m2 0h1m2 0h2m2 0h2m3 0h1m1 0h2m2 0h3m8 0h1m31 0h1m20 0h1m8 0h1m9 0h1m19 0h7m2 0h1m1 0h2m2 0h1m1 0h4m2 0h1m1 0h1m1 0h1m1 0h1m1 0h1m4 0h1m1 0h2m3 0h2m1 0h1m2 0h2m2 0h2m3 0h2m4 0h1m1 0h4m1 0h1m1 0h2m1 0h4m1 0h4m1 0h3m1 0h2m2 0h1m1 0h1m1 0h4m4 0h1m1 0h2m7 0h2m10 0h2m2 0h1m6 0h1m6 0h1m8 0h2m2 0h3m2 0h4m2 0h2m1 0h3m2 0h2m1 0h6m1 0h2m1 0h2m2 0h5m3 0h3m2 0h1M2 100.5h4m1 0h1m1 0h5m1 0h1m1 0h1m1 0h3m1 0h1m1 0h2m2 0h2m1 0h5m1 0h2m1 0h2m1 0h1m1 0h5m2 0h1m1 0h4m6 0h2m1 0h1m3 0h4m1 0h5m4 0h3m1 0h1m1 0h1m1 0h2m1 0h1m1 0h2m2 0h1m1 0h1m7 0h1m4 0h1m3 0h1m24 0h1m7 0h1m3 0h1m16 0h1m2 0h1m14 0h2m12 0h2m1 0h2m6 0h1m1 0h1m1 0h1m2 0h1m1 0h1m2 0h2m2 0h6m2 0h3m1 0h1m2 0h2m1 0h2m3 0h1m2 0h5m1 0h2m1 0h1m1 0h2m2 0h3m2 0h2m1 0h2m2 0h2m1 0h2m1 0h1m2 0h1m1 0h2m1 0h2m2 0h2m2 0h1m1 0h3m3 0h1m7 0h1m2 0h1m4 0h1m2 0h1m28 0h2m1 0h8m1 0h2m3 0h1m1 0h1m1 0h3m1 0h3m1 0h3m4 0h3m1 0h1m1 0h2m1 0h4M2 101.5h1m1 0h2m1 0h3m1 0h4m1 0h1m5 0h1m1 0h3m2 0h3m1 0h1m1 0h1m1 0h5m3 0h5m1 0h1m1 0h1m1 0h2m1 0h2m2 0h1m1 0h2m1 0h1m3 0h1m3 0h2m1 0h1m1 0h2m2 0h1m2 0h1m2 0h1m6 0h1m2 0h1m2 0h1m4 0h1m15 0h1m12 0h1m41 0h1m3 0h1m20 0h1m3 0h4m2 0h1m2 0h13m3 0h2m1 0h1m2 0h1m1 0h2m1 0h3m3 0h1m2 0h1m1 0h4m1 0h2m3 0h3m1 0h3m3 0h1m2 0h1m2 0h2m2 0h2m1 0h3m1 0h3m1 0h3m5 0h4m17 0h1m5 0h1m2 0h1m7 0h1m16 0h2m1 0h1m2 0h1m1 0h7m2 0h1m1 0h1m3 0h2m1 0h2m2 0h2m3 0h2m1 0h3m1 0h8m2 0h1m1 0h3M3 102.5h1m1 0h2m1 0h2m4 0h2m1 0h1m2 0h1m1 0h2m1 0h1m2 0h2m1 0h2m1 0h12m1 0h3m4 0h1m4 0h1m1 0h1m2 0h4m2 0h2m2 0h4m1 0h1m1 0h1m1 0h1m5 0h1m1 0h3m6 0h2m1 0h1m1 0h1m1 0h1m25 0h1m23 0h1m17 0h1m8 0h1m2 0h1m19 0h8m4 0h2m1 0h2m1 0h2m1 0h2m1 0h1m4 0h1m3 0h3m1 0h2m2 0h1m2 0h2m1 0h2m1 0h1m2 0h2m2 0h1m3 0h2m1 0h2m2 0h2m3 0h3m1 0h1m4 0h2m1 0h1m1 0h2m2 0h5m2 0h3m1 0h1m3 0h1m8 0h2m29 0h1m8 0h2m1 0h3m1 0h7m1 0h3m1 0h4m1 0h1m2 0h6m1 0h5m1 0h2m2 0h1m1 0h1m1 0h2m1 0h1M2 103.5h5m3 0h1m1 0h1m1 0h5m1 0h4m1 0h1m2 0h3m2 0h5m1 0h3m1 0h6m1 0h1m1 0h3m1 0h1m2 0h2m1 0h2m1 0h3m1 0h2m1 0h5m3 0h2m1 0h2m3 0h3m1 0h5m1 0h1m1 0h4m13 0h1m22 0h2m5 0h1m6 0h1m9 0h1m22 0h1m3 0h1m17 0h1m1 0h3m1 0h4m1 0h4m1 0h1m1 0h1m2 0h1m1 0h2m2 0h3m1 0h1m1 0h1m1 0h4m1 0h3m1 0h7m2 0h1m2 0h1m1 0h1m1 0h2m2 0h5m2 0h1m1 0h1m1 0h4m2 0h4m1 0h1m2 0h3m1 0h3m1 0h2m1 0h2m6 0h1m5 0h2m5 0h1m5 0h1m19 0h2m7 0h1m1 0h1m1 0h3m3 0h1m1 0h4m2 0h4m1 0h4m1 0h2m1 0h8m1 0h9m1 0h1M4 104.5h5m1 0h3m1 0h3m2 0h3m1 0h1m2 0h1m1 0h7m1 0h6m1 0h2m1 0h1m1 0h1m4 0h1m1 0h1m2 0h1m1 0h2m4 0h3m2 0h4m1 0h1m4 0h1m1 0h1m1 0h1m2 0h2m1 0h1m1 0h1m1 0h2m2 0h6m1 0h1m4 0h1m38 0h1m57 0h2m1 0h1m2 0h1m1 0h2m2 0h2m1 0h2m2 0h1m1 0h2m1 0h1m1 0h3m2 0h1m1 0h1m2 0h1m1 0h2m3 0h1m3 0h2m3 0h4m1 0h1m1 0h1m2 0h2m3 0h5m3 0h2m6 0h1m2 0h1m2 0h2m2 0h1m1 0h2m1 0h8m5 0h1m3 0h1m13 0h1m24 0h2m1 0h5m1 0h5m1 0h2m1 0h3m1 0h4m1 0h2m4 0h1m2 0h3m1 0h3m2 0h6m1 0h1M1 105.5h1m1 0h1m1 0h1m2 0h1m1 0h3m1 0h4m4 0h2m1 0h1m2 0h1m2 0h3m1 0h4m1 0h6m1 0h1m2 0h1m1 0h3m1 0h3m2 0h1m1 0h1m1 0h1m1 0h3m2 0h4m1 0h6m1 0h3m3 0h1m1 0h1m1 0h2m1 0h4m1 0h3m46 0h1m4 0h3m30 0h1m17 0h2m2 0h1m2 0h4m1 0h1m1 0h1m1 0h1m1 0h3m1 0h1m2 0h1m1 0h1m1 0h2m3 0h3m1 0h4m1 0h1m1 0h1m1 0h3m3 0h1m1 0h1m1 0h3m1 0h2m1 0h6m2 0h1m1 0h1m2 0h4m1 0h1m1 0h4m1 0h2m1 0h3m2 0h1m2 0h4m1 0h3m1 0h1m43 0h1m2 0h1m1 0h4m1 0h8m1 0h2m1 0h7m1 0h5m1 0h1m1 0h1m2 0h3m2 0h1m1 0h5m1 0h2M4 106.5h1m1 0h1m1 0h1m2 0h5m2 0h3m1 0h3m1 0h1m1 0h2m1 0h2m2 0h3m1 0h2m1 0h2m1 0h2m2 0h1m2 0h2m1 0h2m1 0h3m2 0h4m1 0h7m5 0h2m2 0h6m1 0h1m2 0h1m3 0h7m46 0h1m31 0h1m3 0h1m2 0h1m2 0h1m15 0h3m1 0h3m3 0h1m1 0h1m2 0h3m6 0h1m2 0h3m1 0h4m1 0h3m2 0h1m2 0h2m1 0h2m1 0h1m1 0h1m1 0h2m1 0h1m1 0h1m2 0h1m1 0h5m1 0h2m1 0h1m3 0h4m1 0h4m1 0h1m2 0h1m1 0h1m3 0h1m4 0h4m2 0h1m21 0h1m1 0h1m15 0h1m6 0h1m1 0h1m1 0h1m3 0h4m1 0h4m1 0h1m1 0h2m1 0h3m3 0h3m3 0h1m3 0h2m2 0h1m1 0h2m1 0h2m1 0h2M2 107.5h1m2 0h2m1 0h1m1 0h5m2 0h2m3 0h2m2 0h2m1 0h4m2 0h4m1 0h2m1 0h2m1 0h2m1 0h2m1 0h20m1 0h2m3 0h1m1 0h1m2 0h2m1 0h1m1 0h1m1 0h2m2 0h2m2 0h6m8 0h1m4 0h1m15 0h3m14 0h1m5 0h1m19 0h1m2 0h1m26 0h4m2 0h1m1 0h2m1 0h1m3 0h2m2 0h3m1 0h2m1 0h1m2 0h2m3 0h1m2 0h7m1 0h1m2 0h4m1 0h1m1 0h1m1 0h2m4 0h1m1 0h1m3 0h1m4 0h3m1 0h2m1 0h1m1 0h2m3 0h5m1 0h4m1 0h2m1 0h2m1 0h1m2 0h1m3 0h1m5 0h1m27 0h1m12 0h1m1 0h3m1 0h3m1 0h1m1 0h2m1 0h1m3 0h1m1 0h5m1 0h2m1 0h2m1 0h2m2 0h1m1 0h2m1 0h1m2 0h2m1 0h3M1 108.5h1m2 0h5m1 0h9m1 0h5m1 0h4m1 0h8m2 0h8m1 0h1m1 0h2m1 0h1m2 0h1m5 0h1m2 0h3m4 0h6m3 0h1m4 0h2m1 0h1m1 0h2m2 0h1m1 0h1m1 0h3m52 0h1m1 0h2m20 0h2m6 0h1m17 0h1m2 0h1m3 0h5m5 0h1m1 0h1m2 0h2m2 0h1m2 0h2m3 0h1m3 0h1m4 0h3m2 0h1m1 0h1m1 0h2m2 0h2m1 0h1m1 0h10m1 0h1m2 0h1m1 0h3m4 0h1m1 0h2m2 0h5m1 0h1m1 0h3m1 0h2m1 0h4m7 0h1m2 0h1m4 0h1m9 0h1m10 0h1m13 0h5m2 0h8m3 0h3m1 0h3m1 0h4m1 0h4m1 0h8m1 0h1m3 0h2M2 109.5h1m1 0h1m3 0h5m4 0h1m1 0h6m1 0h4m1 0h3m2 0h3m1 0h2m1 0h4m1 0h2m1 0h2m1 0h1m1 0h1m1 0h2m2 0h3m1 0h1m1 0h3m1 0h1m1 0h1m3 0h1m2 0h1m1 0h1m3 0h2m3 0h1m2 0h2m1 0h1m1 0h2m2 0h1m1 0h1m48 0h2m51 0h2m4 0h4m1 0h1m4 0h1m1 0h6m1 0h2m1 0h1m2 0h3m2 0h3m1 0h2m1 0h1m2 0h2m2 0h1m2 0h2m2 0h1m4 0h1m1 0h1m5 0h1m2 0h1m2 0h1m2 0h1m4 0h3m3 0h1m2 0h1m2 0h3m2 0h1m2 0h1m3 0h2m4 0h1m2 0h1m8 0h1m3 0h1m14 0h1m5 0h1m4 0h3m1 0h1m1 0h3m1 0h2m1 0h2m2 0h1m1 0h1m1 0h1m1 0h1m3 0h1m2 0h6m2 0h3m2 0h1m2 0h6M1 110.5h2m5 0h3m1 0h3m1 0h1m1 0h10m2 0h3m1 0h6m1 0h9m1 0h4m1 0h1m1 0h2m1 0h1m2 0h1m3 0h2m2 0h1m1 0h2m3 0h1m1 0h1m1 0h1m2 0h4m2 0h1m1 0h1m2 0h1m1 0h4m8 0h1m4 0h1m33 0h1m4 0h2m12 0h1m5 0h1m6 0h1m3 0h1m20 0h4m1 0h2m2 0h5m1 0h1m2 0h1m1 0h2m2 0h2m1 0h1m6 0h5m1 0h2m1 0h2m2 0h3m1 0h1m1 0h6m1 0h1m1 0h1m1 0h1m1 0h3m2 0h1m4 0h3m2 0h2m1 0h3m2 0h4m2 0h6m1 0h3m7 0h1m4 0h1m38 0h1m1 0h2m1 0h1m2 0h1m1 0h8m1 0h5m1 0h2m1 0h4m1 0h6m2 0h3m1 0h3m1 0h1M2 111.5h1m1 0h3m3 0h2m1 0h2m2 0h1m2 0h4m1 0h2m2 0h1m1 0h1m1 0h1m1 0h10m1 0h3m3 0h2m1 0h2m2 0h1m1 0h1m5 0h3m3 0h4m4 0h1m1 0h1m2 0h1m1 0h1m3 0h4m1 0h1m1 0h3m1 0h1m48 0h1m4 0h1m9 0h1m19 0h1m20 0h1m3 0h1m1 0h1m3 0h3m1 0h3m3 0h1m3 0h5m2 0h2m3 0h1m4 0h3m2 0h3m1 0h2m1 0h1m1 0h4m2 0h6m4 0h3m1 0h1m1 0h1m1 0h1m2 0h1m1 0h7m1 0h1m5 0h1m1 0h5m12 0h2m15 0h1m22 0h2m1 0h2m1 0h3m1 0h6m1 0h4m1 0h2m1 0h1m2 0h9m1 0h3m1 0h2m1 0h1m2 0h3M3 112.5h3m2 0h2m2 0h4m1 0h3m1 0h1m2 0h1m1 0h2m1 0h1m1 0h4m1 0h1m2 0h8m2 0h2m3 0h1m2 0h3m2 0h1m3 0h1m1 0h1m3 0h2m2 0h3m1 0h1m1 0h1m3 0h1m5 0h3m3 0h4m1 0h2m50 0h1m2 0h1m6 0h1m11 0h1m28 0h7m2 0h4m3 0h5m1 0h1m1 0h4m2 0h3m1 0h2m3 0h1m2 0h1m1 0h1m3 0h1m1 0h3m1 0h1m1 0h3m4 0h2m1 0h1m2 0h1m1 0h2m1 0h3m1 0h1m2 0h4m1 0h5m2 0h1m2 0h3m1 0h2m1 0h1m1 0h2m1 0h1m4 0h1m4 0h1m4 0h2m4 0h1m2 0h1m5 0h1m20 0h7m3 0h4m2 0h1m2 0h1m1 0h7m1 0h5m1 0h1m1 0h1m1 0h8m3 0h1M0 113.5h1m7 0h1m3 0h2m1 0h10m1 0h1m1 0h6m1 0h1m1 0h10m1 0h2m3 0h1m1 0h3m1 0h1m2 0h2m1 0h3m1 0h4m2 0h1m3 0h2m1 0h2m7 0h1m1 0h1m1 0h1m1 0h5m1 0h2m25 0h2m24 0h1m9 0h1m18 0h1m21 0h3m2 0h2m3 0h1m2 0h1m3 0h1m3 0h2m3 0h2m1 0h2m1 0h2m1 0h2m2 0h1m2 0h3m4 0h8m1 0h2m2 0h2m1 0h3m2 0h1m2 0h1m2 0h3m3 0h5m2 0h1m2 0h3m1 0h4m3 0h3m1 0h1m1 0h1m9 0h1m2 0h1m2 0h1m9 0h1m19 0h2m2 0h8m1 0h1m1 0h1m5 0h3m1 0h1m1 0h5m1 0h1m3 0h1m2 0h4m2 0h2m1 0h5M2 114.5h1m2 0h11m1 0h1m1 0h6m2 0h1m1 0h2m2 0h6m1 0h6m1 0h2m2 0h1m1 0h2m2 0h2m3 0h2m3 0h3m2 0h1m6 0h1m2 0h1m4 0h1m1 0h1m3 0h1m4 0h3m1 0h2m1 0h1m51 0h1m20 0h1m16 0h1m7 0h1m3 0h2m1 0h2m1 0h1m2 0h2m3 0h2m1 0h2m3 0h1m2 0h1m1 0h1m1 0h3m2 0h1m3 0h1m4 0h2m5 0h3m3 0h1m2 0h1m2 0h2m2 0h4m2 0h1m1 0h1m1 0h1m1 0h2m3 0h4m2 0h2m1 0h7m1 0h5m4 0h2m4 0h1m42 0h2m1 0h4m1 0h2m4 0h2m2 0h9m1 0h2m2 0h1m1 0h3m1 0h2m1 0h1m1 0h1m1 0h3m1 0h2M1 115.5h1m1 0h3m1 0h4m1 0h7m1 0h1m3 0h1m1 0h2m1 0h2m1 0h3m1 0h1m3 0h6m4 0h1m2 0h1m1 0h2m1 0h3m1 0h1m3 0h1m2 0h2m1 0h1m1 0h2m2 0h1m1 0h2m1 0h1m3 0h3m2 0h1m1 0h2m3 0h4m1 0h1m6 0h1m19 0h1m22 0h2m1 0h1m11 0h1m12 0h1m23 0h4m1 0h3m5 0h2m1 0h3m1 0h1m1 0h6m3 0h2m2 0h1m3 0h1m2 0h4m2 0h1m1 0h11m1 0h2m3 0h3m3 0h3m1 0h1m4 0h7m1 0h4m2 0h1m3 0h1m1 0h3m1 0h1m3 0h1m4 0h2m4 0h1m25 0h1m1 0h1m7 0h1m1 0h3m2 0h1m1 0h6m2 0h1m1 0h1m1 0h2m2 0h5m1 0h1m2 0h3m2 0h5m1 0h1m2 0h3m1 0h1M0 116.5h4m2 0h4m1 0h6m1 0h3m1 0h2m1 0h4m1 0h1m1 0h1m1 0h4m1 0h4m3 0h1m1 0h3m2 0h1m1 0h4m3 0h1m2 0h4m1 0h3m4 0h1m2 0h1m2 0h1m2 0h2m7 0h1m2 0h1m1 0h5m17 0h1m12 0h1m66 0h1m4 0h1m2 0h2m1 0h2m1 0h2m4 0h1m2 0h2m1 0h2m1 0h1m1 0h5m2 0h2m1 0h1m1 0h6m4 0h1m3 0h1m1 0h2m1 0h2m1 0h5m1 0h1m1 0h2m3 0h4m1 0h1m1 0h1m2 0h1m1 0h1m2 0h1m1 0h10m3 0h3m1 0h1m2 0h3m1 0h1m24 0h1m18 0h2m3 0h1m1 0h5m2 0h8m1 0h2m1 0h1m1 0h4m1 0h1m1 0h2m1 0h6m2 0h1m1 0h3M1 117.5h1m1 0h5m1 0h5m2 0h2m1 0h15m3 0h1m1 0h1m3 0h8m2 0h1m1 0h2m1 0h2m1 0h1m3 0h2m1 0h2m2 0h2m1 0h2m1 0h1m1 0h3m1 0h3m1 0h3m1 0h1m1 0h2m3 0h3m1 0h2m29 0h1m34 0h1m10 0h1m25 0h1m1 0h2m1 0h5m3 0h1m2 0h2m3 0h1m1 0h1m1 0h3m2 0h3m6 0h1m1 0h1m2 0h2m2 0h1m3 0h2m1 0h1m2 0h2m2 0h2m1 0h2m2 0h2m2 0h3m3 0h1m3 0h3m2 0h1m1 0h3m1 0h1m3 0h1m1 0h2m1 0h2m1 0h1m1 0h1m1 0h3m6 0h1m2 0h1m36 0h1m1 0h2m1 0h2m1 0h4m2 0h6m2 0h2m2 0h1m1 0h3m3 0h1m1 0h3m1 0h1m1 0h3m1 0h1m1 0h2M1 118.5h1m2 0h2m1 0h1m1 0h4m1 0h3m2 0h12m1 0h5m1 0h5m2 0h2m2 0h1m2 0h6m2 0h1m3 0h1m4 0h1m1 0h4m1 0h3m3 0h1m6 0h2m3 0h2m2 0h4m1 0h2m2 0h1m8 0h1m38 0h2m52 0h1m1 0h1m2 0h3m4 0h3m2 0h1m1 0h2m1 0h1m1 0h1m2 0h3m2 0h1m4 0h6m2 0h9m2 0h1m5 0h3m6 0h1m1 0h1m8 0h9m2 0h2m1 0h9m4 0h1m6 0h1m6 0h1m10 0h1m4 0h1m13 0h2m1 0h4m2 0h4m1 0h1m2 0h1m11 0h1m1 0h3m1 0h2m1 0h2m1 0h3m1 0h3m1 0h1m1 0h2M2 119.5h10m3 0h5m1 0h6m2 0h1m1 0h3m1 0h1m1 0h2m1 0h11m1 0h1m3 0h4m1 0h3m2 0h1m1 0h2m3 0h2m2 0h1m1 0h6m1 0h5m7 0h4m1 0h2m35 0h1m35 0h1m29 0h3m2 0h2m1 0h1m1 0h3m2 0h1m1 0h2m2 0h1m2 0h1m2 0h5m3 0h1m11 0h1m3 0h2m3 0h2m4 0h2m4 0h1m6 0h1m1 0h1m1 0h3m1 0h2m1 0h2m1 0h4m1 0h1m2 0h1m4 0h1m2 0h2m4 0h1m10 0h1m7 0h1m16 0h1m10 0h6m1 0h3m1 0h2m7 0h2m2 0h2m2 0h8m5 0h1m1 0h9M1 120.5h2m2 0h3m3 0h3m1 0h4m1 0h6m4 0h1m1 0h3m2 0h2m1 0h3m2 0h6m1 0h2m1 0h8m3 0h2m4 0h3m5 0h3m2 0h3m1 0h1m2 0h1m4 0h2m1 0h1m1 0h1m1 0h1m19 0h1m31 0h1m1 0h1m35 0h1m11 0h1m1 0h2m1 0h1m4 0h1m3 0h2m2 0h1m5 0h3m2 0h2m1 0h3m1 0h1m1 0h6m1 0h1m3 0h3m1 0h1m1 0h5m1 0h2m2 0h1m1 0h1m1 0h2m2 0h1m1 0h3m1 0h1m1 0h3m1 0h1m1 0h3m1 0h1m1 0h5m1 0h4m1 0h2m1 0h1m7 0h1m12 0h1m1 0h1m5 0h1m3 0h2m15 0h4m2 0h7m1 0h3m1 0h5m2 0h1m1 0h2m1 0h3m1 0h2m3 0h3m1 0h6m1 0h3M1 121.5h1m1 0h2m3 0h2m1 0h3m1 0h3m2 0h4m1 0h2m2 0h9m1 0h1m1 0h4m1 0h5m2 0h6m3 0h4m3 0h1m1 0h2m2 0h1m1 0h1m3 0h1m1 0h1m4 0h3m1 0h2m4 0h1m2 0h1m1 0h1m2 0h1m5 0h1m8 0h1m42 0h2m20 0h1m7 0h1m13 0h5m2 0h1m2 0h5m4 0h1m1 0h1m1 0h2m1 0h4m4 0h1m2 0h1m1 0h2m1 0h2m1 0h2m2 0h2m1 0h2m1 0h1m2 0h3m1 0h2m2 0h1m2 0h1m3 0h1m1 0h2m2 0h3m2 0h1m2 0h1m1 0h1m2 0h1m1 0h1m1 0h4m1 0h1m1 0h2m3 0h2m4 0h1m5 0h1m14 0h2m14 0h1m3 0h1m2 0h8m1 0h1m1 0h1m7 0h4m1 0h4m2 0h2m2 0h1m2 0h2m1 0h3m2 0h1m1 0h3M2 122.5h1m1 0h12m1 0h1m1 0h1m4 0h6m1 0h10m2 0h4m1 0h3m2 0h1m1 0h1m1 0h2m1 0h1m1 0h2m1 0h3m1 0h1m2 0h1m1 0h3m1 0h5m7 0h1m4 0h1m3 0h1m1 0h1m1 0h1m36 0h1m14 0h1m3 0h1m15 0h1m31 0h2m3 0h4m5 0h4m1 0h3m1 0h1m1 0h2m2 0h3m1 0h1m2 0h1m4 0h2m4 0h1m2 0h2m2 0h1m1 0h2m6 0h2m5 0h6m2 0h1m2 0h1m2 0h4m1 0h2m3 0h1m1 0h3m1 0h6m2 0h1m16 0h1m9 0h1m17 0h1m6 0h1m2 0h1m1 0h1m1 0h4m3 0h1m1 0h2m3 0h1m1 0h2m1 0h2m1 0h2m1 0h1m1 0h1m4 0h5m3 0h1M1 123.5h1m1 0h4m1 0h1m4 0h2m1 0h1m1 0h1m3 0h2m1 0h2m1 0h6m3 0h3m1 0h10m1 0h2m1 0h4m7 0h1m1 0h2m2 0h1m1 0h2m1 0h2m3 0h1m1 0h1m1 0h1m2 0h1m4 0h2m2 0h4m1 0h1m1 0h1m10 0h1m15 0h2m17 0h2m2 0h2m17 0h1m32 0h1m2 0h1m3 0h2m1 0h1m2 0h5m1 0h1m1 0h1m3 0h1m2 0h4m2 0h2m1 0h1m6 0h1m2 0h1m1 0h1m1 0h1m3 0h4m2 0h3m2 0h2m1 0h1m1 0h1m2 0h1m5 0h2m2 0h1m1 0h8m5 0h2m1 0h1m1 0h2m1 0h2m6 0h1m10 0h1m6 0h1m12 0h1m9 0h1m2 0h9m2 0h2m1 0h1m1 0h6m2 0h1m1 0h2m1 0h2m1 0h1m3 0h2m1 0h1m1 0h2m2 0h1m1 0h2"/>
<path stroke="#008bff" d="M48 0.5h1m2 0h1m82 0h1m18 0h1m1 0h1m52 0h1m154 0h1M134 1.5h1m19 0h1m1 0h1m205 0h2M51 2.5h1m52 0h2m10 0h1m37 0h3m50 0h1m134 0h1m9 0h1m4 0h1M0 3.5h1m31 0h1m14 0h1m1 0h1m1 0h2m50 0h3m9 0h1m16 0h1m22 0h1m202 0h1m2 0h1m1 0h2M43 4.5h1m4 0h1m1 0h2m52 0h1m16 0h1m28 0h1m4 0h1m103 0h1m71 0h1m19 0h1m11 0h1M46 5.5h1m2 0h3m16 0h1m35 0h1m24 0h1m16 0h1m4 0h1m3 0h1m188 0h1m5 0h1m3 0h1m4 0h2m2 0h1m23 0h1M51 6.5h1m52 0h1m12 0h1m35 0h1m1 0h2m165 0h1m28 0h1m5 0h1m1 0h1m3 0h2m17 0h1M49 7.5h1m1 0h1m52 0h1m50 0h2m206 0h2M48 8.5h1m2 0h2m4 0h1m46 0h1m17 0h1m12 0h1m10 0h1m61 0h1m50 0h1m87 0h1m6 0h1m1 0h1m6 0h1m1 0h1M49 9.5h1m54 0h1m9 0h1m18 0h1m7 0h1m9 0h1m3 0h2m155 0h1m50 0h1m51 0h1M50 10.5h2m52 0h1m46 0h1m137 0h1m22 0h1m12 0h1m36 0h1M45 11.5h1m4 0h2m46 0h1m57 0h1m101 0h1m88 0h1m1 0h1m13 0h1M103 12.5h1m50 0h3m49 0h2m103 0h1m35 0h1m12 0h1m3 0h1M48 13.5h1m1 0h3m51 0h1m2 0h1m7 0h1m17 0h1m22 0h1m207 0h1M50 14.5h3m51 0h1m11 0h1m5 0h1m9 0h1m126 0h1m68 0h1m29 0h1m3 0h2M49 15.5h1m1 0h2m81 0h2m9 0h1m1 0h2m6 0h2m89 0h1m64 0h1m11 0h1m23 0h1m13 0h1m1 0h1M51 16.5h2m46 0h1m53 0h1m1 0h2m205 0h2M46 17.5h1m1 0h1m1 0h2m52 0h1m30 0h1m14 0h1m5 0h1m155 0h1m40 0h1m2 0h1m5 0h2M104 18.5h1m12 0h1m6 0h1m7 0h1m1 0h1m19 0h2m50 0h1m105 0h1m2 0h1m12 0h1m17 0h1m5 0h1m3 0h1m1 0h1m4 0h1M36 19.5h1m12 0h1m1 0h2m51 0h1m5 0h1m41 0h1m1 0h1m104 0h1m83 0h1m19 0h2m50 0h1M47 20.5h2m1 0h2m52 0h1m4 0h1m21 0h1m3 0h1m216 0h1m10 0h2m9 0h1M51 21.5h2m51 0h1m15 0h1m14 0h1m4 0h1m6 0h1m7 0h1m161 0h1m20 0h1m3 0h1m9 0h1m5 0h1m4 0h1M42 22.5h1m8 0h1m64 0h1m24 0h1m14 0h1m180 0h1m13 0h1m1 0h1m6 0h1m3 0h1M51 23.5h2m50 0h2m6 0h1m3 0h1m24 0h1m8 0h1m3 0h3m103 0h1m83 0h1m8 0h1m3 0h1m1 0h2m3 0h2M104 24.5h1m5 0h1m14 0h1m9 0h1m18 0h1m1 0h1m59 0h1m70 0h1m45 0h2m7 0h2m12 0h1m5 0h1m52 0h1M34 25.5h1m9 0h1m6 0h1m52 0h1m9 0h1m17 0h1m2 0h1m4 0h1m8 0h1m4 0h1m157 0h1m29 0h1m8 0h2m11 0h1M50 26.5h2m52 0h1m15 0h1m32 0h1m2 0h1m9 0h1m40 0h2m138 0h1m11 0h1m2 0h4M49 27.5h1m1 0h1m52 0h1m8 0h1m4 0h1m5 0h1m7 0h1m20 0h1m1 0h1m167 0h1m29 0h1m2 0h2m1 0h1M50 28.5h2m51 0h2m2 0h1m2 0h1m1 0h1m7 0h1m3 0h1m13 0h1m2 0h1m4 0h1m4 0h1m3 0h1m50 0h1m128 0h1m8 0h1m7 0h1m1 0h1m1 0h1m1 0h1m1 0h5m50 0h1M51 29.5h1m52 0h1m8 0h1m4 0h1m4 0h1m11 0h1m5 0h1m8 0h1m4 0h2m50 0h1m129 0h1m5 0h1m9 0h1m4 0h1m1 0h2m1 0h2M51 30.5h1m52 0h2m2 0h1m1 0h1m19 0h1m2 0h1m6 0h2m7 0h1m3 0h4m31 0h1m172 0h2m1 0h1M104 31.5h1m5 0h1m27 0h1m6 0h1m2 0h1m3 0h2m1 0h2m9 0h1m39 0h1m131 0h1m8 0h1m1 0h1m2 0h3m4 0h1m1 0h1m1 0h2m27 0h1M51 32.5h1m52 0h1m5 0h2m21 0h2m17 0h1m3 0h1m180 0h1m14 0h1m3 0h1m1 0h1m2 0h1m1 0h2m38 0h1M43 33.5h1m7 0h1m53 0h1m11 0h1m19 0h1m3 0h1m6 0h1m2 0h1m2 0h1m170 0h1m13 0h1m1 0h1m2 0h1m7 0h1m1 0h1m4 0h1m1 0h1m1 0h1M47 34.5h2m2 0h1m54 0h1m23 0h2m8 0h1m7 0h1m2 0h1m1 0h1m2 0h1m179 0h1m5 0h3m7 0h1m1 0h1m3 0h1m1 0h1m1 0h1m1 0h1M47 35.5h1m3 0h1m52 0h1m2 0h1m1 0h1m9 0h1m13 0h1m13 0h1m2 0h1m1 0h1m2 0h1m183 0h1m6 0h1m6 0h1m2 0h2m2 0h1m1 0h1M47 36.5h1m2 0h2m50 0h1m1 0h1m2 0h1m11 0h1m7 0h1m6 0h1m2 0h1m4 0h1m4 0h1m1 0h1m1 0h1m3 0h2m1 0h1m171 0h2m10 0h1m4 0h1m5 0h1m1 0h1m3 0h1m4 0h1m43 0h1M45 37.5h1m5 0h1m52 0h2m8 0h1m2 0h1m2 0h1m13 0h1m6 0h1m7 0h1m5 0h1m17 0h1m81 0h1m79 0h1m6 0h1m9 0h3m3 0h1m1 0h1m1 0h1M29 38.5h1m20 0h2m52 0h1m5 0h1m8 0h1m6 0h1m1 0h1m2 0h1m1 0h1m5 0h1m1 0h1m6 0h1m1 0h1m4 0h1m3 0h1m47 0h1m103 0h1m15 0h1m1 0h1m6 0h1m6 0h1m8 0h2m1 0h1m2 0h8M47 39.5h1m3 0h1m52 0h2m11 0h1m10 0h1m2 0h2m12 0h1m2 0h1m5 0h2m85 0h1m83 0h1m17 0h1m11 0h2m1 0h1m2 0h2m2 0h1M50 40.5h2m57 0h1m1 0h1m2 0h1m9 0h1m6 0h1m6 0h1m7 0h3m1 0h3m2 0h2m155 0h1m12 0h1m9 0h1m6 0h1m5 0h1m4 0h1m2 0h1M50 41.5h1m53 0h3m4 0h2m2 0h3m4 0h1m8 0h1m13 0h1m6 0h4m77 0h1m91 0h1m7 0h1m9 0h1m7 0h1m2 0h1m4 0h1m2 0h2M46 42.5h1m2 0h2m53 0h1m6 0h1m12 0h1m10 0h1m3 0h1m4 0h1m1 0h1m3 0h1m1 0h1m1 0h2m179 0h1m8 0h1m2 0h1m4 0h1m2 0h1m1 0h1m2 0h5M51 43.5h1m46 0h1m5 0h1m17 0h1m1 0h1m9 0h1m4 0h1m1 0h1m6 0h1m1 0h2m1 0h4m50 0h1m108 0h1m8 0h1m8 0h1m7 0h1m3 0h1m6 0h2m1 0h2m3 0h1M40 44.5h1m10 0h1m52 0h1m17 0h1m7 0h1m2 0h1m1 0h1m10 0h1m1 0h3m1 0h3m160 0h1m15 0h1m3 0h2m15 0h2m1 0h1m4 0h3m1 0h1M48 45.5h1m2 0h1m52 0h1m9 0h1m2 0h2m11 0h1m3 0h2m3 0h1m1 0h1m3 0h2m1 0h1m3 0h2m1 0h1m21 0h1m29 0h1m33 0h1m89 0h1m6 0h1m3 0h1m4 0h1m6 0h1m2 0h4m1 0h3m38 0h1M47 46.5h1m1 0h1m67 0h1m10 0h1m1 0h2m2 0h2m3 0h1m5 0h2m1 0h7m1 0h1m2 0h1m189 0h1m2 0h1m1 0h1m1 0h1m3 0h2m1 0h1M46 47.5h2m2 0h2m52 0h1m6 0h1m10 0h1m5 0h1m2 0h1m2 0h1m5 0h2m2 0h1m6 0h3m1 0h2m159 0h1m6 0h1m2 0h1m25 0h1m2 0h3m1 0h6M51 48.5h1m3 0h1m48 0h2m20 0h1m2 0h1m2 0h1m2 0h1m4 0h1m3 0h1m1 0h1m1 0h1m3 0h5m50 0h1m72 0h1m32 0h1m9 0h1m10 0h2m4 0h1m3 0h1m1 0h1m6 0h1m2 0h1m1 0h3m1 0h1M29 49.5h1m15 0h1m66 0h1m11 0h2m4 0h1m3 0h1m4 0h1m1 0h4m1 0h2m1 0h4m158 0h2m12 0h1m17 0h1m5 0h1m2 0h1m1 0h1m2 0h4m3 0h1M21 50.5h1m26 0h1m55 0h1m19 0h1m12 0h2m5 0h6m1 0h6m176 0h1m12 0h1m1 0h1m4 0h1m1 0h4m1 0h3m1 0h1m17 0h1m32 0h1M104 51.5h1m13 0h1m12 0h1m3 0h1m1 0h1m9 0h1m1 0h1m3 0h2m1 0h1m14 0h1m158 0h2m4 0h1m9 0h2m2 0h1m6 0h3m1 0h2M49 52.5h1m1 0h2m51 0h1m3 0h1m1 0h1m4 0h1m7 0h1m5 0h2m12 0h1m2 0h1m1 0h2m1 0h1m2 0h2m155 0h1m11 0h1m4 0h2m6 0h1m1 0h2m5 0h1m3 0h2m2 0h1m2 0h1m1 0h2m1 0h2m1 0h1M46 53.5h1m3 0h1m55 0h2m6 0h1m2 0h1m1 0h1m3 0h1m4 0h2m5 0h1m2 0h1m4 0h1m1 0h1m2 0h1m1 0h1m160 0h2m3 0h1m10 0h1m14 0h1m3 0h1m2 0h2m1 0h2m1 0h4m1 0h1m3 0h1M26 54.5h1m19 0h3m55 0h1m1 0h1m3 0h1m2 0h1m6 0h1m1 0h1m9 0h1m1 0h1m1 0h1m3 0h2m7 0h1m1 0h1m1 0h2m1 0h2m45 0h1m56 0h1m69 0h1m4 0h1m9 0h3m4 0h2m2 0h1m2 0h3m1 0h1m1 0h1m33 0h1m15 0h1M20 55.5h1m29 0h1m53 0h1m7 0h1m1 0h1m1 0h1m5 0h1m2 0h1m8 0h2m1 0h4m1 0h1m1 0h1m1 0h1m1 0h1m2 0h1m1 0h2m35 0h1m16 0h1m51 0h1m72 0h1m3 0h1m5 0h1m2 0h2m1 0h1m7 0h3m1 0h1m1 0h1m1 0h2m6 0h2m41 0h1M46 56.5h1m3 0h3m51 0h2m2 0h1m1 0h1m4 0h1m11 0h1m2 0h2m2 0h2m1 0h2m1 0h2m2 0h1m1 0h1m2 0h3m1 0h2m1 0h1m156 0h1m8 0h1m1 0h1m10 0h2m1 0h2m2 0h2m2 0h2m1 0h2m1 0h1m2 0h2m1 0h3m1 0h1m1 0h1m37 0h1M51 57.5h1m53 0h1m10 0h1m4 0h1m1 0h1m8 0h1m2 0h2m2 0h1m1 0h1m4 0h1m4 0h1m1 0h2m1 0h1m49 0h1m2 0h1m49 0h1m64 0h1m1 0h1m1 0h1m5 0h1m1 0h1m2 0h1m1 0h2m1 0h1m1 0h1m1 0h1m2 0h3m2 0h1m1 0h2m1 0h1m2 0h1M28 58.5h1m2 0h1m17 0h1m16 0h1m36 0h1m1 0h1m1 0h1m5 0h1m1 0h1m5 0h2m1 0h1m1 0h1m13 0h2m2 0h1m1 0h1m1 0h4m1 0h2m1 0h2m24 0h1m76 0h1m52 0h1m7 0h1m1 0h1m5 0h1m6 0h1m2 0h1m3 0h1m4 0h1m1 0h1m1 0h5m1 0h2m2 0h2m1 0h1m43 0h1m5 0h1M47 59.5h1m2 0h2m17 0h1m45 0h1m3 0h1m1 0h1m3 0h1m2 0h2m1 0h1m1 0h1m4 0h1m1 0h3m1 0h2m1 0h3m1 0h2m1 0h1m1 0h1m50 0h1m105 0h1m2 0h1m2 0h1m3 0h1m4 0h1m3 0h1m6 0h2m6 0h2m4 0h1m3 0h1m1 0h4m1 0h1m27 0h1m16 0h1M35 60.5h1m11 0h1m2 0h2m51 0h2m1 0h2m1 0h2m1 0h1m7 0h1m1 0h2m4 0h2m1 0h1m1 0h1m1 0h6m3 0h1m1 0h1m1 0h7m2 0h1m7 0h1m16 0h1m24 0h1m30 0h1m25 0h1m47 0h2m1 0h2m2 0h1m3 0h1m3 0h2m13 0h1m1 0h1m1 0h1m5 0h2m2 0h1m1 0h2m2 0h1m1 0h1m32 0h1m16 0h1M0 61.5h2m16 0h2m1 0h1m3 0h2m2 0h3m2 0h1m1 0h3m1 0h2m2 0h3m1 0h2m2 0h1m3 0h1m1 0h1m3 0h1m7 0h1m5 0h2m1 0h1m2 0h1m2 0h1m2 0h1m9 0h4m4 0h1m1 0h4m1 0h2m2 0h2m1 0h7m1 0h3m2 0h1m5 0h5m3 0h1m2 0h1m1 0h1m3 0h3m1 0h4m11 0h1m1 0h1m4 0h2m1 0h1m1 0h1m3 0h2m6 0h2m1 0h2m1 0h3m7 0h1m4 0h1m3 0h2m4 0h1m1 0h1m6 0h1m1 0h1m1 0h1m6 0h1m3 0h2m1 0h4m8 0h1m2 0h1m7 0h1m2 0h3m1 0h1m6 0h1m6 0h1m3 0h2m3 0h3m2 0h3m2 0h1m1 0h4m1 0h2m1 0h3m1 0h1m1 0h6m3 0h3m1 0h2m3 0h2m2 0h1m2 0h1m2 0h3m2 0h1m1 0h2m1 0h3m1 0h1m3 0h1m1 0h4m2 0h1m6 0h7m4 0h3m3 0h1M2 62.5h1m3 0h1m4 0h3m1 0h1m3 0h1m1 0h2m2 0h1m2 0h7m1 0h9m3 0h2m3 0h3m1 0h2m2 0h4m1 0h3m1 0h3m3 0h1m1 0h4m1 0h1m1 0h4m1 0h1m1 0h2m1 0h3m2 0h1m1 0h3m27 0h1m21 0h5m4 0h1m16 0h1m6 0h1m15 0h1m2 0h2m1 0h8m2 0h2m1 0h2m2 0h1m1 0h1m3 0h3m1 0h2m4 0h4m1 0h4m1 0h1m1 0h2m1 0h2m1 0h6m1 0h3m1 0h5m1 0h1m1 0h3m1 0h3m1 0h4m1 0h3m1 0h1m1 0h1m1 0h1m3 0h2m1 0h4m1 0h1m1 0h1m1 0h2m5 0h2m4 0h1m34 0h1m1 0h1m1 0h10m1 0h4m2 0h5m2 0h3m1 0h4m1 0h2m1 0h4m1 0h3m1 0h1M0 63.5h1m6 0h2m1 0h4m2 0h1m2 0h1m2 0h2m1 0h7m2 0h1m6 0h1m2 0h1m2 0h1m1 0h2m1 0h1m4 0h1m8 0h1m8 0h1m4 0h1m9 0h1m3 0h1m7 0h2m104 0h2m6 0h1m2 0h1m1 0h1m5 0h1m7 0h1m5 0h1m1 0h1m4 0h1m4 0h1m4 0h3m7 0h1m7 0h1m22 0h2m1 0h1m7 0h2m53 0h1m1 0h3m2 0h4m5 0h1m1 0h1m4 0h1m4 0h1m2 0h3m6 0h2m8 0h1M0 64.5h7m3 0h2m1 0h2m2 0h2m4 0h4m5 0h1m1 0h2m10 0h2m2 0h1m1 0h1m3 0h1m10 0h1m1 0h2m4 0h1m8 0h1m3 0h1m11 0h1m2 0h1m104 0h1m1 0h1m2 0h1m4 0h1m8 0h1m2 0h1m8 0h1m2 0h1m2 0h1m4 0h1m4 0h2m1 0h5m1 0h1m3 0h1m1 0h1m1 0h1m3 0h1m10 0h1m5 0h1m2 0h1m7 0h1m2 0h1m1 0h4m51 0h2m8 0h2m1 0h1m9 0h1m1 0h1m2 0h2m5 0h1m2 0h1m5 0h4m3 0h1M1 65.5h4m2 0h1m3 0h2m1 0h1m1 0h2m2 0h2m2 0h1m1 0h1m1 0h1m1 0h1m9 0h1m1 0h1m2 0h1m4 0h1m18 0h1m1 0h2m15 0h1m9 0h1m115 0h1m3 0h1m3 0h1m10 0h1m1 0h1m1 0h2m3 0h1m1 0h1m3 0h1m3 0h1m1 0h2m2 0h3m4 0h1m10 0h1m7 0h1m2 0h1m9 0h1m65 0h3m1 0h3m1 0h3m13 0h1m1 0h1m13 0h1m10 0h1M0 66.5h1m1 0h1m2 0h2m2 0h2m1 0h1m3 0h3m1 0h1m2 0h1m3 0h3m5 0h2m6 0h1m3 0h1m2 0h1m1 0h1m3 0h1m12 0h1m13 0h1m14 0h1m57 0h1m51 0h1m1 0h1m6 0h1m3 0h1m1 0h1m26 0h2m2 0h2m2 0h3m5 0h1m2 0h1m24 0h1m5 0h2m9 0h1m52 0h2m2 0h1m4 0h1m2 0h1m8 0h1m4 0h3M1 67.5h2m2 0h3m1 0h1m2 0h5m3 0h1m4 0h1m1 0h2m1 0h1m2 0h4m5 0h1m1 0h3m2 0h3m52 0h1m51 0h1m50 0h2m12 0h1m19 0h1m8 0h1m8 0h2m29 0h1m5 0h1m3 0h1m3 0h1m6 0h1m53 0h1m3 0h1m40 0h1M0 68.5h4m2 0h2m2 0h1m4 0h3m1 0h1m10 0h1m2 0h1m1 0h2m4 0h1m1 0h1m5 0h4m16 0h1m11 0h1m21 0h1m52 0h1m52 0h1m3 0h1m2 0h1m4 0h1m4 0h1m17 0h1m3 0h1m5 0h1m4 0h3m1 0h1m5 0h1m1 0h1m4 0h2m1 0h2m15 0h1m8 0h2m4 0h1m52 0h2m2 0h1m5 0h1m2 0h1m10 0h1m1 0h1m3 0h1m14 0h1M0 69.5h4m1 0h2m1 0h1m3 0h1m2 0h1m1 0h2m3 0h1m8 0h1m5 0h1m2 0h1m3 0h1m5 0h3m5 0h1m148 0h3m2 0h1m1 0h2m20 0h1m10 0h1m1 0h2m3 0h2m2 0h1m1 0h1m11 0h1m7 0h1m15 0h1m1 0h1m8 0h1m2 0h2m53 0h1m4 0h1m2 0h1m8 0h1m5 0h1m10 0h1m2 0h1m1 0h2m9 0h1M1 70.5h4m1 0h2m1 0h1m1 0h2m5 0h1m1 0h1m3 0h1m2 0h1m1 0h1m4 0h1m10 0h1m22 0h1m1 0h1m11 0h1m125 0h1m2 0h1m21 0h1m1 0h1m15 0h1m7 0h2m2 0h1m6 0h1m4 0h1m8 0h2m2 0h1m8 0h1m2 0h1m10 0h1m52 0h2m6 0h2m30 0h1m1 0h1M0 71.5h3m1 0h1m3 0h2m3 0h1m1 0h1m3 0h1m1 0h1m4 0h3m2 0h1m1 0h1m6 0h3m4 0h2m2 0h2m7 0h1m2 0h1m35 0h1m107 0h1m15 0h1m13 0h1m3 0h1m7 0h2m4 0h1m2 0h1m1 0h1m2 0h1m7 0h1m12 0h1m7 0h1m3 0h1m13 0h2m52 0h1m4 0h1m4 0h1m9 0h1M0 72.5h3m3 0h3m4 0h2m6 0h2m3 0h1m1 0h1m1 0h1m19 0h2m13 0h1m33 0h1m108 0h1m3 0h2m2 0h1m4 0h1m25 0h1m10 0h3m9 0h1m9 0h1m11 0h2m2 0h1m14 0h1m52 0h3m1 0h1m22 0h1m3 0h1m19 0h1M2 73.5h6m4 0h4m5 0h2m1 0h3m2 0h2m2 0h1m2 0h2m6 0h1m1 0h1m3 0h1m38 0h1m119 0h1m21 0h1m26 0h2m2 0h1m23 0h1m24 0h1m52 0h1m5 0h1m11 0h1m22 0h1m8 0h2M1 74.5h1m1 0h3m3 0h1m1 0h2m1 0h1m3 0h4m3 0h1m17 0h1m2 0h1m1 0h4m23 0h1m27 0h1m115 0h1m11 0h2m9 0h1m16 0h3m2 0h1m31 0h1m14 0h1m57 0h1m2 0h1m1 0h1m1 0h1m3 0h1m1 0h1m19 0h1m12 0h1M0 75.5h2m1 0h1m3 0h4m3 0h1m6 0h1m1 0h1m4 0h2m16 0h1m2 0h1m1 0h1m5 0h1m36 0h1m113 0h1m20 0h1m6 0h1m2 0h1m3 0h1m15 0h2m3 0h2m2 0h1m36 0h1m5 0h1m52 0h2m10 0h1m5 0h1m6 0h1m1 0h1m15 0h1M2 76.5h4m7 0h1m2 0h3m1 0h3m1 0h2m5 0h1m11 0h2m4 0h4m27 0h1m129 0h1m2 0h1m12 0h1m6 0h2m23 0h1m1 0h1m4 0h1m7 0h1m1 0h1m22 0h3m2 0h1m6 0h2m52 0h1m1 0h1m6 0h1m1 0h1m9 0h2m10 0h2M0 77.5h1m3 0h1m7 0h1m1 0h1m3 0h1m1 0h3m1 0h1m2 0h2m1 0h2m5 0h1m5 0h3m1 0h1m1 0h2m1 0h1m167 0h3m1 0h1m7 0h1m4 0h1m3 0h1m13 0h1m2 0h1m4 0h1m5 0h1m42 0h1m52 0h2m1 0h1m17 0h1m3 0h1m3 0h2m11 0h1M2 78.5h1m3 0h1m6 0h3m2 0h1m1 0h2m6 0h1m1 0h1m4 0h2m6 0h1m3 0h2m2 0h2m47 0h1m2 0h1m104 0h1m4 0h1m15 0h1m25 0h1m4 0h1m8 0h1m11 0h1m3 0h1m24 0h2m54 0h1m10 0h1m6 0h1m1 0h1m12 0h1m8 0h1M0 79.5h1m1 0h4m1 0h1m1 0h1m3 0h1m1 0h1m1 0h1m2 0h1m5 0h1m1 0h2m1 0h1m4 0h1m2 0h2m2 0h1m3 0h1m2 0h3m15 0h1m180 0h1m8 0h4m36 0h1m1 0h1m3 0h1m1 0h1m4 0h1m57 0h1m13 0h1m5 0h1m25 0h1M1 80.5h1m2 0h3m3 0h2m1 0h4m1 0h1m4 0h1m1 0h2m2 0h4m10 0h1m6 0h3m156 0h1m4 0h1m44 0h2m4 0h1m7 0h1m29 0h1m3 0h1m3 0h1m52 0h1m23 0h1M0 81.5h3m2 0h2m1 0h2m5 0h1m1 0h1m3 0h1m7 0h1m15 0h2m4 0h1m7 0h1m7 0h1m6 0h1m156 0h1m1 0h1m6 0h1m1 0h1m16 0h2m3 0h1m9 0h1m18 0h1m18 0h1m51 0h1M0 82.5h5m2 0h2m5 0h2m9 0h1m1 0h2m1 0h1m4 0h1m7 0h1m1 0h1m1 0h1m3 0h1m16 0h1m143 0h1m4 0h1m2 0h1m1 0h1m23 0h1m50 0h1m4 0h2m7 0h2m53 0h1m7 0h1m10 0h1M0 83.5h2m2 0h2m2 0h1m1 0h1m2 0h1m4 0h1m1 0h2m1 0h3m3 0h1m2 0h1m2 0h1m3 0h1m8 0h1m2 0h1m13 0h1m33 0h1m3 0h1m104 0h1m22 0h1m1 0h1m2 0h1m1 0h1m21 0h1m37 0h1m2 0h1m7 0h1m1 0h1m56 0h1m1 0h1m20 0h1m3 0h1m6 0h1m7 0h1M2 84.5h1m7 0h1m1 0h3m2 0h1m2 0h5m8 0h1m2 0h1m11 0h1m2 0h1m13 0h1m37 0h1m104 0h1m11 0h1m21 0h1m15 0h4m6 0h1m21 0h1m18 0h1m1 0h1m53 0h1m43 0h1M4 85.5h2m2 0h2m2 0h1m1 0h3m2 0h1m2 0h2m3 0h1m2 0h4m10 0h1m2 0h1m2 0h4m3 0h1m1 0h1m147 0h1m5 0h1m13 0h1m13 0h1m7 0h1m13 0h1m16 0h1m83 0h1m4 0h1m7 0h1m4 0h1M0 86.5h1m1 0h3m1 0h1m2 0h1m1 0h2m2 0h1m1 0h1m4 0h1m2 0h1m5 0h1m1 0h2m11 0h1m2 0h4m21 0h1m2 0h1m130 0h1m14 0h1m36 0h1m1 0h2m5 0h1m1 0h1m2 0h1m6 0h1m16 0h1m11 0h2m52 0h2m7 0h2m20 0h1m1 0h1m6 0h1m5 0h1m4 0h1M0 87.5h2m4 0h1m6 0h2m13 0h1m10 0h2m4 0h1m4 0h3m49 0h1m116 0h1m3 0h1m6 0h1m32 0h1m47 0h1m52 0h1m7 0h1m9 0h1m8 0h1m17 0h1M0 88.5h2m6 0h1m5 0h1m5 0h1m4 0h1m13 0h1m5 0h1m5 0h1m13 0h1m3 0h1m142 0h2m8 0h1m35 0h1m1 0h1m49 0h2m65 0h1m1 0h1m4 0h1m7 0h1m1 0h1m3 0h1m1 0h1m2 0h1M0 89.5h1m3 0h5m7 0h1m7 0h1m1 0h1m2 0h3m3 0h2m8 0h1m4 0h1m1 0h1m9 0h1m146 0h1m18 0h1m26 0h1m3 0h2m3 0h1m99 0h1m30 0h1m9 0h1m2 0h1M0 90.5h1m1 0h1m5 0h2m4 0h4m3 0h2m19 0h1m1 0h2m2 0h1m1 0h3m50 0h1m105 0h1m23 0h1m4 0h1m20 0h3m10 0h1m15 0h1m8 0h1m66 0h1m10 0h1m12 0h1m3 0h1m6 0h1M0 91.5h1m1 0h1m1 0h1m2 0h1m2 0h2m1 0h3m4 0h1m3 0h2m1 0h1m3 0h1m7 0h1m6 0h1m2 0h3m104 0h1m51 0h1m3 0h1m31 0h1m14 0h2m103 0h2m16 0h1m9 0h1m5 0h1m4 0h1m6 0h1m4 0h1M0 92.5h2m11 0h1m4 0h1m2 0h1m1 0h1m3 0h1m3 0h1m4 0h1m2 0h1m5 0h2m5 0h1m45 0h1m129 0h1m2 0h2m9 0h1m8 0h1m5 0h1m1 0h2m10 0h1m19 0h1m19 0h1m52 0h2m1 0h2m4 0h1m11 0h1M0 93.5h2m1 0h3m13 0h2m2 0h1m1 0h1m8 0h1m7 0h1m3 0h1m2 0h1m2 0h1m2 0h1m25 0h1m21 0h1m137 0h1m17 0h3m24 0h1m9 0h1m14 0h1m52 0h1m2 0h1m11 0h1m5 0h1m11 0h1M1 94.5h3m5 0h1m4 0h1m5 0h1m1 0h1m28 0h3m49 0h1m153 0h4m1 0h1m29 0h1m3 0h1m67 0h1m3 0h1m5 0h1m1 0h1m38 0h1M0 95.5h3m5 0h1m1 0h1m1 0h4m2 0h1m5 0h1m4 0h1m4 0h1m11 0h2m3 0h1m170 0h1m35 0h1m52 0h1m52 0h1m34 0h1m11 0h1M2 96.5h2m1 0h1m1 0h2m6 0h2m3 0h1m2 0h1m6 0h1m4 0h1m10 0h1m4 0h2m10 0h1m2 0h1m192 0h1m46 0h1m57 0h1m7 0h1m21 0h1M2 97.5h1m1 0h1m3 0h1m5 0h2m1 0h1m6 0h2m1 0h2m8 0h1m13 0h1m156 0h1m2 0h1m21 0h1m21 0h1m3 0h1m51 0h1m52 0h2m1 0h1m10 0h1m7 0h1m3 0h1M0 98.5h4m1 0h2m2 0h2m1 0h1m1 0h1m5 0h1m1 0h1m1 0h1m1 0h2m1 0h1m1 0h1m2 0h1m7 0h1m8 0h2m158 0h1m2 0h1m14 0h1m9 0h1m18 0h1m1 0h1m1 0h1m18 0h1m12 0h1m69 0h1m17 0h1m10 0h1m14 0h1M0 99.5h2m1 0h3m2 0h1m5 0h1m9 0h1m1 0h2m1 0h1m5 0h1m10 0h1m4 0h1m11 0h1m149 0h1m44 0h1m2 0h1m48 0h2m53 0h1m3 0h1m27 0h1m10 0h1M6 100.5h1m7 0h1m1 0h1m1 0h1m3 0h1m1 0h1m2 0h2m2 0h1m20 0h1m195 0h1m8 0h1m1 0h2m8 0h1m1 0h1m8 0h1m30 0h1m52 0h2m2 0h1m8 0h1m6 0h1m9 0h1m3 0h1m11 0h1M0 101.5h2m1 0h1m2 0h1m3 0h1m4 0h1m1 0h5m1 0h1m3 0h2m13 0h1m1 0h1m7 0h1m4 0h1m10 0h1m147 0h1m37 0h1m4 0h1m3 0h1m9 0h1m6 0h1m20 0h1m7 0h1m1 0h1m52 0h1m1 0h1m7 0h2m1 0h1m15 0h1M1 102.5h2m1 0h1m5 0h1m1 0h2m2 0h1m1 0h2m4 0h1m5 0h1m15 0h1m3 0h1m1 0h1m3 0h2m15 0h1m163 0h1m20 0h2m2 0h1m7 0h1m25 0h1m67 0h1m3 0h1m16 0h1m23 0h1M0 103.5h2m5 0h3m3 0h1m5 0h1m4 0h1m1 0h1m4 0h1m19 0h1m5 0h1m150 0h1m51 0h1m7 0h1m42 0h2m51 0h1m1 0h1m1 0h1m7 0h1m15 0h1m2 0h1m18 0h1M0 104.5h4m9 0h1m3 0h1m4 0h1m1 0h2m9 0h1m6 0h1m4 0h1m1 0h4m169 0h1m17 0h1m1 0h1m16 0h1m12 0h1m26 0h1m64 0h1m18 0h1m10 0h1m20 0h1M0 105.5h1m1 0h1m1 0h1m2 0h1m1 0h1m3 0h1m4 0h2m1 0h1m2 0h1m1 0h2m1 0h2m15 0h1m1 0h2m1 0h1m3 0h1m153 0h1m28 0h1m12 0h1m9 0h1m49 0h1m52 0h1m4 0h1m19 0h1M0 106.5h4m1 0h1m1 0h1m2 0h1m5 0h1m17 0h1m12 0h2m1 0h2m156 0h1m51 0h1m20 0h1m82 0h1m1 0h1m1 0h1m13 0h1m7 0h1m19 0h1m2 0h1M1 107.5h1m1 0h2m2 0h1m1 0h1m5 0h2m2 0h3m2 0h2m2 0h1m10 0h1m2 0h1m5 0h1m23 0h1m185 0h1m1 0h1m32 0h1m70 0h1m1 0h1m3 0h1m23 0h1m14 0h1M0 108.5h1m1 0h2m15 0h1m5 0h1m4 0h1m18 0h1m9 0h1m147 0h2m21 0h1m6 0h1m17 0h1m4 0h1m3 0h1m17 0h1m11 0h1m15 0h1m53 0h1m21 0h1m8 0h1m13 0h1M3 109.5h1m1 0h1m1 0h1m5 0h4m1 0h1m6 0h1m4 0h1m3 0h2m3 0h1m2 0h1m4 0h1m2 0h1m2 0h1m3 0h1m45 0h1m153 0h1m1 0h2m16 0h1m2 0h1m21 0h1m8 0h1m70 0h1m7 0h1m17 0h1M0 110.5h1m2 0h1m1 0h3m3 0h1m3 0h1m1 0h1m10 0h2m73 0h1m129 0h1m1 0h1m23 0h1m10 0h1m93 0h1m7 0h1m30 0h1m9 0h1m1 0h1M0 111.5h2m5 0h2m6 0h2m1 0h1m5 0h1m3 0h1m1 0h1m1 0h1m12 0h1m3 0h3m2 0h1m155 0h1m10 0h1m38 0h1m1 0h1m12 0h1m8 0h1m79 0h1m9 0h1M0 112.5h3m3 0h2m2 0h2m4 0h1m3 0h1m2 0h1m1 0h1m2 0h1m1 0h1m4 0h1m11 0h2m2 0h3m48 0h1m156 0h1m1 0h1m9 0h1m92 0h1m8 0h1m8 0h2m30 0h1M1 113.5h7m3 0h1m2 0h1m10 0h1m8 0h1m1 0h1m10 0h1m2 0h3m201 0h1m16 0h1m92 0h1m9 0h1m31 0h1M0 114.5h2m1 0h2m11 0h1m1 0h1m6 0h1m2 0h1m2 0h2m13 0h1m2 0h2m1 0h1m18 0h1m1 0h1m138 0h1m26 0h1m20 0h1m3 0h1m15 0h1m128 0h1M0 115.5h1m1 0h1m3 0h1m4 0h1m7 0h1m3 0h1m1 0h1m2 0h1m2 0h1m3 0h1m1 0h3m8 0h2m2 0h1m311 0h1m14 0h1m7 0h1m8 0h1m13 0h1m3 0h1M5 116.5h1m15 0h1m2 0h1m6 0h1m1 0h1m10 0h1m6 0h2m103 0h1m101 0h1m1 0h1m28 0h1m19 0h1m54 0h1m12 0h1m21 0h1M0 117.5h1m1 0h1m11 0h2m2 0h1m21 0h1m10 0h2m165 0h1m41 0h1m44 0h1m5 0h1m52 0h1m4 0h1m2 0h1m5 0h1m10 0h1m16 0h1m3 0h1M0 118.5h1m1 0h2m2 0h1m1 0h1m9 0h1m12 0h1m12 0h1m2 0h2m1 0h2m16 0h1m12 0h1m126 0h1m11 0h1m22 0h1m125 0h1m19 0h1m2 0h1m3 0h1m18 0h1M0 119.5h2m10 0h3m5 0h1m7 0h1m1 0h1m228 0h2m122 0h1m18 0h1M0 120.5h1m2 0h2m3 0h3m3 0h1m4 0h1m7 0h2m2 0h1m3 0h1m8 0h1m6 0h1m47 0h1m3 0h1m103 0h1m14 0h1m37 0h1M0 121.5h1m1 0h1m2 0h2m3 0h1m3 0h1m13 0h1m9 0h1m12 0h2m206 0h1m31 0h1m18 0h1m53 0h2m18 0h1m13 0h1m10 0h2M0 122.5h2m1 0h1m12 0h1m1 0h1m1 0h1m1 0h1m7 0h1m16 0h1m3 0h2m45 0h1m148 0h1m12 0h1m103 0h2m1 0h1m4 0h1m1 0h1m8 0h1M2 123.5h1m6 0h2m1 0h1m2 0h1m1 0h1m2 0h1m14 0h1m28 0h1m143 0h1m50 0h1m104 0h2m33 0h1m9 0h2m4 0h1"/>
<path stroke="#00bbff" d="M51 9.5h1M155 10.5h1M49 12.5h1m313 0h1M155 17.5h1M155 19.5h1M207 20.5h1M155 22.5h1m207 0h1M117 23.5h1M51 24.5h1M155 25.5h1m207 0h1M155 26.5h1M363 27.5h1M148 28.5h1M362 29.5h1M363 30.5h1M51 31.5h1M155 32.5h1M155 33.5h1M155 34.5h1m207 0h1M363 35.5h1M363 36.5h1M153 37.5h1m2 0h1m206 0h1M363 39.5h1M363 40.5h1M51 42.5h1m96 0h1m204 0h1M362 43.5h2M155 44.5h1m207 0h1M335 45.5h1M51 46.5h1m103 0h1M363 48.5h1M51 49.5h1m80 0h1m22 0h1m207 0h1M51 50.5h1m311 0h1M155 51.5h1m197 0h1m9 0h2M363 52.5h1M51 53.5h1m81 0h1m20 0h2m205 0h1m1 0h1M51 54.5h1m103 0h1m51 0h1m154 0h1M51 55.5h1m98 0h1m4 0h1m207 0h1M139 56.5h1m15 0h1m207 0h1M104 57.5h1m44 0h1m5 0h1m206 0h2M104 58.5h1m9 0h1m40 0h1m203 0h1m3 0h1M104 59.5h1m30 0h1m17 0h1m1 0h1m196 0h1m3 0h1m1 0h1m4 0h1M134 60.5h1m6 0h1m13 0h1m178 0h2m21 0h1m3 0h1m1 0h1M51 61.5h1m51 0h3m1 0h1m4 0h1m2 0h2m10 0h1m3 0h2m1 0h4m6 0h3m1 0h2m1 0h1m1 0h3m157 0h2m14 0h1m3 0h1m1 0h1m6 0h3m3 0h1m2 0h3m2 0h2m1 0h2M1 62.5h1m1 0h3m1 0h3m4 0h1m1 0h2m2 0h1m2 0h2m1 0h2m18 0h2m2 0h3m29 0h1m18 0h1m106 0h1m8 0h2m6 0h1m1 0h1m7 0h1m2 0h2m11 0h1m1 0h1m5 0h1m10 0h1m7 0h1m3 0h1m12 0h1m1 0h1m1 0h1m1 0h1m4 0h1m4 0h1m53 0h1m1 0h1m15 0h1m6 0h2m16 0h1m3 0h1m2 0h1M17 63.5h1m22 0h1m10 0h1m312 0h1M21 64.5h1m29 0h1m315 0h1M5 65.5h1m43 0h1m1 0h1M1 66.5h1m20 0h1m28 0h1M0 67.5h1m51 0h1m311 0h1M4 68.5h1m23 0h1M23 69.5h1M0 70.5h1m50 0h1M259 71.5h1M262 72.5h1M0 73.5h1m16 0h1m33 0h1M0 74.5h1m363 0h1M20 75.5h1M0 76.5h1m35 0h1M51 77.5h1m312 0h1M0 78.5h1M0 80.5h1m2 0h1M0 84.5h1m363 0h1M0 85.5h2M23 88.5h1M1 89.5h2m48 0h1M1 91.5h1M51 92.5h1M51 93.5h1M0 94.5h1M0 96.5h1M364 99.5h1M0 100.5h2m49 0h1M50 101.5h1M0 102.5h1m50 0h1M259 105.5h1M0 107.5h1m50 0h1M51 108.5h1M0 109.5h2M3 111.5h1M364 114.5h1M51 115.5h1M208 116.5h1M364 118.5h1M51 119.5h1M0 123.5h1m50 0h1"/>
<path stroke="#00fffc" d="M362 61.5h2M0 62.5h1m17 0h1"/>
<path stroke="#ff0000" d="M187 6.5h1M137 21.5h1M388 25.5h1M378 33.5h1M9 41.5h1"/>
</g>
<g shape-rendering="crispEdges">
<rect x="802" y="138" width="40" height="7" fill="#6300ff"/>
<rect x="802" y="132" width="40" height="6" fill="#3300ff"/>
<rect x="802" y="126" width="40" height="6" fill="#0014ff"/>
<rect x="802" y="120" width="40" height="6" fill="#0044ff"/>
<rect x="802" y="113" width="40" height="7" fill="#008bff"/>
<rect x="802" y="107" width="40" height="6" fill="#00bbff"/>
<rect x="802" y="101" width="40" height="6" fill="#00fffc"/>
<rect x="802" y="95" width="40" height="6" fill="#00ffcc"/>
<rect x="802" y="89" width="40" height="6" fill="#00ff85"/>
<rect x="802" y="82" width="40" height="7" fill="#00ff55"/>
<rect x="802" y="76" width="40" height="6" fill="#00ff0e"/>
<rect x="802" y="70" width="40" height="6" fill="#22ff00"/>
<rect x="802" y="64" width="40" height="6" fill="#69ff00"/>
<rect x="802" y="58" width="40" height="6" fill="#99ff00"/>
<rect x="802" y="51" width="40" height="7" fill="#e0ff00"/>
<rect x="802" y="45" width="40" height="6" fill="#ffee00"/>
<rect x="802" y="39" width="40" height="6" fill="#ffa700"/>
<rect x="802" y="33" width="40" height="6" fill="#ff7700"/>
<rect x="802" y="27" width="40" height="6" fill="#ff3000"/>
<rect x="802" y="21" width="40" height="6" fill="#ff0000"/>
</g>
<line x1="842.5" y1="21.0" x2="842.5" y2="145.5" stroke="#000" stroke-width="1"/>
<line x1="821" y1="141.50" x2="842.5" y2="141.50" stroke="#000" stroke-width="1"/>
<text x="845.6" y="143.40" font-family="'Liberation Sans',Arial,sans-serif" font-size="6.6" font-weight="bold" fill="#000">80</text>
<line x1="821" y1="127.50" x2="842.5" y2="127.50" stroke="#000" stroke-width="1"/>
<text x="845.6" y="129.40" font-family="'Liberation Sans',Arial,sans-serif" font-size="6.6" font-weight="bold" fill="#000">100</text>
<line x1="821" y1="114.50" x2="842.5" y2="114.50" stroke="#000" stroke-width="1"/>
<text x="845.6" y="116.40" font-family="'Liberation Sans',Arial,sans-serif" font-size="6.6" font-weight="bold" fill="#000">120</text>
<line x1="821" y1="100.50" x2="842.5" y2="100.50" stroke="#000" stroke-width="1"/>
<text x="845.6" y="102.40" font-family="'Liberation Sans',Arial,sans-serif" font-size="6.6" font-weight="bold" fill="#000">140</text>
<line x1="821" y1="86.50" x2="842.5" y2="86.50" stroke="#000" stroke-width="1"/>
<text x="845.6" y="88.40" font-family="'Liberation Sans',Arial,sans-serif" font-size="6.6" font-weight="bold" fill="#000">160</text>
<line x1="821" y1="72.50" x2="842.5" y2="72.50" stroke="#000" stroke-width="1"/>
<text x="845.6" y="74.40" font-family="'Liberation Sans',Arial,sans-serif" font-size="6.6" font-weight="bold" fill="#000">180</text>
<line x1="821" y1="58.50" x2="842.5" y2="58.50" stroke="#000" stroke-width="1"/>
<text x="845.6" y="60.40" font-family="'Liberation Sans',Arial,sans-serif" font-size="6.6" font-weight="bold" fill="#000">200</text>
<line x1="821" y1="45.50" x2="842.5" y2="45.50" stroke="#000" stroke-width="1"/>
<text x="845.6" y="47.40" font-family="'Liberation Sans',Arial,sans-serif" font-size="6.6" font-weight="bold" fill="#000">220</text>
<line x1="821" y1="31.50" x2="842.5" y2="31.50" stroke="#000" stroke-width="1"/>
<text x="845.6" y="33.40" font-family="'Liberation Sans',Arial,sans-serif" font-size="6.6" font-weight="bold" fill="#000">240</text>
<path d="M95.5 21.0V145.5H798.5V21.0M95.5 21.5H117.0" fill="none" stroke="#000" stroke-width="1"/>
<text x="91.1" y="148.90" text-anchor="end" font-family="'Liberation Serif','Times New Roman',serif" font-size="11.8" fill="#000">0</text>
<line x1="95.5" y1="129.50" x2="117.0" y2="129.50" stroke="#000" stroke-width="1"/>
<text x="91.1" y="132.90" text-anchor="end" font-family="'Liberation Serif','Times New Roman',serif" font-size="11.8" fill="#000">20</text>
<line x1="95.5" y1="114.50" x2="117.0" y2="114.50" stroke="#000" stroke-width="1"/>
<text x="91.1" y="117.90" text-anchor="end" font-family="'Liberation Serif','Times New Roman',serif" font-size="11.8" fill="#000">40</text>
<line x1="95.5" y1="98.50" x2="117.0" y2="98.50" stroke="#000" stroke-width="1"/>
<text x="91.1" y="101.90" text-anchor="end" font-family="'Liberation Serif','Times New Roman',serif" font-size="11.8" fill="#000">60</text>
<line x1="95.5" y1="83.50" x2="117.0" y2="83.50" stroke="#000" stroke-width="1"/>
<text x="91.1" y="86.90" text-anchor="end" font-family="'Liberation Serif','Times New Roman',serif" font-size="11.8" fill="#000">80</text>
<line x1="95.5" y1="67.50" x2="117.0" y2="67.50" stroke="#000" stroke-width="1"/>
<text x="91.1" y="70.90" text-anchor="end" font-family="'Liberation Serif','Times New Roman',serif" font-size="11.8" fill="#000">100</text>
<line x1="95.5" y1="52.50" x2="117.0" y2="52.50" stroke="#000" stroke-width="1"/>
<text x="91.1" y="55.90" text-anchor="end" font-family="'Liberation Serif','Times New Roman',serif" font-size="11.8" fill="#000">120</text>
<line x1="95.5" y1="36.50" x2="117.0" y2="36.50" stroke="#000" stroke-width="1"/>
<text x="91.1" y="39.90" text-anchor="end" font-family="'Liberation Serif','Times New Roman',serif" font-size="11.8" fill="#000">140</text>
<text x="91.1" y="24.90" text-anchor="end" font-family="'Liberation Serif','Times New Roman',serif" font-size="11.8" fill="#000">160</text>
<text x="94.90" y="154.80" text-anchor="middle" font-family="'Liberation Serif','Times New Roman',serif" font-size="11.8" fill="#000">0</text>
<line x1="180.50" y1="145.5" x2="180.50" y2="141.0" stroke="#000" stroke-width="1"/>
<text x="180.50" y="154.80" text-anchor="middle" font-family="'Liberation Serif','Times New Roman',serif" font-size="11.8" fill="#000">50</text>
<line x1="264.50" y1="145.5" x2="264.50" y2="141.0" stroke="#000" stroke-width="1"/>
<text x="264.50" y="154.80" text-anchor="middle" font-family="'Liberation Serif','Times New Roman',serif" font-size="11.8" fill="#000">100</text>
<line x1="349.50" y1="145.5" x2="349.50" y2="141.0" stroke="#000" stroke-width="1"/>
<text x="349.50" y="154.80" text-anchor="middle" font-family="'Liberation Serif','Times New Roman',serif" font-size="11.8" fill="#000">150</text>
<line x1="433.50" y1="145.5" x2="433.50" y2="141.0" stroke="#000" stroke-width="1"/>
<text x="433.50" y="154.80" text-anchor="middle" font-family="'Liberation Serif','Times New Roman',serif" font-size="11.8" fill="#000">200</text>
<line x1="517.50" y1="145.5" x2="517.50" y2="141.0" stroke="#000" stroke-width="1"/>
<text x="517.50" y="154.80" text-anchor="middle" font-family="'Liberation Serif','Times New Roman',serif" font-size="11.8" fill="#000">250</text>
<line x1="602.50" y1="145.5" x2="602.50" y2="141.0" stroke="#000" stroke-width="1"/>
<text x="602.50" y="154.80" text-anchor="middle" font-family="'Liberation Serif','Times New Roman',serif" font-size="11.8" fill="#000">300</text>
<line x1="686.50" y1="145.5" x2="686.50" y2="141.0" stroke="#000" stroke-width="1"/>
<text x="686.50" y="154.80" text-anchor="middle" font-family="'Liberation Serif','Times New Roman',serif" font-size="11.8" fill="#000">350</text>
<line x1="771.50" y1="145.5" x2="771.50" y2="141.0" stroke="#000" stroke-width="1"/>
<text x="771.50" y="154.80" text-anchor="middle" font-family="'Liberation Serif','Times New Roman',serif" font-size="11.8" fill="#000">400</text>
<text x="95.3" y="17.60" font-family="'Liberation Serif','Times New Roman',serif" font-size="14" fill="#000">Vcal threshold</text>
<text x="820.5" y="17.6" text-anchor="end" font-family="'Liberation Serif','Times New Roman',serif" font-size="14" fill="#000">M0074-060620.09:02T-10a</text>
<g shape-rendering="crispEdges">
<rect x="802" y="306" width="40" height="7" fill="#6300ff"/>
<rect x="802" y="300" width="40" height="6" fill="#3300ff"/>
<rect x="802" y="294" width="40" height="6" fill="#0014ff"/>
<rect x="802" y="288" width="40" height="6" fill="#0044ff"/>
<rect x="802" y="281" width="40" height="7" fill="#008bff"/>
<rect x="802" y="275" width="40" height="6" fill="#00bbff"/>
<rect x="802" y="269" width="40" height="6" fill="#00fffc"/>
<rect x="802" y="263" width="40" height="6" fill="#00ffcc"/>
<rect x="802" y="257" width="40" height="6" fill="#00ff85"/>
<rect x="802" y="250" width="40" height="7" fill="#00ff55"/>
<rect x="802" y="244" width="40" height="6" fill="#00ff0e"/>
<rect x="802" y="238" width="40" height="6" fill="#22ff00"/>
<rect x="802" y="232" width="40" height="6" fill="#69ff00"/>
<rect x="802" y="226" width="40" height="6" fill="#99ff00"/>
<rect x="802" y="219" width="40" height="7" fill="#e0ff00"/>
<rect x="802" y="213" width="40" height="6" fill="#ffee00"/>
<rect x="802" y="207" width="40" height="6" fill="#ffa700"/>
<rect x="802" y="201" width="40" height="6" fill="#ff7700"/>
<rect x="802" y="195" width="40" height="6" fill="#ff3000"/>
<rect x="802" y="189" width="40" height="6" fill="#ff0000"/>
</g>
<line x1="842.5" y1="189.0" x2="842.5" y2="313.5" stroke="#000" stroke-width="1"/>
<line x1="821" y1="313.50" x2="842.5" y2="313.50" stroke="#000" stroke-width="1"/>
<text x="845.6" y="315.40" font-family="'Liberation Sans',Arial,sans-serif" font-size="6.6" font-weight="bold" fill="#000">-2</text>
<line x1="821" y1="297.50" x2="842.5" y2="297.50" stroke="#000" stroke-width="1"/>
<text x="845.6" y="299.40" font-family="'Liberation Sans',Arial,sans-serif" font-size="6.6" font-weight="bold" fill="#000">-1.5</text>
<line x1="821" y1="282.50" x2="842.5" y2="282.50" stroke="#000" stroke-width="1"/>
<text x="845.6" y="284.40" font-family="'Liberation Sans',Arial,sans-serif" font-size="6.6" font-weight="bold" fill="#000">-1</text>
<line x1="821" y1="266.50" x2="842.5" y2="266.50" stroke="#000" stroke-width="1"/>
<text x="845.6" y="268.40" font-family="'Liberation Sans',Arial,sans-serif" font-size="6.6" font-weight="bold" fill="#000">-0.5</text>
<line x1="821" y1="251.50" x2="842.5" y2="251.50" stroke="#000" stroke-width="1"/>
<text x="845.6" y="253.40" font-family="'Liberation Sans',Arial,sans-serif" font-size="6.6" font-weight="bold" fill="#000">0</text>
<line x1="821" y1="235.50" x2="842.5" y2="235.50" stroke="#000" stroke-width="1"/>
<text x="845.6" y="237.40" font-family="'Liberation Sans',Arial,sans-serif" font-size="6.6" font-weight="bold" fill="#000">0.5</text>
<line x1="821" y1="220.50" x2="842.5" y2="220.50" stroke="#000" stroke-width="1"/>
<text x="845.6" y="222.40" font-family="'Liberation Sans',Arial,sans-serif" font-size="6.6" font-weight="bold" fill="#000">1</text>
<line x1="821" y1="204.50" x2="842.5" y2="204.50" stroke="#000" stroke-width="1"/>
<text x="845.6" y="206.40" font-family="'Liberation Sans',Arial,sans-serif" font-size="6.6" font-weight="bold" fill="#000">1.5</text>
<line x1="821" y1="189.50" x2="842.5" y2="189.50" stroke="#000" stroke-width="1"/>
<text x="845.6" y="191.40" font-family="'Liberation Sans',Arial,sans-serif" font-size="6.6" font-weight="bold" fill="#000">2</text>
<rect x="95.5" y="189.5" width="703.0" height="124.0" fill="none" stroke="#000" stroke-width="1"/>
<text x="91.1" y="316.90" text-anchor="end" font-family="'Liberation Serif','Times New Roman',serif" font-size="11.8" fill="#000">0</text>
<line x1="95.5" y1="297.50" x2="117.0" y2="297.50" stroke="#000" stroke-width="1"/>
<text x="91.1" y="300.90" text-anchor="end" font-family="'Liberation Serif','Times New Roman',serif" font-size="11.8" fill="#000">20</text>
<line x1="95.5" y1="282.50" x2="117.0" y2="282.50" stroke="#000" stroke-width="1"/>
<text x="91.1" y="285.90" text-anchor="end" font-family="'Liberation Serif','Times New Roman',serif" font-size="11.8" fill="#000">40</text>
<line x1="95.5" y1="266.50" x2="117.0" y2="266.50" stroke="#000" stroke-width="1"/>
<text x="91.1" y="269.90" text-anchor="end" font-family="'Liberation Serif','Times New Roman',serif" font-size="11.8" fill="#000">60</text>
<line x1="95.5" y1="251.50" x2="117.0" y2="251.50" stroke="#000" stroke-width="1"/>
<text x="91.1" y="254.90" text-anchor="end" font-family="'Liberation Serif','Times New Roman',serif" font-size="11.8" fill="#000">80</text>
<line x1="95.5" y1="235.50" x2="117.0" y2="235.50" stroke="#000" stroke-width="1"/>
<text x="91.1" y="238.90" text-anchor="end" font-family="'Liberation Serif','Times New Roman',serif" font-size="11.8" fill="#000">100</text>
<line x1="95.5" y1="220.50" x2="117.0" y2="220.50" stroke="#000" stroke-width="1"/>
<text x="91.1" y="223.90" text-anchor="end" font-family="'Liberation Serif','Times New Roman',serif" font-size="11.8" fill="#000">120</text>
<line x1="95.5" y1="204.50" x2="117.0" y2="204.50" stroke="#000" stroke-width="1"/>
<text x="91.1" y="207.90" text-anchor="end" font-family="'Liberation Serif','Times New Roman',serif" font-size="11.8" fill="#000">140</text>
<text x="91.1" y="192.90" text-anchor="end" font-family="'Liberation Serif','Times New Roman',serif" font-size="11.8" fill="#000">160</text>
<text x="94.90" y="322.80" text-anchor="middle" font-family="'Liberation Serif','Times New Roman',serif" font-size="11.8" fill="#000">0</text>
<line x1="180.50" y1="313.5" x2="180.50" y2="309.0" stroke="#000" stroke-width="1"/>
<text x="180.50" y="322.80" text-anchor="middle" font-family="'Liberation Serif','Times New Roman',serif" font-size="11.8" fill="#000">50</text>
<line x1="264.50" y1="313.5" x2="264.50" y2="309.0" stroke="#000" stroke-width="1"/>
<text x="264.50" y="322.80" text-anchor="middle" font-family="'Liberation Serif','Times New Roman',serif" font-size="11.8" fill="#000">100</text>
<line x1="349.50" y1="313.5" x2="349.50" y2="309.0" stroke="#000" stroke-width="1"/>
<text x="349.50" y="322.80" text-anchor="middle" font-family="'Liberation Serif','Times New Roman',serif" font-size="11.8" fill="#000">150</text>
<line x1="433.50" y1="313.5" x2="433.50" y2="309.0" stroke="#000" stroke-width="1"/>
<text x="433.50" y="322.80" text-anchor="middle" font-family="'Liberation Serif','Times New Roman',serif" font-size="11.8" fill="#000">200</text>
<line x1="517.50" y1="313.5" x2="517.50" y2="309.0" stroke="#000" stroke-width="1"/>
<text x="517.50" y="322.80" text-anchor="middle" font-family="'Liberation Serif','Times New Roman',serif" font-size="11.8" fill="#000">250</text>
<line x1="602.50" y1="313.5" x2="602.50" y2="309.0" stroke="#000" stroke-width="1"/>
<text x="602.50" y="322.80" text-anchor="middle" font-family="'Liberation Serif','Times New Roman',serif" font-size="11.8" fill="#000">300</text>
<line x1="686.50" y1="313.5" x2="686.50" y2="309.0" stroke="#000" stroke-width="1"/>
<text x="686.50" y="322.80" text-anchor="middle" font-family="'Liberation Serif','Times New Roman',serif" font-size="11.8" fill="#000">350</text>
<line x1="771.50" y1="313.5" x2="771.50" y2="309.0" stroke="#000" stroke-width="1"/>
<text x="771.50" y="322.80" text-anchor="middle" font-family="'Liberation Serif','Times New Roman',serif" font-size="11.8" fill="#000">400</text>
<text x="95.3" y="185.60" font-family="'Liberation Serif','Times New Roman',serif" font-size="14" fill="#000">Bump bonding map</text>
<g shape-rendering="crispEdges">
<rect x="110.3" y="229.8" width="2" height="1" fill="#00ff0e"/>
<rect x="97.0" y="248.1" width="2" height="1" fill="#00ff0e"/>
<rect x="94.9" y="244.0" width="2" height="1" fill="#0044ff"/>
<rect x="326.4" y="209.7" width="2" height="1" fill="#00ff0e"/>
<rect x="330.0" y="239.6" width="2" height="1" fill="#00ff0e"/>
<rect x="410.8" y="194.9" width="2" height="1" fill="#00ff0e"/>
<rect x="408.6" y="230.7" width="2" height="1" fill="#00ff0e"/>
<rect x="457.7" y="237.8" width="2" height="1" fill="#00ff0e"/>
<rect x="532.5" y="259.5" width="2" height="1" fill="#00ff0e"/>
<rect x="750.0" y="213.8" width="2" height="1" fill="#00ff0e"/>
</g>
<text x="312.3" y="354.50" xml:space="preserve" font-family="'Liberation Serif','Times New Roman',serif" font-size="12.9" font-weight="bold" fill="#000">Test Summary of M0074</text>
<text x="466.3" y="354.50" xml:space="preserve" font-family="'Liberation Serif','Times New Roman',serif" font-size="12.8" font-weight="bold" fill="#000">T-10a</text>
<text x="767.3" y="354.50" xml:space="preserve" font-family="'Liberation Serif','Times New Roman',serif" font-size="13" font-weight="bold" fill="#000">GRADE:  A</text>
<text x="312.3" y="378.80" xml:space="preserve" font-family="'Liberation Serif','Times New Roman',serif" font-size="13" fill="#000">ROCs &gt; 1% defects:</text>
<text x="447.2" y="378.80" xml:space="preserve" font-family="'Liberation Serif','Times New Roman',serif" font-size="13" fill="#000">0</text>
<text x="312.3" y="396.80" xml:space="preserve" font-family="'Liberation Serif','Times New Roman',serif" font-size="13" fill="#000">Dead Pixel:</text>
<text x="447.2" y="396.80" xml:space="preserve" font-family="'Liberation Serif','Times New Roman',serif" font-size="13" fill="#000">6</text>
<text x="312.3" y="413.70" xml:space="preserve" font-family="'Liberation Serif','Times New Roman',serif" font-size="13" fill="#000">Mask Defects:</text>
<text x="447.2" y="413.70" xml:space="preserve" font-family="'Liberation Serif','Times New Roman',serif" font-size="13" fill="#000">0</text>
<text x="312.3" y="430.50" xml:space="preserve" font-family="'Liberation Serif','Times New Roman',serif" font-size="13" fill="#000">Dead Bumps:</text>
<text x="447.2" y="430.50" xml:space="preserve" font-family="'Liberation Serif','Times New Roman',serif" font-size="13" fill="#000">4</text>
<text x="312.3" y="447.10" xml:space="preserve" font-family="'Liberation Serif','Times New Roman',serif" font-size="13" fill="#000">Dead Trimbits:</text>
<text x="447.2" y="447.10" xml:space="preserve" font-family="'Liberation Serif','Times New Roman',serif" font-size="13" fill="#000">0</text>
<text x="312.3" y="463.80" xml:space="preserve" font-family="'Liberation Serif','Times New Roman',serif" font-size="13" fill="#000">Address Probl:</text>
<text x="447.2" y="463.80" xml:space="preserve" font-family="'Liberation Serif','Times New Roman',serif" font-size="13" fill="#000">0</text>
<text x="507.6" y="378.70" xml:space="preserve" font-family="'Liberation Serif','Times New Roman',serif" font-size="13" fill="#000">Tested on:</text>
<text x="604" y="378.70" xml:space="preserve" font-family="'Liberation Serif','Times New Roman',serif" font-size="13" fill="#000">Jun 20</text>
<text x="670.2" y="378.70" xml:space="preserve" font-family="'Liberation Serif','Times New Roman',serif" font-size="13" fill="#000">Noise [e]</text>
<text x="800.8" y="378.70" xml:space="preserve" font-family="'Liberation Serif','Times New Roman',serif" font-size="13" fill="#000">156.2</text>
<text x="507.6" y="395.80" xml:space="preserve" font-family="'Liberation Serif','Times New Roman',serif" font-size="13" fill="#000">Temp. [<tspan font-size="7.2" dy="-5.4">o</tspan><tspan dy="5.4">C]:</tspan></text>
<text x="604" y="395.80" xml:space="preserve" font-family="'Liberation Serif','Times New Roman',serif" font-size="13" fill="#000">-10.0 +- 0.0</text>
<text x="670.2" y="395.80" xml:space="preserve" font-family="'Liberation Serif','Times New Roman',serif" font-size="13" fill="#000">Vcal Thr. Width [e]</text>
<text x="800.8" y="395.80" xml:space="preserve" font-family="'Liberation Serif','Times New Roman',serif" font-size="13" fill="#000">80.9</text>
<text x="507.6" y="411.80" xml:space="preserve" font-family="'Liberation Serif','Times New Roman',serif" font-size="13" fill="#000">Trim / phCal:</text>
<text x="604" y="411.80" xml:space="preserve" font-family="'Liberation Serif','Times New Roman',serif" font-size="13" fill="#000">yes / yes</text>
<text x="670.2" y="411.80" xml:space="preserve" font-family="'Liberation Serif','Times New Roman',serif" font-size="13" fill="#000">Rel. Gain Width [%]</text>
<text x="800.8" y="411.80" xml:space="preserve" font-family="'Liberation Serif','Times New Roman',serif" font-size="13" fill="#000">2.7</text>
<text x="507.6" y="428.50" xml:space="preserve" font-family="'Liberation Serif','Times New Roman',serif" font-size="13" fill="#000">Therm. cycl.:</text>
<text x="604" y="428.50" xml:space="preserve" font-family="'Liberation Serif','Times New Roman',serif" font-size="13" fill="#000">yes</text>
<text x="670.2" y="428.50" xml:space="preserve" font-family="'Liberation Serif','Times New Roman',serif" font-size="13" fill="#000">Pedestal Spread [e]</text>
<text x="800.8" y="428.50" xml:space="preserve" font-family="'Liberation Serif','Times New Roman',serif" font-size="13" fill="#000">1252.3</text>
<text x="507.6" y="445.30" xml:space="preserve" font-family="'Liberation Serif','Times New Roman',serif" font-size="13" fill="#000">TBM1:</text>
<text x="604" y="445.30" xml:space="preserve" font-family="'Liberation Serif','Times New Roman',serif" font-size="13" fill="#000">ok</text>
<text x="507.6" y="461.50" xml:space="preserve" font-family="'Liberation Serif','Times New Roman',serif" font-size="13" fill="#000">TBM2:</text>
<text x="604" y="461.50" xml:space="preserve" font-family="'Liberation Serif','Times New Roman',serif" font-size="13" fill="#000">ok</text>
<rect x="47.5" y="527.5" width="151.0" height="121.0" fill="none" stroke="#000" stroke-width="1"/>
<text x="45.3" y="650.30" text-anchor="end" font-family="'Liberation Serif','Times New Roman',serif" font-size="11.8" textLength="5.49" lengthAdjust="spacingAndGlyphs" fill="#000">0</text>
<line x1="47.5" y1="628.50" x2="53.0" y2="628.50" stroke="#000" stroke-width="1"/>
<text x="45.3" y="632.30" text-anchor="end" font-family="'Liberation Serif','Times New Roman',serif" font-size="11.8" textLength="16.46" lengthAdjust="spacingAndGlyphs" fill="#000">100</text>
<line x1="47.5" y1="607.50" x2="53.0" y2="607.50" stroke="#000" stroke-width="1"/>
<text x="45.3" y="611.30" text-anchor="end" font-family="'Liberation Serif','Times New Roman',serif" font-size="11.8" textLength="16.46" lengthAdjust="spacingAndGlyphs" fill="#000">200</text>
<line x1="47.5" y1="587.50" x2="53.0" y2="587.50" stroke="#000" stroke-width="1"/>
<text x="45.3" y="591.30" text-anchor="end" font-family="'Liberation Serif','Times New Roman',serif" font-size="11.8" textLength="16.46" lengthAdjust="spacingAndGlyphs" fill="#000">300</text>
<line x1="47.5" y1="567.50" x2="53.0" y2="567.50" stroke="#000" stroke-width="1"/>
<text x="45.3" y="571.30" text-anchor="end" font-family="'Liberation Serif','Times New Roman',serif" font-size="11.8" textLength="16.46" lengthAdjust="spacingAndGlyphs" fill="#000">400</text>
<line x1="47.5" y1="547.50" x2="53.0" y2="547.50" stroke="#000" stroke-width="1"/>
<text x="45.3" y="551.30" text-anchor="end" font-family="'Liberation Serif','Times New Roman',serif" font-size="11.8" textLength="16.46" lengthAdjust="spacingAndGlyphs" fill="#000">500</text>
<line x1="47.5" y1="527.50" x2="53.0" y2="527.50" stroke="#000" stroke-width="1"/>
<text x="45.3" y="531.30" text-anchor="end" font-family="'Liberation Serif','Times New Roman',serif" font-size="11.8" textLength="16.46" lengthAdjust="spacingAndGlyphs" fill="#000">600</text>
<text x="46.60" y="657.50" text-anchor="middle" font-family="'Liberation Serif','Times New Roman',serif" font-size="11.8" textLength="5.49" lengthAdjust="spacingAndGlyphs" fill="#000">0</text>
<line x1="66.50" y1="648.5" x2="66.50" y2="644.0" stroke="#000" stroke-width="1"/>
<text x="64.70" y="657.50" text-anchor="middle" font-family="'Liberation Serif','Times New Roman',serif" font-size="11.8" textLength="5.49" lengthAdjust="spacingAndGlyphs" fill="#000">2</text>
<line x1="85.50" y1="648.5" x2="85.50" y2="644.0" stroke="#000" stroke-width="1"/>
<text x="83.70" y="657.50" text-anchor="middle" font-family="'Liberation Serif','Times New Roman',serif" font-size="11.8" textLength="5.49" lengthAdjust="spacingAndGlyphs" fill="#000">4</text>
<line x1="104.50" y1="648.5" x2="104.50" y2="644.0" stroke="#000" stroke-width="1"/>
<text x="102.70" y="657.50" text-anchor="middle" font-family="'Liberation Serif','Times New Roman',serif" font-size="11.8" textLength="5.49" lengthAdjust="spacingAndGlyphs" fill="#000">6</text>
<line x1="123.50" y1="648.5" x2="123.50" y2="644.0" stroke="#000" stroke-width="1"/>
<text x="121.70" y="657.50" text-anchor="middle" font-family="'Liberation Serif','Times New Roman',serif" font-size="11.8" textLength="5.49" lengthAdjust="spacingAndGlyphs" fill="#000">8</text>
<line x1="141.50" y1="648.5" x2="141.50" y2="644.0" stroke="#000" stroke-width="1"/>
<text x="141.30" y="657.50" text-anchor="middle" font-family="'Liberation Serif','Times New Roman',serif" font-size="11.8" textLength="10.97" lengthAdjust="spacingAndGlyphs" fill="#000">10</text>
<line x1="160.50" y1="648.5" x2="160.50" y2="644.0" stroke="#000" stroke-width="1"/>
<text x="160.30" y="657.50" text-anchor="middle" font-family="'Liberation Serif','Times New Roman',serif" font-size="11.8" textLength="10.97" lengthAdjust="spacingAndGlyphs" fill="#000">12</text>
<line x1="179.50" y1="648.5" x2="179.50" y2="644.0" stroke="#000" stroke-width="1"/>
<text x="179.30" y="657.50" text-anchor="middle" font-family="'Liberation Serif','Times New Roman',serif" font-size="11.8" textLength="10.97" lengthAdjust="spacingAndGlyphs" fill="#000">14</text>
<text x="198.30" y="657.50" text-anchor="middle" font-family="'Liberation Serif','Times New Roman',serif" font-size="11.8" textLength="10.97" lengthAdjust="spacingAndGlyphs" fill="#000">16</text>
<line x1="47.0" y1="547.50" x2="198.5" y2="547.50" stroke="#ff0000" stroke-width="1" stroke-dasharray="3,3"/>
<text x="57.0" y="521.3" font-family="'Liberation Serif','Times New Roman',serif" font-size="13" fill="#000">Noise</text>
<path d="M47.40 616.50H56.85M52.50 612.50V620.50" stroke="#0000ff" stroke-width="1" fill="none"/>
<circle cx="52.50" cy="616.50" r="2.1" fill="#fff" stroke="#0000ff" stroke-width="1.3"/>
<path d="M56.85 617.50H66.30M61.50 613.50V621.50" stroke="#0000ff" stroke-width="1" fill="none"/>
<circle cx="61.50" cy="617.50" r="2.1" fill="#fff" stroke="#0000ff" stroke-width="1.3"/>
<path d="M66.30 617.50H75.75M70.50 613.50V621.50" stroke="#0000ff" stroke-width="1" fill="none"/>
<circle cx="70.50" cy="617.50" r="2.1" fill="#fff" stroke="#0000ff" stroke-width="1.3"/>
<path d="M75.75 616.50H85.20M80.50 612.50V620.50" stroke="#0000ff" stroke-width="1" fill="none"/>
<circle cx="80.50" cy="616.50" r="2.1" fill="#fff" stroke="#0000ff" stroke-width="1.3"/>
<path d="M85.20 616.50H94.65M89.50 612.50V620.50" stroke="#0000ff" stroke-width="1" fill="none"/>
<circle cx="89.50" cy="616.50" r="2.1" fill="#fff" stroke="#0000ff" stroke-width="1.3"/>
<path d="M94.65 614.50H104.10M99.50 610.50V618.50" stroke="#0000ff" stroke-width="1" fill="none"/>
<circle cx="99.50" cy="614.50" r="2.1" fill="#fff" stroke="#0000ff" stroke-width="1.3"/>
<path d="M104.10 615.50H113.55M108.50 611.50V619.50" stroke="#0000ff" stroke-width="1" fill="none"/>
<circle cx="108.50" cy="615.50" r="2.1" fill="#fff" stroke="#0000ff" stroke-width="1.3"/>
<path d="M113.55 616.50H123.00M118.50 612.50V620.50" stroke="#0000ff" stroke-width="1" fill="none"/>
<circle cx="118.50" cy="616.50" r="2.1" fill="#fff" stroke="#0000ff" stroke-width="1.3"/>
<path d="M123.00 617.50H132.45M127.50 613.50V621.50" stroke="#0000ff" stroke-width="1" fill="none"/>
<circle cx="127.50" cy="617.50" r="2.1" fill="#fff" stroke="#0000ff" stroke-width="1.3"/>
<path d="M132.45 618.50H141.90M137.50 614.50V622.50" stroke="#0000ff" stroke-width="1" fill="none"/>
<circle cx="137.50" cy="618.50" r="2.1" fill="#fff" stroke="#0000ff" stroke-width="1.3"/>
<path d="M141.90 618.50H151.35M146.50 614.50V622.50" stroke="#0000ff" stroke-width="1" fill="none"/>
<circle cx="146.50" cy="618.50" r="2.1" fill="#fff" stroke="#0000ff" stroke-width="1.3"/>
<path d="M151.35 616.50H160.80M155.50 612.50V620.50" stroke="#0000ff" stroke-width="1" fill="none"/>
<circle cx="155.50" cy="616.50" r="2.1" fill="#fff" stroke="#0000ff" stroke-width="1.3"/>
<path d="M160.80 614.50H170.25M165.50 610.50V618.50" stroke="#0000ff" stroke-width="1" fill="none"/>
<circle cx="165.50" cy="614.50" r="2.1" fill="#fff" stroke="#0000ff" stroke-width="1.3"/>
<path d="M170.25 617.50H179.70M174.50 613.50V621.50" stroke="#0000ff" stroke-width="1" fill="none"/>
<circle cx="174.50" cy="617.50" r="2.1" fill="#fff" stroke="#0000ff" stroke-width="1.3"/>
<path d="M179.70 616.50H189.15M184.50 612.50V620.50" stroke="#0000ff" stroke-width="1" fill="none"/>
<circle cx="184.50" cy="616.50" r="2.1" fill="#fff" stroke="#0000ff" stroke-width="1.3"/>
<path d="M189.15 617.50H198.60M193.50 613.50V621.50" stroke="#0000ff" stroke-width="1" fill="none"/>
<circle cx="193.50" cy="617.50" r="2.1" fill="#fff" stroke="#0000ff" stroke-width="1.3"/>
<rect x="267.5" y="527.5" width="151.0" height="121.0" fill="none" stroke="#000" stroke-width="1"/>
<text x="265.3" y="650.30" text-anchor="end" font-family="'Liberation Serif','Times New Roman',serif" font-size="11.8" textLength="5.49" lengthAdjust="spacingAndGlyphs" fill="#000">0</text>
<line x1="267.5" y1="628.50" x2="273.0" y2="628.50" stroke="#000" stroke-width="1"/>
<text x="265.3" y="632.30" text-anchor="end" font-family="'Liberation Serif','Times New Roman',serif" font-size="11.8" textLength="10.97" lengthAdjust="spacingAndGlyphs" fill="#000">50</text>
<line x1="267.5" y1="607.50" x2="273.0" y2="607.50" stroke="#000" stroke-width="1"/>
<text x="265.3" y="611.30" text-anchor="end" font-family="'Liberation Serif','Times New Roman',serif" font-size="11.8" textLength="16.46" lengthAdjust="spacingAndGlyphs" fill="#000">100</text>
<line x1="267.5" y1="587.50" x2="273.0" y2="587.50" stroke="#000" stroke-width="1"/>
<text x="265.3" y="591.30" text-anchor="end" font-family="'Liberation Serif','Times New Roman',serif" font-size="11.8" textLength="16.46" lengthAdjust="spacingAndGlyphs" fill="#000">150</text>
<line x1="267.5" y1="567.50" x2="273.0" y2="567.50" stroke="#000" stroke-width="1"/>
<text x="265.3" y="571.30" text-anchor="end" font-family="'Liberation Serif','Times New Roman',serif" font-size="11.8" textLength="16.46" lengthAdjust="spacingAndGlyphs" fill="#000">200</text>
<line x1="267.5" y1="547.50" x2="273.0" y2="547.50" stroke="#000" stroke-width="1"/>
<text x="265.3" y="551.30" text-anchor="end" font-family="'Liberation Serif','Times New Roman',serif" font-size="11.8" textLength="16.46" lengthAdjust="spacingAndGlyphs" fill="#000">250</text>
<line x1="267.5" y1="527.50" x2="273.0" y2="527.50" stroke="#000" stroke-width="1"/>
<text x="265.3" y="531.30" text-anchor="end" font-family="'Liberation Serif','Times New Roman',serif" font-size="11.8" textLength="16.46" lengthAdjust="spacingAndGlyphs" fill="#000">300</text>
<text x="266.60" y="657.50" text-anchor="middle" font-family="'Liberation Serif','Times New Roman',serif" font-size="11.8" textLength="5.49" lengthAdjust="spacingAndGlyphs" fill="#000">0</text>
<line x1="286.50" y1="648.5" x2="286.50" y2="644.0" stroke="#000" stroke-width="1"/>
<text x="284.70" y="657.50" text-anchor="middle" font-family="'Liberation Serif','Times New Roman',serif" font-size="11.8" textLength="5.49" lengthAdjust="spacingAndGlyphs" fill="#000">2</text>
<line x1="305.50" y1="648.5" x2="305.50" y2="644.0" stroke="#000" stroke-width="1"/>
<text x="303.70" y="657.50" text-anchor="middle" font-family="'Liberation Serif','Times New Roman',serif" font-size="11.8" textLength="5.49" lengthAdjust="spacingAndGlyphs" fill="#000">4</text>
<line x1="324.50" y1="648.5" x2="324.50" y2="644.0" stroke="#000" stroke-width="1"/>
<text x="322.70" y="657.50" text-anchor="middle" font-family="'Liberation Serif','Times New Roman',serif" font-size="11.8" textLength="5.49" lengthAdjust="spacingAndGlyphs" fill="#000">6</text>
<line x1="343.50" y1="648.5" x2="343.50" y2="644.0" stroke="#000" stroke-width="1"/>
<text x="341.70" y="657.50" text-anchor="middle" font-family="'Liberation Serif','Times New Roman',serif" font-size="11.8" textLength="5.49" lengthAdjust="spacingAndGlyphs" fill="#000">8</text>
<line x1="361.50" y1="648.5" x2="361.50" y2="644.0" stroke="#000" stroke-width="1"/>
<text x="361.30" y="657.50" text-anchor="middle" font-family="'Liberation Serif','Times New Roman',serif" font-size="11.8" textLength="10.97" lengthAdjust="spacingAndGlyphs" fill="#000">10</text>
<line x1="380.50" y1="648.5" x2="380.50" y2="644.0" stroke="#000" stroke-width="1"/>
<text x="380.30" y="657.50" text-anchor="middle" font-family="'Liberation Serif','Times New Roman',serif" font-size="11.8" textLength="10.97" lengthAdjust="spacingAndGlyphs" fill="#000">12</text>
<line x1="399.50" y1="648.5" x2="399.50" y2="644.0" stroke="#000" stroke-width="1"/>
<text x="399.30" y="657.50" text-anchor="middle" font-family="'Liberation Serif','Times New Roman',serif" font-size="11.8" textLength="10.97" lengthAdjust="spacingAndGlyphs" fill="#000">14</text>
<text x="418.30" y="657.50" text-anchor="middle" font-family="'Liberation Serif','Times New Roman',serif" font-size="11.8" textLength="10.97" lengthAdjust="spacingAndGlyphs" fill="#000">16</text>
<line x1="267.0" y1="567.50" x2="418.5" y2="567.50" stroke="#ff0000" stroke-width="1" stroke-dasharray="3,3"/>
<text x="277.0" y="521.3" font-family="'Liberation Serif','Times New Roman',serif" font-size="13" fill="#000">Vcal Thr. Width</text>
<path d="M267.40 614.50H276.85" stroke="#44cc44" stroke-width="1" fill="none"/>
<rect x="270.50" y="612.50" width="4" height="4" fill="none" stroke="#44cc44" stroke-width="1"/>
<path d="M276.85 615.50H286.30" stroke="#44cc44" stroke-width="1" fill="none"/>
<rect x="279.50" y="613.50" width="4" height="4" fill="none" stroke="#44cc44" stroke-width="1"/>
<path d="M286.30 614.50H295.75" stroke="#44cc44" stroke-width="1" fill="none"/>
<rect x="288.50" y="612.50" width="4" height="4" fill="none" stroke="#44cc44" stroke-width="1"/>
<path d="M295.75 616.50H305.20" stroke="#44cc44" stroke-width="1" fill="none"/>
<rect x="298.50" y="614.50" width="4" height="4" fill="none" stroke="#44cc44" stroke-width="1"/>
<path d="M305.20 616.50H314.65" stroke="#44cc44" stroke-width="1" fill="none"/>
<rect x="307.50" y="614.50" width="4" height="4" fill="none" stroke="#44cc44" stroke-width="1"/>
<path d="M314.65 614.50H324.10" stroke="#44cc44" stroke-width="1" fill="none"/>
<rect x="317.50" y="612.50" width="4" height="4" fill="none" stroke="#44cc44" stroke-width="1"/>
<path d="M324.10 617.50H333.55" stroke="#44cc44" stroke-width="1" fill="none"/>
<rect x="326.50" y="615.50" width="4" height="4" fill="none" stroke="#44cc44" stroke-width="1"/>
<path d="M333.55 616.50H343.00" stroke="#44cc44" stroke-width="1" fill="none"/>
<rect x="336.50" y="614.50" width="4" height="4" fill="none" stroke="#44cc44" stroke-width="1"/>
<path d="M343.00 616.50H352.45" stroke="#44cc44" stroke-width="1" fill="none"/>
<rect x="345.50" y="614.50" width="4" height="4" fill="none" stroke="#44cc44" stroke-width="1"/>
<path d="M352.45 616.50H361.90" stroke="#44cc44" stroke-width="1" fill="none"/>
<rect x="355.50" y="614.50" width="4" height="4" fill="none" stroke="#44cc44" stroke-width="1"/>
<path d="M361.90 617.50H371.35" stroke="#44cc44" stroke-width="1" fill="none"/>
<rect x="364.50" y="615.50" width="4" height="4" fill="none" stroke="#44cc44" stroke-width="1"/>
<path d="M371.35 616.50H380.80" stroke="#44cc44" stroke-width="1" fill="none"/>
<rect x="373.50" y="614.50" width="4" height="4" fill="none" stroke="#44cc44" stroke-width="1"/>
<path d="M380.80 614.50H390.25" stroke="#44cc44" stroke-width="1" fill="none"/>
<rect x="383.50" y="612.50" width="4" height="4" fill="none" stroke="#44cc44" stroke-width="1"/>
<path d="M390.25 614.50H399.70" stroke="#44cc44" stroke-width="1" fill="none"/>
<rect x="392.50" y="612.50" width="4" height="4" fill="none" stroke="#44cc44" stroke-width="1"/>
<path d="M399.70 614.50H409.15" stroke="#44cc44" stroke-width="1" fill="none"/>
<rect x="402.50" y="612.50" width="4" height="4" fill="none" stroke="#44cc44" stroke-width="1"/>
<path d="M409.15 614.50H418.60" stroke="#44cc44" stroke-width="1" fill="none"/>
<rect x="411.50" y="612.50" width="4" height="4" fill="none" stroke="#44cc44" stroke-width="1"/>
<rect x="486.5" y="527.5" width="151.0" height="121.0" fill="none" stroke="#000" stroke-width="1"/>
<text x="484.3" y="650.30" text-anchor="end" font-family="'Liberation Serif','Times New Roman',serif" font-size="11.8" textLength="5.49" lengthAdjust="spacingAndGlyphs" fill="#000">0</text>
<line x1="486.5" y1="632.50" x2="492.0" y2="632.50" stroke="#000" stroke-width="1"/>
<text x="484.3" y="636.30" text-anchor="end" font-family="'Liberation Serif','Times New Roman',serif" font-size="11.8" textLength="19.20" lengthAdjust="spacingAndGlyphs" fill="#000">0.02</text>
<line x1="486.5" y1="615.50" x2="492.0" y2="615.50" stroke="#000" stroke-width="1"/>
<text x="484.3" y="619.30" text-anchor="end" font-family="'Liberation Serif','Times New Roman',serif" font-size="11.8" textLength="19.20" lengthAdjust="spacingAndGlyphs" fill="#000">0.04</text>
<line x1="486.5" y1="599.50" x2="492.0" y2="599.50" stroke="#000" stroke-width="1"/>
<text x="484.3" y="603.30" text-anchor="end" font-family="'Liberation Serif','Times New Roman',serif" font-size="11.8" textLength="19.20" lengthAdjust="spacingAndGlyphs" fill="#000">0.06</text>
<line x1="486.5" y1="583.50" x2="492.0" y2="583.50" stroke="#000" stroke-width="1"/>
<text x="484.3" y="587.30" text-anchor="end" font-family="'Liberation Serif','Times New Roman',serif" font-size="11.8" textLength="19.20" lengthAdjust="spacingAndGlyphs" fill="#000">0.08</text>
<line x1="486.5" y1="567.50" x2="492.0" y2="567.50" stroke="#000" stroke-width="1"/>
<text x="484.3" y="571.30" text-anchor="end" font-family="'Liberation Serif','Times New Roman',serif" font-size="11.8" textLength="13.72" lengthAdjust="spacingAndGlyphs" fill="#000">0.1</text>
<line x1="486.5" y1="551.50" x2="492.0" y2="551.50" stroke="#000" stroke-width="1"/>
<text x="484.3" y="555.30" text-anchor="end" font-family="'Liberation Serif','Times New Roman',serif" font-size="11.8" textLength="19.20" lengthAdjust="spacingAndGlyphs" fill="#000">0.12</text>
<line x1="486.5" y1="535.50" x2="492.0" y2="535.50" stroke="#000" stroke-width="1"/>
<text x="484.3" y="539.30" text-anchor="end" font-family="'Liberation Serif','Times New Roman',serif" font-size="11.8" textLength="19.20" lengthAdjust="spacingAndGlyphs" fill="#000">0.14</text>
<text x="485.60" y="657.50" text-anchor="middle" font-family="'Liberation Serif','Times New Roman',serif" font-size="11.8" textLength="5.49" lengthAdjust="spacingAndGlyphs" fill="#000">0</text>
<line x1="505.50" y1="648.5" x2="505.50" y2="644.0" stroke="#000" stroke-width="1"/>
<text x="503.70" y="657.50" text-anchor="middle" font-family="'Liberation Serif','Times New Roman',serif" font-size="11.8" textLength="5.49" lengthAdjust="spacingAndGlyphs" fill="#000">2</text>
<line x1="524.50" y1="648.5" x2="524.50" y2="644.0" stroke="#000" stroke-width="1"/>
<text x="522.70" y="657.50" text-anchor="middle" font-family="'Liberation Serif','Times New Roman',serif" font-size="11.8" textLength="5.49" lengthAdjust="spacingAndGlyphs" fill="#000">4</text>
<line x1="543.50" y1="648.5" x2="543.50" y2="644.0" stroke="#000" stroke-width="1"/>
<text x="541.70" y="657.50" text-anchor="middle" font-family="'Liberation Serif','Times New Roman',serif" font-size="11.8" textLength="5.49" lengthAdjust="spacingAndGlyphs" fill="#000">6</text>
<line x1="562.50" y1="648.5" x2="562.50" y2="644.0" stroke="#000" stroke-width="1"/>
<text x="560.70" y="657.50" text-anchor="middle" font-family="'Liberation Serif','Times New Roman',serif" font-size="11.8" textLength="5.49" lengthAdjust="spacingAndGlyphs" fill="#000">8</text>
<line x1="580.50" y1="648.5" x2="580.50" y2="644.0" stroke="#000" stroke-width="1"/>
<text x="580.30" y="657.50" text-anchor="middle" font-family="'Liberation Serif','Times New Roman',serif" font-size="11.8" textLength="10.97" lengthAdjust="spacingAndGlyphs" fill="#000">10</text>
<line x1="599.50" y1="648.5" x2="599.50" y2="644.0" stroke="#000" stroke-width="1"/>
<text x="599.30" y="657.50" text-anchor="middle" font-family="'Liberation Serif','Times New Roman',serif" font-size="11.8" textLength="10.97" lengthAdjust="spacingAndGlyphs" fill="#000">12</text>
<line x1="618.50" y1="648.5" x2="618.50" y2="644.0" stroke="#000" stroke-width="1"/>
<text x="618.30" y="657.50" text-anchor="middle" font-family="'Liberation Serif','Times New Roman',serif" font-size="11.8" textLength="10.97" lengthAdjust="spacingAndGlyphs" fill="#000">14</text>
<text x="637.30" y="657.50" text-anchor="middle" font-family="'Liberation Serif','Times New Roman',serif" font-size="11.8" textLength="10.97" lengthAdjust="spacingAndGlyphs" fill="#000">16</text>
<line x1="486.0" y1="567.50" x2="637.5" y2="567.50" stroke="#ff0000" stroke-width="1" stroke-dasharray="3,3"/>
<text x="496.5" y="521.3" font-family="'Liberation Serif','Times New Roman',serif" font-size="13" fill="#000">Rel. Gain Width</text>
<polyline points="491.12,625.70 500.57,628.50 510.02,629.80 519.48,626.80 528.92,629.70 538.38,614.70 547.82,628.50 557.27,625.70 566.72,630.40 576.17,631.40 585.62,628.90 595.07,632.50 604.52,627.60 613.97,608.00 623.42,624.50 632.88,630.40" fill="none" stroke="#ff00ff" stroke-width="1"/>
<path d="M488.73 627.50L493.52 627.50L491.12 623.10Z" fill="none" stroke="#ff00ff" stroke-width="1"/>
<path d="M498.18 630.30L502.97 630.30L500.57 625.90Z" fill="none" stroke="#ff00ff" stroke-width="1"/>
<path d="M507.62 631.60L512.42 631.60L510.02 627.20Z" fill="none" stroke="#ff00ff" stroke-width="1"/>
<path d="M517.08 628.60L521.88 628.60L519.48 624.20Z" fill="none" stroke="#ff00ff" stroke-width="1"/>
<path d="M526.52 631.50L531.32 631.50L528.92 627.10Z" fill="none" stroke="#ff00ff" stroke-width="1"/>
<path d="M535.98 616.50L540.77 616.50L538.38 612.10Z" fill="none" stroke="#ff00ff" stroke-width="1"/>
<path d="M545.42 630.30L550.22 630.30L547.82 625.90Z" fill="none" stroke="#ff00ff" stroke-width="1"/>
<path d="M554.88 627.50L559.67 627.50L557.27 623.10Z" fill="none" stroke="#ff00ff" stroke-width="1"/>
<path d="M564.32 632.20L569.12 632.20L566.72 627.80Z" fill="none" stroke="#ff00ff" stroke-width="1"/>
<path d="M573.77 633.20L578.57 633.20L576.17 628.80Z" fill="none" stroke="#ff00ff" stroke-width="1"/>
<path d="M583.23 630.70L588.02 630.70L585.62 626.30Z" fill="none" stroke="#ff00ff" stroke-width="1"/>
<path d="M592.67 634.30L597.47 634.30L595.07 629.90Z" fill="none" stroke="#ff00ff" stroke-width="1"/>
<path d="M602.12 629.40L606.92 629.40L604.52 625.00Z" fill="none" stroke="#ff00ff" stroke-width="1"/>
<path d="M611.57 609.80L616.37 609.80L613.97 605.40Z" fill="none" stroke="#ff00ff" stroke-width="1"/>
<path d="M621.02 626.30L625.82 626.30L623.42 621.90Z" fill="none" stroke="#ff00ff" stroke-width="1"/>
<path d="M630.48 632.20L635.27 632.20L632.88 627.80Z" fill="none" stroke="#ff00ff" stroke-width="1"/>
<rect x="706.5" y="527.5" width="151.0" height="121.0" fill="none" stroke="#000" stroke-width="1"/>
<text x="704.3" y="650.30" text-anchor="end" font-family="'Liberation Serif','Times New Roman',serif" font-size="11.8" textLength="5.49" lengthAdjust="spacingAndGlyphs" fill="#000">0</text>
<line x1="706.5" y1="630.50" x2="712.0" y2="630.50" stroke="#000" stroke-width="1"/>
<text x="704.3" y="634.30" text-anchor="end" font-family="'Liberation Serif','Times New Roman',serif" font-size="11.8" textLength="16.46" lengthAdjust="spacingAndGlyphs" fill="#000">500</text>
<line x1="706.5" y1="613.50" x2="712.0" y2="613.50" stroke="#000" stroke-width="1"/>
<text x="704.3" y="617.30" text-anchor="end" font-family="'Liberation Serif','Times New Roman',serif" font-size="11.8" textLength="21.95" lengthAdjust="spacingAndGlyphs" fill="#000">1000</text>
<line x1="706.5" y1="596.50" x2="712.0" y2="596.50" stroke="#000" stroke-width="1"/>
<text x="704.3" y="600.30" text-anchor="end" font-family="'Liberation Serif','Times New Roman',serif" font-size="11.8" textLength="21.95" lengthAdjust="spacingAndGlyphs" fill="#000">1500</text>
<line x1="706.5" y1="579.50" x2="712.0" y2="579.50" stroke="#000" stroke-width="1"/>
<text x="704.3" y="583.30" text-anchor="end" font-family="'Liberation Serif','Times New Roman',serif" font-size="11.8" textLength="21.95" lengthAdjust="spacingAndGlyphs" fill="#000">2000</text>
<line x1="706.5" y1="561.50" x2="712.0" y2="561.50" stroke="#000" stroke-width="1"/>
<text x="704.3" y="565.30" text-anchor="end" font-family="'Liberation Serif','Times New Roman',serif" font-size="11.8" textLength="21.95" lengthAdjust="spacingAndGlyphs" fill="#000">2500</text>
<line x1="706.5" y1="544.50" x2="712.0" y2="544.50" stroke="#000" stroke-width="1"/>
<text x="704.3" y="548.30" text-anchor="end" font-family="'Liberation Serif','Times New Roman',serif" font-size="11.8" textLength="21.95" lengthAdjust="spacingAndGlyphs" fill="#000">3000</text>
<line x1="706.5" y1="527.50" x2="712.0" y2="527.50" stroke="#000" stroke-width="1"/>
<text x="704.3" y="531.30" text-anchor="end" font-family="'Liberation Serif','Times New Roman',serif" font-size="11.8" textLength="21.95" lengthAdjust="spacingAndGlyphs" fill="#000">3500</text>
<text x="705.60" y="657.50" text-anchor="middle" font-family="'Liberation Serif','Times New Roman',serif" font-size="11.8" textLength="5.49" lengthAdjust="spacingAndGlyphs" fill="#000">0</text>
<line x1="725.50" y1="648.5" x2="725.50" y2="644.0" stroke="#000" stroke-width="1"/>
<text x="723.70" y="657.50" text-anchor="middle" font-family="'Liberation Serif','Times New Roman',serif" font-size="11.8" textLength="5.49" lengthAdjust="spacingAndGlyphs" fill="#000">2</text>
<line x1="744.50" y1="648.5" x2="744.50" y2="644.0" stroke="#000" stroke-width="1"/>
<text x="742.70" y="657.50" text-anchor="middle" font-family="'Liberation Serif','Times New Roman',serif" font-size="11.8" textLength="5.49" lengthAdjust="spacingAndGlyphs" fill="#000">4</text>
<line x1="763.50" y1="648.5" x2="763.50" y2="644.0" stroke="#000" stroke-width="1"/>
<text x="761.70" y="657.50" text-anchor="middle" font-family="'Liberation Serif','Times New Roman',serif" font-size="11.8" textLength="5.49" lengthAdjust="spacingAndGlyphs" fill="#000">6</text>
<line x1="782.50" y1="648.5" x2="782.50" y2="644.0" stroke="#000" stroke-width="1"/>
<text x="780.70" y="657.50" text-anchor="middle" font-family="'Liberation Serif','Times New Roman',serif" font-size="11.8" textLength="5.49" lengthAdjust="spacingAndGlyphs" fill="#000">8</text>
<line x1="800.50" y1="648.5" x2="800.50" y2="644.0" stroke="#000" stroke-width="1"/>
<text x="800.30" y="657.50" text-anchor="middle" font-family="'Liberation Serif','Times New Roman',serif" font-size="11.8" textLength="10.97" lengthAdjust="spacingAndGlyphs" fill="#000">10</text>
<line x1="819.50" y1="648.5" x2="819.50" y2="644.0" stroke="#000" stroke-width="1"/>
<text x="819.30" y="657.50" text-anchor="middle" font-family="'Liberation Serif','Times New Roman',serif" font-size="11.8" textLength="10.97" lengthAdjust="spacingAndGlyphs" fill="#000">12</text>
<line x1="838.50" y1="648.5" x2="838.50" y2="644.0" stroke="#000" stroke-width="1"/>
<text x="838.30" y="657.50" text-anchor="middle" font-family="'Liberation Serif','Times New Roman',serif" font-size="11.8" textLength="10.97" lengthAdjust="spacingAndGlyphs" fill="#000">14</text>
<text x="857.30" y="657.50" text-anchor="middle" font-family="'Liberation Serif','Times New Roman',serif" font-size="11.8" textLength="10.97" lengthAdjust="spacingAndGlyphs" fill="#000">16</text>
<line x1="706.0" y1="561.50" x2="857.5" y2="561.50" stroke="#ff0000" stroke-width="1" stroke-dasharray="3,3"/>
<text x="715.2" y="521.3" font-family="'Liberation Serif','Times New Roman',serif" font-size="13" fill="#000">Pedestal Spread</text>
<polyline points="711.12,602.80 720.57,609.80 730.02,608.80 739.48,597.10 748.92,601.40 758.38,602.80 767.82,608.80 777.27,600.50 786.72,609.80 796.17,607.90 805.62,599.70 815.07,605.20 824.52,611.70 833.97,599.50 843.42,593.90 852.88,607.90" fill="none" stroke="#000" stroke-width="1"/>
<path d="M708.73 600.90L713.52 600.90L711.12 605.10Z" fill="#000"/>
<path d="M718.17 607.90L722.97 607.90L720.57 612.10Z" fill="#000"/>
<path d="M727.62 606.90L732.42 606.90L730.02 611.10Z" fill="#000"/>
<path d="M737.08 595.20L741.88 595.20L739.48 599.40Z" fill="#000"/>
<path d="M746.52 599.50L751.32 599.50L748.92 603.70Z" fill="#000"/>
<path d="M755.98 600.90L760.77 600.90L758.38 605.10Z" fill="#000"/>
<path d="M765.42 606.90L770.22 606.90L767.82 611.10Z" fill="#000"/>
<path d="M774.88 598.60L779.67 598.60L777.27 602.80Z" fill="#000"/>
<path d="M784.32 607.90L789.12 607.90L786.72 612.10Z" fill="#000"/>
<path d="M793.77 606.00L798.57 606.00L796.17 610.20Z" fill="#000"/>
<path d="M803.23 597.80L808.02 597.80L805.62 602.00Z" fill="#000"/>
<path d="M812.67 603.30L817.47 603.30L815.07 607.50Z" fill="#000"/>
<path d="M822.12 609.80L826.92 609.80L824.52 614.00Z" fill="#000"/>
<path d="M831.57 597.60L836.37 597.60L833.97 601.80Z" fill="#000"/>
<path d="M841.02 592.00L845.82 592.00L843.42 596.20Z" fill="#000"/>
<path d="M850.48 606.00L855.27 606.00L852.88 610.20Z" fill="#000"/>
</svg>
</body></html>
